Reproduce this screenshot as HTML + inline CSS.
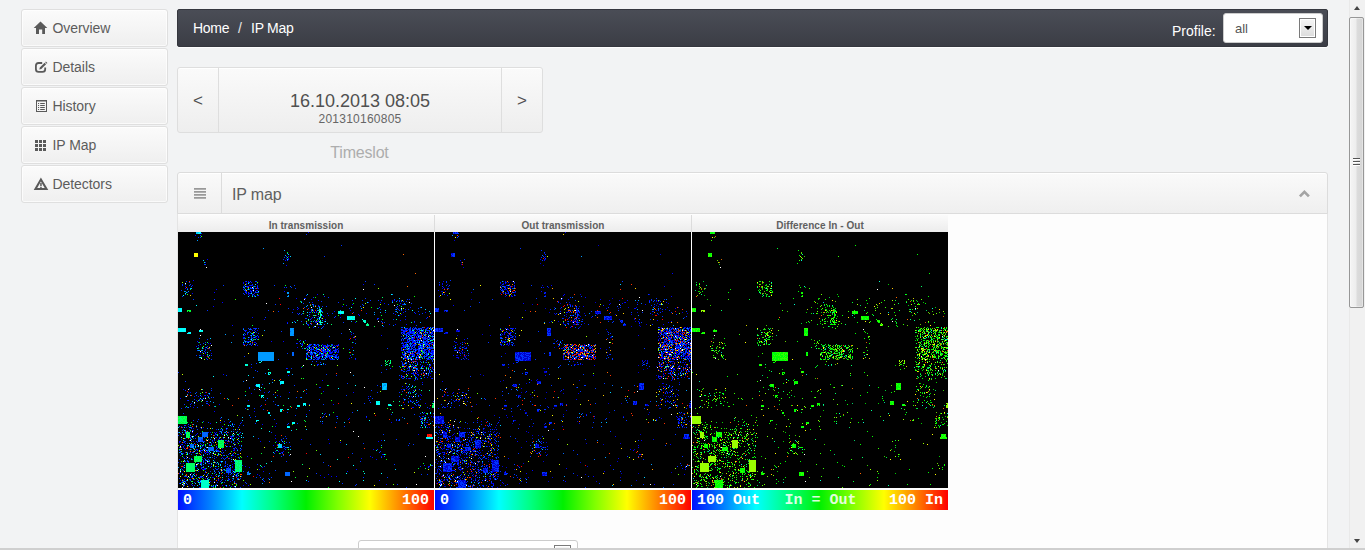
<!DOCTYPE html>
<html>
<head>
<meta charset="utf-8">
<title>IP Map</title>
<style>
*{box-sizing:border-box;margin:0;padding:0}
html,body{width:1365px;height:550px;overflow:hidden}
body{background:#f2f3f4;font-family:"Liberation Sans",sans-serif;color:#555;position:relative}
.abs{position:absolute}
/* sidebar */
.nav{position:absolute;left:21px;width:147px;height:38px;border:1px solid #dfdfdf;border-radius:3px;
 background:linear-gradient(#fbfbfb,#efefef);box-shadow:0 0 0 1px rgba(255,255,255,.7) inset;font-size:14px;color:#5c5c5c;line-height:36px;padding-left:31px}
.nav svg{position:absolute;left:12px;top:11px;width:16px;height:14px;fill:#5a5a5a;overflow:visible}.nav span{position:relative;top:0.4px;left:-0.5px;letter-spacing:-0.06px}
/* breadcrumb */
#crumb{left:177px;top:9px;width:1151px;height:38px;border-radius:2px;background:linear-gradient(#4a4d56,#3b3d45);border:1px solid #35373e;box-shadow:0 1px 0 #fdfdfd;color:#fff;font-size:14px;line-height:36px;padding-left:15px;letter-spacing:-0.3px}
#crumb .sep{position:absolute;left:60px;color:#e8e8e8}#crumb .c2{position:absolute;left:73px;letter-spacing:-0.25px}
#profile{left:994px;top:3px;line-height:36px;letter-spacing:0;font-size:14px;color:#fff}
#psel{left:1223px;top:13px;width:100px;height:30px;background:#fff;border:1px solid #ccc;border-radius:3px;font-size:13px;color:#555;line-height:29px;padding-left:11px}
.ddbtn{position:absolute;width:17px;height:20px;border:1px solid #7a7a7a;background:linear-gradient(#f6f6f6,#dcdcdc);box-shadow:0 0 0 1px #fff inset}
.ddbtn:after{content:"";position:absolute;left:3.5px;top:7px;border:4px solid transparent;border-top:4.5px solid #000;border-bottom:none}
/* timeslot */
#ts{left:177px;top:67px;width:366px;height:66px;border:1px solid #dedede;border-radius:3px;background:linear-gradient(#fafafa,#eeeeee);box-shadow:0 1px 0 #fff inset}
#ts .l,#ts .r{position:absolute;top:0;width:41px;height:64px;font-size:17px;line-height:66px;text-align:center;color:#505050}
#ts .l{left:0;border-right:1px solid #dedede}
#ts .r{right:0;border-left:1px solid #dedede}
#ts .d{position:absolute;left:41px;right:41px;top:23px;text-align:center;font-size:18px;color:#505050}
#ts .s{position:absolute;left:41px;right:41px;top:44px;text-align:center;font-size:12px;color:#666;letter-spacing:0.25px}
#tsl{left:177px;width:365px;top:144px;letter-spacing:-0.2px;text-align:center;font-size:16px;color:#adadad}
/* panel */
#ph{left:177px;top:172px;width:1151px;height:42px;border:1px solid #dcdcdc;border-radius:3px 3px 0 0;background:linear-gradient(#fafafa,#efefef);box-shadow:0 1px 0 #fff inset}
#ph .ic{position:absolute;left:0;top:0;width:44px;height:40px;border-right:1px solid #dcdcdc}
#ph .t{position:absolute;left:54px;top:0;line-height:43px;font-size:16px;color:#606060;letter-spacing:-0.15px}
#pb{left:177px;top:213px;width:1151px;height:340px;background:#fdfdfd;border:1px solid #e4e4e4}
.th{position:absolute;top:215px;height:17px;width:256px;background:linear-gradient(#fbfbfb,#ececec);font-size:10px;font-weight:bold;color:#606060;text-align:center;line-height:22px;letter-spacing:0.05px}
.map{position:absolute;top:232px;width:256px;height:256px;background:#000}
.bar{position:absolute;top:490px;height:20px;width:256px;background:linear-gradient(90deg,#0010ff 0%,#0080ff 12.5%,#00ffff 25%,#00ff80 37.5%,#00f000 50%,#80ff00 62.5%,#ffff00 75%,#ff8000 87.5%,#ff0000 100%);
 font-family:"Liberation Mono",monospace;font-weight:bold;font-size:15px;color:#fff;line-height:22px}
/* scrollbar */
#sb{left:1349px;top:0;width:16px;height:548px;background:#f1f1f1;border-left:1px solid #e9e9e9}
#thumb{left:1349px;top:17px;width:15px;height:291px;border:1px solid #979797;border-radius:2px;background:linear-gradient(90deg,#f5f5f5 0%,#ededed 48%,#dcdcdc 52%,#d6d6d6 100%);box-shadow:0 0 0 1px rgba(255,255,255,.35) inset}
.grip{position:absolute;left:1353px;width:7px;height:2px;background:linear-gradient(#555 50%,#fff 50%)}
.arr{position:absolute;left:1354px;width:0;height:0;border:3.5px solid transparent}
#bot{left:0;top:548px;width:1365px;height:2px;background:#cfcfcf}
</style>
</head>
<body>
<div class="nav" style="top:9px"><svg viewBox="0 0 16 14"><path d="M6.5 0.4 L13.3 7 H11 V13 H8.2 V8.6 H5 V13 H2 V7 H-0.3 Z"/></svg><span>Overview</span></div>
<div class="nav" style="top:48px"><svg viewBox="0 0 16 14"><path d="M8.2 3 H4.6 Q1.9 3 1.9 5.7 V9.2 Q1.9 11.9 4.6 11.9 H8.5 Q11.2 11.9 11.2 9.2 V7.6" fill="none" stroke="#5a5a5a" stroke-width="1.8"/><path d="M5.3 9.6 L5.8 7.6 L10.6 2.8 L12.1 4.3 L7.3 9.1 Z M11.2 2.2 L11.9 1.5 L13.4 3 L12.7 3.7 Z"/></svg><span>Details</span></div>
<div class="nav" style="top:87px"><svg viewBox="0 0 16 14"><path d="M2 1 H13 V13 H2 Z M3 2.4 V12 H12 V2.4 Z M4 4 H5.1 V5 H4Z M6.2 4 H10.8 V5 H6.2Z M4 6 H5.1 V7 H4Z M6.2 6 H10.8 V7 H6.2Z M4 8 H5.1 V9 H4Z M6.2 8 H10.8 V9 H6.2Z M4 10 H5.1 V11 H4Z M6.2 10 H10.8 V11 H6.2Z" fill-rule="evenodd"/></svg><span>History</span></div>
<div class="nav" style="top:126px"><svg viewBox="0 0 16 14"><path d="M1 2h3v3H1z M5 2h3v3H5z M9 2h3v3H9z M1 6h3v3H1z M5 6h3v3H5z M9 6h3v3H9z M1 10h3v3H1z M5 10h3v3H5z M9 10h3v3H9z"/></svg><span>IP Map</span></div>
<div class="nav" style="top:165px"><svg viewBox="0 0 16 14"><path d="M6.9 0.6 L14.3 12.9 H-0.3 Z M6.9 4.5 L3.2 10.9 H10.7 Z M6.2 6 H7.7 V9.3 H6.2Z M6.2 9.9 H7.7 V11 H6.2Z" fill-rule="evenodd"/></svg><span>Detectors</span></div>

<div id="crumb" class="abs">Home<span class="sep">/</span><span class="c2">IP Map</span><span id="profile" class="abs">Profile:</span></div>
<div id="psel" class="abs">all<div class="ddbtn" style="left:75px;top:4px"></div></div>

<div id="ts" class="abs"><div class="l">&lt;</div><div class="d">16.10.2013 08:05</div><div class="s">201310160805</div><div class="r">&gt;</div></div>
<div id="tsl" class="abs">Timeslot</div>

<div id="pb" class="abs"></div>
<div id="ph" class="abs"><div class="ic"><svg width="14" height="12" viewBox="0 0 14 12" style="position:absolute;left:16px;top:15px"><path d="M0 0h12v1.7H0z M0 3h12v1.7H0z M0 6h12v1.7H0z M0 9h12v1.7H0z" fill="#999"/></svg></div><div class="t">IP map</div>
<svg width="14" height="10" viewBox="0 0 14 10" style="position:absolute;left:1120px;top:16px"><path d="M1.9 7.4 L6.4 2.9 L10.9 7.4" stroke="#a4a4a4" stroke-width="2.7" fill="none"/></svg></div>

<div class="th" style="left:178px">In transmission</div>
<div class="th" style="left:435px">Out transmission</div>
<div class="th" style="left:692px">Difference In - Out</div>
<div class="abs" style="left:434px;top:215px;width:1px;height:17px;background:#dcdcdc"></div><div class="abs" style="left:691px;top:215px;width:1px;height:17px;background:#dcdcdc"></div>
<div class="map" style="left:178px" id="m1"><svg width="256" height="256" viewBox="0 0 256 256" shape-rendering="crispEdges" style="display:block"><!--M1s--><path fill="#00ffff" d="M21 0h2v1h-2zM20 1h2v1h-2zM70 51h1v1h-1zM75 56h1v1h-1zM80 59h1v1h-1zM7 61h1v1h-1zM73 61h1v1h-1zM213 62h1v1h-1zM5 63h1v1h-1zM177 66h1v1h-1zM189 70h1v1h-1zM18 73h1v1h-1zM0 76h4v1h-4zM0 77h4v1h-4zM142 77h1v1h-1zM0 78h4v1h-4zM142 78h1v1h-1zM207 78h1v1h-1zM234 78h1v1h-1zM0 79h4v1h-4zM125 79h1v1h-1zM141 79h1v1h-1zM162 79h1v1h-1zM129 80h1v1h-1zM161 80h5v1h-5zM160 81h1v1h-1zM162 81h3v1h-3zM252 81h1v1h-1zM143 82h1v1h-1zM129 83h1v1h-1zM220 83h1v1h-1zM169 84h1v1h-1zM173 84h1v1h-1zM176 84h1v1h-1zM136 85h1v1h-1zM141 85h1v1h-1zM169 85h5v1h-5zM175 85h2v1h-2zM141 86h1v1h-1zM169 86h2v1h-2zM172 86h2v1h-2zM130 87h1v1h-1zM169 87h4v1h-4zM174 87h3v1h-3zM184 87h1v1h-1zM147 89h1v1h-1zM114 90h1v1h-1zM142 90h1v1h-1zM149 91h1v1h-1zM143 92h1v1h-1zM204 93h1v1h-1zM226 95h1v1h-1zM0 96h8v1h-8zM0 97h8v1h-8zM253 97h1v1h-1zM0 98h8v1h-8zM21 98h4v1h-4zM244 98h1v1h-1zM0 99h8v1h-8zM21 99h2v1h-2zM24 99h1v1h-1zM11 100h2v1h-2zM76 100h1v1h-1zM9 101h4v1h-4zM230 104h1v1h-1zM73 107h1v1h-1zM255 107h1v1h-1zM252 108h1v1h-1zM241 110h1v1h-1zM245 110h1v1h-1zM246 112h1v1h-1zM242 113h1v1h-1zM255 113h1v1h-1zM156 115h1v1h-1zM143 116h1v1h-1zM230 116h1v1h-1zM150 117h1v1h-1zM137 121h1v1h-1zM143 121h1v1h-1zM250 122h1v1h-1zM139 123h1v1h-1zM144 124h1v1h-1zM234 124h1v1h-1zM22 125h1v1h-1zM238 125h1v1h-1zM128 126h1v1h-1zM133 126h1v1h-1zM154 126h1v1h-1zM225 126h1v1h-1zM83 129h1v1h-1zM227 131h1v1h-1zM67 132h1v1h-1zM133 132h1v1h-1zM143 132h1v1h-1zM235 135h1v1h-1zM110 139h2v1h-2zM109 140h3v1h-3zM90 141h1v1h-1zM90 142h1v1h-1zM70 143h1v1h-1zM35 144h1v1h-1zM103 149h3v1h-3zM102 150h1v1h-1zM104 150h2v1h-2zM102 151h4v1h-4zM78 152h1v1h-1zM80 152h2v1h-2zM78 153h4v1h-4zM177 153h1v1h-1zM79 154h3v1h-3zM81 155h1v1h-1zM83 155h1v1h-1zM160 156h1v1h-1zM236 159h1v1h-1zM237 162h1v1h-1zM83 163h3v1h-3zM84 164h1v1h-1zM83 165h1v1h-1zM85 165h1v1h-1zM97 165h1v1h-1zM226 167h1v1h-1zM198 169h1v1h-1zM200 169h2v1h-2zM198 170h2v1h-2zM125 171h3v1h-3zM198 171h4v1h-4zM125 172h3v1h-3zM198 172h4v1h-4zM210 172h1v1h-1zM212 172h1v1h-1zM69 173h3v1h-3zM119 173h3v1h-3zM125 173h1v1h-1zM127 173h1v1h-1zM211 173h2v1h-2zM223 173h1v1h-1zM70 174h1v1h-1zM119 174h2v1h-2zM102 177h1v1h-1zM104 177h1v1h-1zM103 178h1v1h-1zM102 179h1v1h-1zM90 180h2v1h-2zM244 180h1v1h-1zM252 180h1v1h-1zM90 181h2v1h-2zM252 181h1v1h-1zM246 186h1v1h-1zM78 188h3v1h-3zM191 188h1v1h-1zM78 189h1v1h-1zM243 189h1v1h-1zM114 190h3v1h-3zM114 191h3v1h-3zM244 191h1v1h-1zM252 191h1v1h-1zM54 192h1v1h-1zM50 193h1v1h-1zM243 193h1v1h-1zM109 194h2v1h-2zM109 195h3v1h-3zM91 199h1v1h-1zM64 201h1v1h-1zM48 202h1v1h-1zM15 204h1v1h-1zM3 205h1v1h-1zM33 205h1v1h-1zM63 205h1v1h-1zM248 205h7v1h-7zM6 206h1v1h-1zM60 206h1v1h-1zM249 206h6v1h-6zM32 210h1v1h-1zM106 211h1v1h-1zM10 213h1v1h-1zM17 214h1v1h-1zM20 214h1v1h-1zM22 216h1v1h-1zM3 217h1v1h-1zM36 219h1v1h-1zM38 219h1v1h-1zM32 220h1v1h-1zM9 222h1v1h-1zM206 222h1v1h-1zM6 228h1v1h-1zM56 228h1v1h-1zM43 229h1v1h-1zM175 233h1v1h-1zM30 234h1v1h-1zM6 235h1v1h-1zM43 235h1v1h-1zM2 237h1v1h-1zM20 237h1v1h-1zM55 239h1v1h-1zM168 241h1v1h-1zM186 241h1v1h-1zM203 241h1v1h-1zM15 242h1v1h-1zM40 244h1v1h-1zM29 246h1v1h-1zM9 248h1v1h-1zM185 248h1v1h-1zM22 249h1v1h-1zM161 249h1v1h-1zM20 250h1v1h-1zM2 251h1v1h-1zM48 253h1v1h-1zM37 254h1v1h-1z"/><path fill="#0033ff" d="M23 1h1v1h-1zM128 2h1v1h-1zM22 3h1v1h-1zM20 5h1v1h-1zM22 5h1v1h-1zM163 13h1v1h-1zM108 24h1v1h-1zM146 24h1v1h-1zM106 25h1v1h-1zM105 27h1v1h-1zM109 28h1v1h-1zM26 32h2v1h-2zM8 49h1v1h-1zM68 49h1v1h-1zM72 49h1v1h-1zM77 49h2v1h-2zM187 49h1v1h-1zM11 50h1v1h-1zM70 50h2v1h-2zM4 52h1v1h-1zM12 52h1v1h-1zM74 52h1v1h-1zM196 52h1v1h-1zM4 53h1v1h-1zM11 53h1v1h-1zM45 53h1v1h-1zM66 53h1v1h-1zM73 53h1v1h-1zM96 53h1v1h-1zM116 53h1v1h-1zM13 54h1v1h-1zM68 54h2v1h-2zM75 54h1v1h-1zM79 54h1v1h-1zM66 55h1v1h-1zM72 55h1v1h-1zM79 55h1v1h-1zM106 55h1v1h-1zM108 55h1v1h-1zM113 55h1v1h-1zM66 56h1v1h-1zM72 56h3v1h-3zM77 56h1v1h-1zM117 56h1v1h-1zM65 57h1v1h-1zM69 57h1v1h-1zM3 58h1v1h-1zM66 58h2v1h-2zM68 59h1v1h-1zM73 59h1v1h-1zM75 59h1v1h-1zM77 59h1v1h-1zM67 60h1v1h-1zM70 60h1v1h-1zM73 60h1v1h-1zM77 60h4v1h-4zM65 61h1v1h-1zM68 61h1v1h-1zM72 61h1v1h-1zM7 62h1v1h-1zM66 62h1v1h-1zM74 62h2v1h-2zM76 63h1v1h-1zM80 63h1v1h-1zM128 63h1v1h-1zM4 64h1v1h-1zM146 64h1v1h-1zM135 65h1v1h-1zM150 65h1v1h-1zM127 66h1v1h-1zM187 66h1v1h-1zM15 67h1v1h-1zM36 67h1v1h-1zM165 67h1v1h-1zM216 67h1v1h-1zM229 67h1v1h-1zM231 67h1v1h-1zM174 68h1v1h-1zM184 68h1v1h-1zM192 68h1v1h-1zM200 68h1v1h-1zM203 68h1v1h-1zM221 68h1v1h-1zM223 68h1v1h-1zM123 69h1v1h-1zM143 69h1v1h-1zM214 69h1v1h-1zM221 69h1v1h-1zM223 69h1v1h-1zM225 69h1v1h-1zM228 69h1v1h-1zM160 70h1v1h-1zM125 71h1v1h-1zM222 71h1v1h-1zM233 71h1v1h-1zM97 72h1v1h-1zM135 72h1v1h-1zM184 72h1v1h-1zM210 72h1v1h-1zM225 72h1v1h-1zM135 73h1v1h-1zM137 73h1v1h-1zM168 73h1v1h-1zM221 73h1v1h-1zM140 74h2v1h-2zM144 74h1v1h-1zM148 74h1v1h-1zM182 74h1v1h-1zM219 74h1v1h-1zM119 75h1v1h-1zM126 75h1v1h-1zM201 75h1v1h-1zM218 75h1v1h-1zM242 75h1v1h-1zM110 76h1v1h-1zM130 76h1v1h-1zM141 76h1v1h-1zM171 76h1v1h-1zM219 76h1v1h-1zM240 76h1v1h-1zM133 77h1v1h-1zM202 77h1v1h-1zM217 77h1v1h-1zM230 77h1v1h-1zM29 78h1v1h-1zM90 78h1v1h-1zM133 78h1v1h-1zM143 78h1v1h-1zM221 78h1v1h-1zM223 78h1v1h-1zM100 79h1v1h-1zM133 79h1v1h-1zM217 79h1v1h-1zM227 79h1v1h-1zM240 79h1v1h-1zM114 80h1v1h-1zM131 80h2v1h-2zM138 80h1v1h-1zM140 80h1v1h-1zM175 80h1v1h-1zM207 80h1v1h-1zM236 80h1v1h-1zM124 81h1v1h-1zM149 81h1v1h-1zM154 81h1v1h-1zM215 81h1v1h-1zM244 81h1v1h-1zM120 82h1v1h-1zM123 82h1v1h-1zM131 82h1v1h-1zM241 82h1v1h-1zM131 84h1v1h-1zM140 84h1v1h-1zM157 84h1v1h-1zM227 84h1v1h-1zM87 85h1v1h-1zM156 85h1v1h-1zM249 85h1v1h-1zM127 86h2v1h-2zM139 86h1v1h-1zM143 86h1v1h-1zM200 86h1v1h-1zM132 87h1v1h-1zM199 87h1v1h-1zM215 87h1v1h-1zM136 88h1v1h-1zM140 88h1v1h-1zM116 89h1v1h-1zM123 89h1v1h-1zM137 89h1v1h-1zM139 89h1v1h-1zM146 89h1v1h-1zM203 89h1v1h-1zM236 89h1v1h-1zM128 90h1v1h-1zM138 90h1v1h-1zM165 90h1v1h-1zM204 90h1v1h-1zM206 90h1v1h-1zM109 91h1v1h-1zM129 92h1v1h-1zM133 92h1v1h-1zM138 92h1v1h-1zM141 92h1v1h-1zM146 92h1v1h-1zM130 93h1v1h-1zM238 93h1v1h-1zM145 94h1v1h-1zM205 94h1v1h-1zM144 95h1v1h-1zM223 95h2v1h-2zM232 95h1v1h-1zM237 95h1v1h-1zM245 95h1v1h-1zM254 95h2v1h-2zM65 96h1v1h-1zM70 96h1v1h-1zM72 96h1v1h-1zM76 96h3v1h-3zM80 96h1v1h-1zM227 96h3v1h-3zM232 96h1v1h-1zM234 96h1v1h-1zM236 96h3v1h-3zM240 96h4v1h-4zM249 96h1v1h-1zM252 96h2v1h-2zM73 97h1v1h-1zM77 97h1v1h-1zM223 97h1v1h-1zM227 97h1v1h-1zM231 97h2v1h-2zM234 97h3v1h-3zM238 97h4v1h-4zM245 97h1v1h-1zM247 97h2v1h-2zM252 97h1v1h-1zM66 98h1v1h-1zM223 98h1v1h-1zM225 98h1v1h-1zM228 98h2v1h-2zM231 98h2v1h-2zM241 98h1v1h-1zM245 98h1v1h-1zM249 98h3v1h-3zM253 98h1v1h-1zM67 99h1v1h-1zM71 99h1v1h-1zM77 99h1v1h-1zM103 99h1v1h-1zM225 99h3v1h-3zM231 99h2v1h-2zM235 99h1v1h-1zM238 99h1v1h-1zM240 99h1v1h-1zM244 99h1v1h-1zM251 99h1v1h-1zM254 99h2v1h-2zM69 100h1v1h-1zM72 100h1v1h-1zM173 100h1v1h-1zM223 100h1v1h-1zM230 100h1v1h-1zM235 100h2v1h-2zM239 100h1v1h-1zM243 100h1v1h-1zM247 100h2v1h-2zM253 100h1v1h-1zM66 101h1v1h-1zM69 101h1v1h-1zM75 101h1v1h-1zM80 101h1v1h-1zM163 101h1v1h-1zM175 101h1v1h-1zM223 101h1v1h-1zM225 101h2v1h-2zM228 101h2v1h-2zM234 101h2v1h-2zM238 101h2v1h-2zM241 101h2v1h-2zM245 101h1v1h-1zM252 101h3v1h-3zM67 102h1v1h-1zM74 102h1v1h-1zM224 102h1v1h-1zM226 102h3v1h-3zM230 102h2v1h-2zM236 102h2v1h-2zM243 102h1v1h-1zM245 102h2v1h-2zM248 102h1v1h-1zM250 102h1v1h-1zM55 103h1v1h-1zM72 103h1v1h-1zM79 103h1v1h-1zM231 103h2v1h-2zM235 103h1v1h-1zM240 103h2v1h-2zM243 103h1v1h-1zM250 103h1v1h-1zM252 103h1v1h-1zM73 104h1v1h-1zM77 104h2v1h-2zM151 104h1v1h-1zM223 104h1v1h-1zM225 104h1v1h-1zM228 104h1v1h-1zM232 104h2v1h-2zM236 104h1v1h-1zM238 104h1v1h-1zM241 104h1v1h-1zM245 104h1v1h-1zM247 104h1v1h-1zM253 104h1v1h-1zM66 105h1v1h-1zM73 105h1v1h-1zM75 105h1v1h-1zM175 105h1v1h-1zM228 105h1v1h-1zM231 105h1v1h-1zM233 105h1v1h-1zM235 105h1v1h-1zM238 105h1v1h-1zM240 105h1v1h-1zM242 105h1v1h-1zM246 105h2v1h-2zM250 105h2v1h-2zM21 106h1v1h-1zM65 106h1v1h-1zM73 106h2v1h-2zM224 106h1v1h-1zM227 106h1v1h-1zM230 106h1v1h-1zM234 106h1v1h-1zM241 106h1v1h-1zM245 106h4v1h-4zM251 106h2v1h-2zM255 106h1v1h-1zM29 107h1v1h-1zM70 107h1v1h-1zM72 107h1v1h-1zM76 107h1v1h-1zM79 107h1v1h-1zM223 107h1v1h-1zM225 107h1v1h-1zM229 107h3v1h-3zM239 107h1v1h-1zM242 107h1v1h-1zM247 107h1v1h-1zM249 107h1v1h-1zM251 107h1v1h-1zM73 108h1v1h-1zM122 108h1v1h-1zM223 108h1v1h-1zM229 108h1v1h-1zM231 108h3v1h-3zM235 108h1v1h-1zM238 108h5v1h-5zM245 108h1v1h-1zM248 108h2v1h-2zM68 109h1v1h-1zM71 109h1v1h-1zM121 109h1v1h-1zM231 109h1v1h-1zM235 109h1v1h-1zM237 109h1v1h-1zM239 109h1v1h-1zM243 109h2v1h-2zM246 109h2v1h-2zM249 109h1v1h-1zM252 109h1v1h-1zM20 110h1v1h-1zM27 110h1v1h-1zM67 110h1v1h-1zM69 110h1v1h-1zM224 110h1v1h-1zM227 110h4v1h-4zM232 110h1v1h-1zM234 110h1v1h-1zM237 110h1v1h-1zM246 110h2v1h-2zM250 110h1v1h-1zM253 110h1v1h-1zM25 111h1v1h-1zM72 111h1v1h-1zM74 111h1v1h-1zM78 111h1v1h-1zM118 111h1v1h-1zM223 111h2v1h-2zM231 111h1v1h-1zM233 111h1v1h-1zM241 111h1v1h-1zM243 111h2v1h-2zM246 111h3v1h-3zM252 111h1v1h-1zM22 112h1v1h-1zM65 112h1v1h-1zM69 112h1v1h-1zM71 112h2v1h-2zM77 112h1v1h-1zM124 112h1v1h-1zM131 112h3v1h-3zM139 112h2v1h-2zM149 112h1v1h-1zM153 112h2v1h-2zM227 112h2v1h-2zM232 112h2v1h-2zM237 112h2v1h-2zM242 112h1v1h-1zM247 112h1v1h-1zM249 112h2v1h-2zM255 112h1v1h-1zM20 113h1v1h-1zM68 113h1v1h-1zM73 113h1v1h-1zM124 113h1v1h-1zM130 113h3v1h-3zM136 113h1v1h-1zM138 113h1v1h-1zM147 113h1v1h-1zM149 113h3v1h-3zM154 113h1v1h-1zM160 113h1v1h-1zM225 113h1v1h-1zM228 113h3v1h-3zM234 113h1v1h-1zM236 113h2v1h-2zM243 113h2v1h-2zM250 113h2v1h-2zM129 114h3v1h-3zM134 114h2v1h-2zM140 114h1v1h-1zM143 114h1v1h-1zM149 114h1v1h-1zM157 114h1v1h-1zM225 114h1v1h-1zM227 114h2v1h-2zM230 114h3v1h-3zM234 114h1v1h-1zM236 114h1v1h-1zM240 114h1v1h-1zM242 114h1v1h-1zM247 114h1v1h-1zM251 114h1v1h-1zM255 114h1v1h-1zM135 115h1v1h-1zM147 115h2v1h-2zM154 115h1v1h-1zM229 115h1v1h-1zM231 115h1v1h-1zM233 115h1v1h-1zM236 115h1v1h-1zM243 115h2v1h-2zM246 115h1v1h-1zM248 115h1v1h-1zM250 115h1v1h-1zM252 115h2v1h-2zM25 116h1v1h-1zM29 116h1v1h-1zM124 116h1v1h-1zM129 116h1v1h-1zM133 116h1v1h-1zM138 116h2v1h-2zM146 116h1v1h-1zM154 116h1v1h-1zM160 116h1v1h-1zM209 116h1v1h-1zM223 116h1v1h-1zM228 116h1v1h-1zM231 116h1v1h-1zM233 116h2v1h-2zM237 116h1v1h-1zM240 116h1v1h-1zM242 116h1v1h-1zM244 116h1v1h-1zM250 116h1v1h-1zM253 116h3v1h-3zM27 117h1v1h-1zM130 117h1v1h-1zM132 117h2v1h-2zM135 117h1v1h-1zM138 117h1v1h-1zM145 117h2v1h-2zM149 117h1v1h-1zM152 117h1v1h-1zM157 117h1v1h-1zM159 117h1v1h-1zM171 117h1v1h-1zM227 117h1v1h-1zM232 117h2v1h-2zM235 117h3v1h-3zM239 117h3v1h-3zM246 117h3v1h-3zM19 118h1v1h-1zM32 118h1v1h-1zM129 118h1v1h-1zM136 118h1v1h-1zM147 118h1v1h-1zM149 118h1v1h-1zM155 118h3v1h-3zM223 118h1v1h-1zM225 118h1v1h-1zM240 118h3v1h-3zM244 118h1v1h-1zM246 118h1v1h-1zM250 118h1v1h-1zM254 118h2v1h-2zM26 119h1v1h-1zM133 119h1v1h-1zM138 119h1v1h-1zM140 119h1v1h-1zM145 119h1v1h-1zM147 119h5v1h-5zM158 119h1v1h-1zM160 119h1v1h-1zM226 119h1v1h-1zM228 119h1v1h-1zM232 119h2v1h-2zM235 119h3v1h-3zM240 119h1v1h-1zM246 119h1v1h-1zM251 119h1v1h-1zM253 119h1v1h-1zM24 120h1v1h-1zM27 120h1v1h-1zM129 120h1v1h-1zM131 120h2v1h-2zM135 120h1v1h-1zM137 120h1v1h-1zM139 120h1v1h-1zM142 120h1v1h-1zM145 120h1v1h-1zM153 120h1v1h-1zM226 120h2v1h-2zM229 120h3v1h-3zM234 120h1v1h-1zM244 120h1v1h-1zM246 120h2v1h-2zM251 120h1v1h-1zM255 120h1v1h-1zM109 121h1v1h-1zM129 121h1v1h-1zM132 121h2v1h-2zM136 121h1v1h-1zM138 121h1v1h-1zM141 121h1v1h-1zM148 121h1v1h-1zM152 121h1v1h-1zM228 121h1v1h-1zM238 121h1v1h-1zM240 121h2v1h-2zM243 121h1v1h-1zM248 121h1v1h-1zM252 121h1v1h-1zM255 121h1v1h-1zM132 122h2v1h-2zM140 122h2v1h-2zM143 122h3v1h-3zM147 122h1v1h-1zM149 122h1v1h-1zM155 122h2v1h-2zM225 122h1v1h-1zM227 122h1v1h-1zM231 122h1v1h-1zM234 122h1v1h-1zM236 122h1v1h-1zM243 122h2v1h-2zM248 122h2v1h-2zM254 122h2v1h-2zM18 123h1v1h-1zM21 123h1v1h-1zM29 123h1v1h-1zM33 123h1v1h-1zM130 123h1v1h-1zM133 123h1v1h-1zM135 123h1v1h-1zM144 123h1v1h-1zM148 123h4v1h-4zM153 123h2v1h-2zM157 123h2v1h-2zM172 123h1v1h-1zM225 123h1v1h-1zM234 123h1v1h-1zM236 123h1v1h-1zM239 123h2v1h-2zM246 123h1v1h-1zM248 123h2v1h-2zM252 123h1v1h-1zM254 123h1v1h-1zM30 124h1v1h-1zM66 124h1v1h-1zM130 124h2v1h-2zM137 124h2v1h-2zM141 124h1v1h-1zM150 124h2v1h-2zM153 124h1v1h-1zM155 124h1v1h-1zM157 124h2v1h-2zM160 124h1v1h-1zM226 124h2v1h-2zM230 124h2v1h-2zM240 124h1v1h-1zM242 124h1v1h-1zM245 124h4v1h-4zM251 124h1v1h-1zM128 125h1v1h-1zM132 125h1v1h-1zM135 125h2v1h-2zM138 125h3v1h-3zM146 125h4v1h-4zM151 125h1v1h-1zM158 125h3v1h-3zM173 125h1v1h-1zM224 125h1v1h-1zM227 125h1v1h-1zM230 125h1v1h-1zM232 125h1v1h-1zM240 125h1v1h-1zM243 125h2v1h-2zM250 125h1v1h-1zM252 125h1v1h-1zM140 126h2v1h-2zM143 126h1v1h-1zM158 126h1v1h-1zM160 126h1v1h-1zM177 126h1v1h-1zM226 126h1v1h-1zM229 126h1v1h-1zM231 126h1v1h-1zM233 126h1v1h-1zM237 126h2v1h-2zM241 126h1v1h-1zM246 126h1v1h-1zM248 126h2v1h-2zM252 126h2v1h-2zM255 126h1v1h-1zM29 127h1v1h-1zM33 127h1v1h-1zM100 127h1v1h-1zM132 127h1v1h-1zM136 127h1v1h-1zM139 127h2v1h-2zM143 127h2v1h-2zM154 127h3v1h-3zM225 127h1v1h-1zM232 127h1v1h-1zM235 127h1v1h-1zM238 127h2v1h-2zM242 127h1v1h-1zM249 127h2v1h-2zM253 127h1v1h-1zM233 128h1v1h-1zM248 128h1v1h-1zM254 128h1v1h-1zM134 129h1v1h-1zM138 129h1v1h-1zM223 129h1v1h-1zM236 129h1v1h-1zM242 129h1v1h-1zM245 129h1v1h-1zM254 129h1v1h-1zM142 130h1v1h-1zM227 130h2v1h-2zM78 131h1v1h-1zM224 131h1v1h-1zM228 131h1v1h-1zM237 131h1v1h-1zM239 131h1v1h-1zM255 131h1v1h-1zM73 132h1v1h-1zM140 132h1v1h-1zM142 132h1v1h-1zM145 132h1v1h-1zM147 132h1v1h-1zM224 132h3v1h-3zM232 132h1v1h-1zM234 132h1v1h-1zM242 132h1v1h-1zM249 132h1v1h-1zM139 133h1v1h-1zM203 133h1v1h-1zM224 133h1v1h-1zM228 133h1v1h-1zM235 133h1v1h-1zM244 133h1v1h-1zM252 133h1v1h-1zM221 134h1v1h-1zM233 134h2v1h-2zM236 134h1v1h-1zM244 134h1v1h-1zM251 134h1v1h-1zM123 135h1v1h-1zM226 135h1v1h-1zM230 135h1v1h-1zM108 136h1v1h-1zM113 136h1v1h-1zM212 136h1v1h-1zM229 136h1v1h-1zM231 136h1v1h-1zM236 136h2v1h-2zM239 136h1v1h-1zM242 136h1v1h-1zM245 136h1v1h-1zM208 137h1v1h-1zM234 137h1v1h-1zM238 137h1v1h-1zM248 137h1v1h-1zM255 137h1v1h-1zM77 138h1v1h-1zM223 138h1v1h-1zM230 138h2v1h-2zM234 138h1v1h-1zM243 138h1v1h-1zM248 138h1v1h-1zM251 138h1v1h-1zM79 139h1v1h-1zM225 139h2v1h-2zM228 139h1v1h-1zM251 139h1v1h-1zM254 139h1v1h-1zM0 140h1v1h-1zM203 140h1v1h-1zM235 140h1v1h-1zM237 140h1v1h-1zM245 140h1v1h-1zM251 140h1v1h-1zM233 141h1v1h-1zM235 141h1v1h-1zM243 141h1v1h-1zM247 141h1v1h-1zM148 142h1v1h-1zM248 142h1v1h-1zM250 142h1v1h-1zM48 143h1v1h-1zM158 143h1v1h-1zM221 143h1v1h-1zM223 143h1v1h-1zM246 143h1v1h-1zM250 143h1v1h-1zM224 144h1v1h-1zM237 144h1v1h-1zM242 144h1v1h-1zM223 145h1v1h-1zM237 145h2v1h-2zM246 145h1v1h-1zM225 146h1v1h-1zM228 146h1v1h-1zM231 146h2v1h-2zM254 146h1v1h-1zM94 147h1v1h-1zM221 147h1v1h-1zM237 147h1v1h-1zM239 147h1v1h-1zM7 149h1v1h-1zM169 151h1v1h-1zM228 151h1v1h-1zM84 152h1v1h-1zM244 152h1v1h-1zM77 153h1v1h-1zM116 153h1v1h-1zM199 153h1v1h-1zM234 153h1v1h-1zM202 154h1v1h-1zM71 155h1v1h-1zM141 155h1v1h-1zM11 156h1v1h-1zM33 156h1v1h-1zM71 156h1v1h-1zM231 156h1v1h-1zM76 157h1v1h-1zM225 157h2v1h-2zM230 157h1v1h-1zM237 157h1v1h-1zM241 157h1v1h-1zM7 158h1v1h-1zM33 158h1v1h-1zM82 158h1v1h-1zM193 158h1v1h-1zM235 158h1v1h-1zM91 159h1v1h-1zM224 159h1v1h-1zM18 160h1v1h-1zM27 160h1v1h-1zM90 160h1v1h-1zM199 160h1v1h-1zM221 160h1v1h-1zM232 160h1v1h-1zM30 161h1v1h-1zM42 161h1v1h-1zM230 161h1v1h-1zM238 161h1v1h-1zM95 162h1v1h-1zM18 163h1v1h-1zM29 163h1v1h-1zM168 163h1v1h-1zM228 163h1v1h-1zM240 163h1v1h-1zM30 164h1v1h-1zM102 164h1v1h-1zM192 164h1v1h-1zM221 164h1v1h-1zM240 164h1v1h-1zM33 165h1v1h-1zM35 165h1v1h-1zM118 165h1v1h-1zM122 165h1v1h-1zM234 165h1v1h-1zM31 166h1v1h-1zM89 166h1v1h-1zM190 166h1v1h-1zM194 166h1v1h-1zM230 166h1v1h-1zM16 167h1v1h-1zM21 167h1v1h-1zM23 167h2v1h-2zM141 167h1v1h-1zM227 167h1v1h-1zM10 168h1v1h-1zM21 168h1v1h-1zM87 168h1v1h-1zM191 168h1v1h-1zM232 168h1v1h-1zM19 169h1v1h-1zM28 169h2v1h-2zM95 169h1v1h-1zM230 169h1v1h-1zM232 169h1v1h-1zM235 169h1v1h-1zM240 169h1v1h-1zM255 169h1v1h-1zM192 170h1v1h-1zM230 170h1v1h-1zM238 170h2v1h-2zM28 171h2v1h-2zM186 171h1v1h-1zM6 172h1v1h-1zM12 172h1v1h-1zM97 172h1v1h-1zM131 172h1v1h-1zM145 172h1v1h-1zM237 172h1v1h-1zM240 172h1v1h-1zM83 173h1v1h-1zM99 173h1v1h-1zM240 173h2v1h-2zM12 174h1v1h-1zM7 175h1v1h-1zM9 175h1v1h-1zM19 175h1v1h-1zM249 175h1v1h-1zM3 176h1v1h-1zM67 176h1v1h-1zM76 176h1v1h-1zM70 177h1v1h-1zM85 177h1v1h-1zM131 178h1v1h-1zM109 180h1v1h-1zM174 180h1v1h-1zM5 181h1v1h-1zM242 181h1v1h-1zM245 181h1v1h-1zM255 181h1v1h-1zM146 182h1v1h-1zM213 182h1v1h-1zM236 182h1v1h-1zM249 182h1v1h-1zM117 183h1v1h-1zM151 183h1v1h-1zM247 183h1v1h-1zM77 184h1v1h-1zM145 184h1v1h-1zM159 184h1v1h-1zM188 184h1v1h-1zM241 184h1v1h-1zM245 184h1v1h-1zM72 185h1v1h-1zM144 185h1v1h-1zM224 185h1v1h-1zM246 185h1v1h-1zM250 185h1v1h-1zM20 187h1v1h-1zM96 187h1v1h-1zM218 187h1v1h-1zM242 187h3v1h-3zM246 187h1v1h-1zM251 187h1v1h-1zM15 188h1v1h-1zM218 188h1v1h-1zM244 188h1v1h-1zM19 189h1v1h-1zM25 189h1v1h-1zM254 189h1v1h-1zM30 190h1v1h-1zM158 190h1v1h-1zM246 190h1v1h-1zM249 190h1v1h-1zM54 191h1v1h-1zM62 191h1v1h-1zM77 191h1v1h-1zM110 191h1v1h-1zM119 191h1v1h-1zM10 192h1v1h-1zM56 192h1v1h-1zM109 192h1v1h-1zM246 192h1v1h-1zM6 193h2v1h-2zM18 193h1v1h-1zM65 193h1v1h-1zM246 193h1v1h-1zM1 194h1v1h-1zM166 194h1v1h-1zM4 195h1v1h-1zM13 195h1v1h-1zM60 195h1v1h-1zM242 195h1v1h-1zM13 196h1v1h-1zM23 196h1v1h-1zM5 197h1v1h-1zM19 197h1v1h-1zM55 197h1v1h-1zM4 198h1v1h-1zM14 198h1v1h-1zM7 199h1v1h-1zM12 199h1v1h-1zM43 199h1v1h-1zM55 199h1v1h-1zM59 199h1v1h-1zM0 200h1v1h-1zM46 200h1v1h-1zM50 200h1v1h-1zM62 200h1v1h-1zM93 200h1v1h-1zM7 201h1v1h-1zM22 201h1v1h-1zM37 201h1v1h-1zM43 201h1v1h-1zM61 201h1v1h-1zM38 202h1v1h-1zM44 202h1v1h-1zM205 202h1v1h-1zM0 203h1v1h-1zM17 203h1v1h-1zM36 203h1v1h-1zM54 203h1v1h-1zM60 203h1v1h-1zM13 204h1v1h-1zM53 204h3v1h-3zM107 204h1v1h-1zM12 205h1v1h-1zM26 205h1v1h-1zM38 205h1v1h-1zM41 205h1v1h-1zM15 206h1v1h-1zM17 206h1v1h-1zM54 206h1v1h-1zM80 206h1v1h-1zM105 206h1v1h-1zM108 206h1v1h-1zM23 207h2v1h-2zM30 207h1v1h-1zM36 207h1v1h-1zM103 207h1v1h-1zM218 207h1v1h-1zM11 208h1v1h-1zM21 208h1v1h-1zM23 208h2v1h-2zM34 208h1v1h-1zM47 208h1v1h-1zM60 208h1v1h-1zM103 208h1v1h-1zM2 209h1v1h-1zM6 209h2v1h-2zM13 209h1v1h-1zM18 209h1v1h-1zM23 209h1v1h-1zM26 209h1v1h-1zM51 209h1v1h-1zM53 209h1v1h-1zM91 209h1v1h-1zM6 210h1v1h-1zM35 210h1v1h-1zM53 210h1v1h-1zM108 210h1v1h-1zM111 210h1v1h-1zM9 211h1v1h-1zM22 211h1v1h-1zM47 211h1v1h-1zM185 211h1v1h-1zM231 211h1v1h-1zM4 212h1v1h-1zM25 212h1v1h-1zM33 212h1v1h-1zM132 212h1v1h-1zM235 212h1v1h-1zM17 213h1v1h-1zM25 213h1v1h-1zM32 213h1v1h-1zM230 213h1v1h-1zM5 214h1v1h-1zM19 214h1v1h-1zM27 214h1v1h-1zM38 214h1v1h-1zM63 214h1v1h-1zM105 214h2v1h-2zM112 214h1v1h-1zM1 215h1v1h-1zM22 215h2v1h-2zM57 215h1v1h-1zM108 215h1v1h-1zM6 216h1v1h-1zM16 216h1v1h-1zM26 216h1v1h-1zM39 216h1v1h-1zM55 216h2v1h-2zM58 216h1v1h-1zM97 216h1v1h-1zM18 217h1v1h-1zM26 217h2v1h-2zM38 217h1v1h-1zM107 217h1v1h-1zM199 217h1v1h-1zM1 218h1v1h-1zM17 218h1v1h-1zM19 218h1v1h-1zM24 218h1v1h-1zM29 218h1v1h-1zM37 218h3v1h-3zM47 218h1v1h-1zM62 218h1v1h-1zM2 219h1v1h-1zM22 219h1v1h-1zM29 219h1v1h-1zM39 219h3v1h-3zM202 219h1v1h-1zM2 220h1v1h-1zM9 220h1v1h-1zM14 220h2v1h-2zM23 220h1v1h-1zM43 220h1v1h-1zM45 220h1v1h-1zM104 220h1v1h-1zM201 220h1v1h-1zM4 221h1v1h-1zM11 221h1v1h-1zM27 221h1v1h-1zM31 221h1v1h-1zM34 221h1v1h-1zM51 221h1v1h-1zM55 221h1v1h-1zM96 221h1v1h-1zM102 221h1v1h-1zM104 221h1v1h-1zM174 221h1v1h-1zM3 222h1v1h-1zM13 222h1v1h-1zM25 222h1v1h-1zM41 222h1v1h-1zM50 222h1v1h-1zM54 222h1v1h-1zM59 222h2v1h-2zM205 222h1v1h-1zM23 223h1v1h-1zM34 223h1v1h-1zM45 223h1v1h-1zM48 223h1v1h-1zM105 223h1v1h-1zM111 223h1v1h-1zM8 224h1v1h-1zM36 224h1v1h-1zM103 224h1v1h-1zM24 225h1v1h-1zM29 225h1v1h-1zM31 225h1v1h-1zM34 225h1v1h-1zM48 225h1v1h-1zM203 225h1v1h-1zM8 226h1v1h-1zM11 226h1v1h-1zM13 226h1v1h-1zM36 226h1v1h-1zM43 226h1v1h-1zM45 226h1v1h-1zM47 226h1v1h-1zM51 226h1v1h-1zM61 226h1v1h-1zM1 227h1v1h-1zM14 227h1v1h-1zM24 227h1v1h-1zM30 227h1v1h-1zM46 227h1v1h-1zM9 228h1v1h-1zM27 228h1v1h-1zM29 228h1v1h-1zM31 228h1v1h-1zM7 229h1v1h-1zM9 229h1v1h-1zM25 229h1v1h-1zM31 229h1v1h-1zM36 229h1v1h-1zM47 229h1v1h-1zM53 229h1v1h-1zM56 229h1v1h-1zM108 229h1v1h-1zM182 229h1v1h-1zM0 230h1v1h-1zM25 230h1v1h-1zM27 230h1v1h-1zM43 230h1v1h-1zM47 230h1v1h-1zM145 230h1v1h-1zM2 231h1v1h-1zM19 231h1v1h-1zM22 231h2v1h-2zM31 231h1v1h-1zM38 231h1v1h-1zM47 231h1v1h-1zM56 231h1v1h-1zM33 232h1v1h-1zM49 232h1v1h-1zM79 232h1v1h-1zM216 232h1v1h-1zM47 233h1v1h-1zM51 233h1v1h-1zM64 233h1v1h-1zM150 233h1v1h-1zM246 233h1v1h-1zM253 233h2v1h-2zM18 234h1v1h-1zM25 234h1v1h-1zM33 234h1v1h-1zM47 234h1v1h-1zM49 234h1v1h-1zM86 234h1v1h-1zM242 234h1v1h-1zM24 235h1v1h-1zM32 235h1v1h-1zM50 235h1v1h-1zM250 235h1v1h-1zM19 236h1v1h-1zM23 236h1v1h-1zM27 236h1v1h-1zM37 236h1v1h-1zM40 236h1v1h-1zM48 236h1v1h-1zM50 236h3v1h-3zM4 237h1v1h-1zM35 237h1v1h-1zM38 237h2v1h-2zM42 237h1v1h-1zM45 237h1v1h-1zM48 237h3v1h-3zM5 238h1v1h-1zM36 238h1v1h-1zM44 238h1v1h-1zM51 238h1v1h-1zM97 238h1v1h-1zM27 239h1v1h-1zM32 239h1v1h-1zM40 239h1v1h-1zM49 239h1v1h-1zM51 239h2v1h-2zM56 239h1v1h-1zM65 239h1v1h-1zM70 239h1v1h-1zM2 240h1v1h-1zM27 240h1v1h-1zM37 240h1v1h-1zM48 240h1v1h-1zM51 240h1v1h-1zM61 240h1v1h-1zM4 241h1v1h-1zM13 241h1v1h-1zM16 241h1v1h-1zM36 241h1v1h-1zM46 241h1v1h-1zM50 241h1v1h-1zM59 241h1v1h-1zM91 241h1v1h-1zM138 241h1v1h-1zM26 242h1v1h-1zM29 242h1v1h-1zM52 242h1v1h-1zM58 242h1v1h-1zM243 242h1v1h-1zM249 242h1v1h-1zM12 243h1v1h-1zM14 243h1v1h-1zM18 243h1v1h-1zM40 243h1v1h-1zM44 243h1v1h-1zM57 243h1v1h-1zM6 244h3v1h-3zM22 244h2v1h-2zM48 244h1v1h-1zM50 244h1v1h-1zM58 244h1v1h-1zM63 244h1v1h-1zM9 245h1v1h-1zM14 245h1v1h-1zM21 245h1v1h-1zM23 245h1v1h-1zM30 245h1v1h-1zM78 245h1v1h-1zM82 245h1v1h-1zM93 245h1v1h-1zM185 245h1v1h-1zM209 245h1v1h-1zM1 246h1v1h-1zM50 246h1v1h-1zM54 246h1v1h-1zM59 246h2v1h-2zM62 246h1v1h-1zM85 246h1v1h-1zM6 247h1v1h-1zM11 247h2v1h-2zM15 247h2v1h-2zM19 247h1v1h-1zM44 247h1v1h-1zM51 247h1v1h-1zM59 247h1v1h-1zM8 248h1v1h-1zM12 248h1v1h-1zM43 248h1v1h-1zM47 248h1v1h-1zM50 248h1v1h-1zM54 248h1v1h-1zM5 249h1v1h-1zM7 249h1v1h-1zM19 249h1v1h-1zM42 249h1v1h-1zM56 249h1v1h-1zM86 249h1v1h-1zM130 249h1v1h-1zM7 250h1v1h-1zM16 250h1v1h-1zM43 250h1v1h-1zM46 250h1v1h-1zM67 250h1v1h-1zM1 251h1v1h-1zM21 251h1v1h-1zM58 251h1v1h-1zM68 251h1v1h-1zM164 251h1v1h-1zM5 252h2v1h-2zM9 252h1v1h-1zM38 252h1v1h-1zM178 252h1v1h-1zM219 252h1v1h-1zM6 253h1v1h-1zM14 253h1v1h-1zM16 253h1v1h-1zM31 253h1v1h-1zM38 253h1v1h-1zM51 253h1v1h-1zM177 253h1v1h-1zM5 254h1v1h-1zM33 254h3v1h-3zM21 255h1v1h-1zM57 255h1v1h-1zM62 255h1v1h-1zM228 255h1v1h-1z"/><path fill="#00ff33" d="M107 53h1v1h-1zM76 54h1v1h-1zM70 56h1v1h-1zM12 57h1v1h-1zM79 62h1v1h-1zM199 76h1v1h-1zM9 78h4v1h-4zM9 79h1v1h-1zM11 79h2v1h-2zM203 83h1v1h-1zM130 88h1v1h-1zM178 89h1v1h-1zM74 93h1v1h-1zM196 94h1v1h-1zM131 95h1v1h-1zM242 98h1v1h-1zM73 101h1v1h-1zM236 101h1v1h-1zM232 106h1v1h-1zM74 108h1v1h-1zM254 108h1v1h-1zM232 111h1v1h-1zM129 117h1v1h-1zM243 119h1v1h-1zM171 120h1v1h-1zM244 121h1v1h-1zM129 122h1v1h-1zM174 122h1v1h-1zM232 126h1v1h-1zM145 127h1v1h-1zM210 128h1v1h-1zM212 129h1v1h-1zM208 130h1v1h-1zM245 130h1v1h-1zM207 133h1v1h-1zM125 146h1v1h-1zM236 155h1v1h-1zM223 162h1v1h-1zM81 163h1v1h-1zM23 169h1v1h-1zM105 173h1v1h-1zM221 173h1v1h-1zM8 174h1v1h-1zM212 177h1v1h-1zM0 184h2v1h-2zM5 184h1v1h-1zM7 184h2v1h-2zM0 185h1v1h-1zM3 185h3v1h-3zM7 185h1v1h-1zM4 186h1v1h-1zM7 186h2v1h-2zM0 187h2v1h-2zM5 187h2v1h-2zM8 187h1v1h-1zM0 188h1v1h-1zM5 188h2v1h-2zM8 188h1v1h-1zM126 188h1v1h-1zM3 189h1v1h-1zM127 189h1v1h-1zM1 190h2v1h-2zM4 190h2v1h-2zM7 190h1v1h-1zM9 190h1v1h-1zM24 190h1v1h-1zM3 191h1v1h-1zM12 193h1v1h-1zM94 194h1v1h-1zM24 199h1v1h-1zM9 200h1v1h-1zM11 200h1v1h-1zM10 202h1v1h-1zM39 202h1v1h-1zM46 202h1v1h-1zM10 203h1v1h-1zM11 204h1v1h-1zM9 205h1v1h-1zM11 205h1v1h-1zM28 207h1v1h-1zM40 208h1v1h-1zM42 209h2v1h-2zM44 210h1v1h-1zM97 210h1v1h-1zM40 211h4v1h-4zM40 212h1v1h-1zM27 213h1v1h-1zM41 213h1v1h-1zM44 213h1v1h-1zM45 214h1v1h-1zM41 215h2v1h-2zM44 215h2v1h-2zM12 217h1v1h-1zM98 218h1v1h-1zM35 220h1v1h-1zM110 220h1v1h-1zM83 221h1v1h-1zM101 221h1v1h-1zM4 224h1v1h-1zM16 224h2v1h-2zM19 224h1v1h-1zM22 224h2v1h-2zM16 225h1v1h-1zM19 225h1v1h-1zM21 225h3v1h-3zM17 226h3v1h-3zM21 226h2v1h-2zM73 226h1v1h-1zM20 227h1v1h-1zM22 227h1v1h-1zM16 228h2v1h-2zM19 228h1v1h-1zM16 229h1v1h-1zM18 229h1v1h-1zM21 229h1v1h-1zM30 229h1v1h-1zM17 230h1v1h-1zM245 231h1v1h-1zM40 234h1v1h-1zM28 236h1v1h-1zM240 236h1v1h-1zM60 241h1v1h-1zM7 243h1v1h-1zM11 245h1v1h-1zM117 245h1v1h-1zM52 255h1v1h-1z"/><path fill="#00ff66" d="M109 25h1v1h-1zM67 57h1v1h-1zM204 65h1v1h-1zM132 73h1v1h-1zM223 74h1v1h-1zM144 80h1v1h-1zM135 83h1v1h-1zM133 89h1v1h-1zM141 90h1v1h-1zM125 92h1v1h-1zM153 92h1v1h-1zM190 92h1v1h-1zM188 93h1v1h-1zM247 102h1v1h-1zM76 103h1v1h-1zM29 110h1v1h-1zM125 110h1v1h-1zM174 110h1v1h-1zM143 113h1v1h-1zM152 114h1v1h-1zM229 114h1v1h-1zM227 115h1v1h-1zM126 116h1v1h-1zM245 120h1v1h-1zM149 121h1v1h-1zM250 121h1v1h-1zM29 122h1v1h-1zM244 126h1v1h-1zM207 128h1v1h-1zM207 129h1v1h-1zM207 131h1v1h-1zM212 131h1v1h-1zM232 133h1v1h-1zM225 134h1v1h-1zM228 144h1v1h-1zM237 146h1v1h-1zM86 156h1v1h-1zM22 161h1v1h-1zM215 169h1v1h-1zM254 171h1v1h-1zM255 172h1v1h-1zM254 173h2v1h-2zM37 174h1v1h-1zM112 174h1v1h-1zM254 174h2v1h-2zM254 175h2v1h-2zM2 184h3v1h-3zM6 184h1v1h-1zM1 185h2v1h-2zM6 185h1v1h-1zM8 185h1v1h-1zM0 186h4v1h-4zM5 186h2v1h-2zM2 187h3v1h-3zM7 187h1v1h-1zM1 188h4v1h-4zM7 188h1v1h-1zM0 189h3v1h-3zM4 189h5v1h-5zM0 190h1v1h-1zM3 190h1v1h-1zM6 190h1v1h-1zM8 190h1v1h-1zM244 190h1v1h-1zM0 191h3v1h-3zM4 191h5v1h-5zM43 196h1v1h-1zM118 197h1v1h-1zM8 200h1v1h-1zM10 200h1v1h-1zM8 201h4v1h-4zM8 202h2v1h-2zM11 202h1v1h-1zM54 202h1v1h-1zM8 203h2v1h-2zM11 203h1v1h-1zM49 203h1v1h-1zM55 203h1v1h-1zM8 204h3v1h-3zM8 205h1v1h-1zM10 205h1v1h-1zM56 206h1v1h-1zM13 207h1v1h-1zM41 208h5v1h-5zM40 209h2v1h-2zM44 209h2v1h-2zM40 210h4v1h-4zM45 210h1v1h-1zM29 211h1v1h-1zM44 211h2v1h-2zM41 212h5v1h-5zM24 213h1v1h-1zM40 213h1v1h-1zM42 213h2v1h-2zM45 213h1v1h-1zM40 214h5v1h-5zM40 215h1v1h-1zM43 215h1v1h-1zM1 217h1v1h-1zM3 219h1v1h-1zM4 222h1v1h-1zM18 224h1v1h-1zM20 224h2v1h-2zM17 225h2v1h-2zM20 225h1v1h-1zM16 226h1v1h-1zM20 226h1v1h-1zM23 226h1v1h-1zM13 227h1v1h-1zM16 227h4v1h-4zM21 227h1v1h-1zM23 227h1v1h-1zM18 228h1v1h-1zM20 228h4v1h-4zM57 228h1v1h-1zM59 228h2v1h-2zM62 228h2v1h-2zM17 229h1v1h-1zM19 229h2v1h-2zM22 229h2v1h-2zM60 229h4v1h-4zM57 230h2v1h-2zM60 230h1v1h-1zM8 231h9v1h-9zM57 231h1v1h-1zM59 231h4v1h-4zM8 232h9v1h-9zM57 232h2v1h-2zM60 232h2v1h-2zM63 232h1v1h-1zM124 232h1v1h-1zM8 233h9v1h-9zM57 233h2v1h-2zM60 233h1v1h-1zM62 233h2v1h-2zM8 234h9v1h-9zM58 234h3v1h-3zM62 234h2v1h-2zM83 234h1v1h-1zM8 235h9v1h-9zM59 235h3v1h-3zM63 235h1v1h-1zM8 236h9v1h-9zM57 236h4v1h-4zM62 236h1v1h-1zM247 236h1v1h-1zM8 237h9v1h-9zM59 237h2v1h-2zM2 238h1v1h-1zM8 238h9v1h-9zM57 238h5v1h-5zM63 238h1v1h-1zM8 239h9v1h-9zM57 239h2v1h-2zM60 239h1v1h-1zM62 239h2v1h-2zM44 240h1v1h-1zM38 242h1v1h-1zM20 245h1v1h-1zM32 245h1v1h-1zM55 246h1v1h-1zM31 247h1v1h-1zM20 248h1v1h-1zM49 248h1v1h-1zM13 249h2v1h-2zM21 250h1v1h-1zM5 251h1v1h-1zM37 255h1v1h-1z"/><path fill="#00ccff" d="M18 0h3v1h-3zM18 1h2v1h-2zM22 1h1v1h-1zM110 22h1v1h-1zM112 24h1v1h-1zM109 27h1v1h-1zM25 28h1v1h-1zM77 52h1v1h-1zM67 54h1v1h-1zM13 56h1v1h-1zM129 62h1v1h-1zM70 64h1v1h-1zM221 66h1v1h-1zM214 70h1v1h-1zM243 75h1v1h-1zM223 77h1v1h-1zM247 77h1v1h-1zM143 79h1v1h-1zM251 79h1v1h-1zM142 80h1v1h-1zM141 87h1v1h-1zM141 89h1v1h-1zM117 90h1v1h-1zM128 91h1v1h-1zM142 92h1v1h-1zM136 94h1v1h-1zM234 98h1v1h-1zM243 98h1v1h-1zM247 99h1v1h-1zM10 100h1v1h-1zM249 100h1v1h-1zM74 101h1v1h-1zM73 103h1v1h-1zM234 103h1v1h-1zM246 103h1v1h-1zM240 104h1v1h-1zM70 105h1v1h-1zM234 105h1v1h-1zM32 106h1v1h-1zM226 106h1v1h-1zM241 109h1v1h-1zM250 109h1v1h-1zM239 110h1v1h-1zM254 110h1v1h-1zM122 111h1v1h-1zM136 112h1v1h-1zM19 116h1v1h-1zM241 116h1v1h-1zM243 116h1v1h-1zM140 117h1v1h-1zM145 118h1v1h-1zM175 118h1v1h-1zM29 120h1v1h-1zM136 120h1v1h-1zM232 120h1v1h-1zM128 121h1v1h-1zM241 122h1v1h-1zM31 123h1v1h-1zM231 123h1v1h-1zM133 125h1v1h-1zM144 125h1v1h-1zM157 125h1v1h-1zM147 126h1v1h-1zM230 126h1v1h-1zM159 127h1v1h-1zM235 130h1v1h-1zM145 131h1v1h-1zM237 133h1v1h-1zM243 135h1v1h-1zM235 136h1v1h-1zM238 136h1v1h-1zM243 136h1v1h-1zM236 143h1v1h-1zM102 149h1v1h-1zM103 150h1v1h-1zM91 151h1v1h-1zM204 151h1v1h-1zM206 151h2v1h-2zM79 152h1v1h-1zM204 152h2v1h-2zM208 152h1v1h-1zM204 153h1v1h-1zM208 153h1v1h-1zM78 154h1v1h-1zM204 154h1v1h-1zM206 154h3v1h-3zM230 154h1v1h-1zM234 154h1v1h-1zM205 155h3v1h-3zM233 155h1v1h-1zM205 156h3v1h-3zM24 157h1v1h-1zM204 157h4v1h-4zM67 163h1v1h-1zM231 164h1v1h-1zM237 164h1v1h-1zM22 166h1v1h-1zM25 166h1v1h-1zM110 166h1v1h-1zM238 168h1v1h-1zM100 173h1v1h-1zM69 174h1v1h-1zM71 174h1v1h-1zM109 177h1v1h-1zM179 178h1v1h-1zM151 182h1v1h-1zM92 183h1v1h-1zM128 184h1v1h-1zM64 185h1v1h-1zM244 186h1v1h-1zM247 186h1v1h-1zM64 188h1v1h-1zM166 190h1v1h-1zM52 193h1v1h-1zM55 194h1v1h-1zM111 194h1v1h-1zM247 194h1v1h-1zM0 195h1v1h-1zM6 195h1v1h-1zM128 197h1v1h-1zM113 198h1v1h-1zM9 199h1v1h-1zM48 199h1v1h-1zM43 200h1v1h-1zM39 203h1v1h-1zM63 203h1v1h-1zM75 204h1v1h-1zM14 205h1v1h-1zM45 205h1v1h-1zM248 206h1v1h-1zM5 208h1v1h-1zM55 208h1v1h-1zM206 208h1v1h-1zM104 209h1v1h-1zM25 210h1v1h-1zM11 211h1v1h-1zM100 212h4v1h-4zM168 212h1v1h-1zM100 213h4v1h-4zM48 214h1v1h-1zM100 214h4v1h-4zM28 215h1v1h-1zM100 215h4v1h-4zM109 215h2v1h-2zM112 217h1v1h-1zM28 218h1v1h-1zM16 219h1v1h-1zM95 220h1v1h-1zM3 221h1v1h-1zM9 221h1v1h-1zM142 222h1v1h-1zM32 225h1v1h-1zM35 228h1v1h-1zM44 229h1v1h-1zM93 229h1v1h-1zM20 231h1v1h-1zM33 231h1v1h-1zM22 232h1v1h-1zM40 232h1v1h-1zM42 232h1v1h-1zM6 233h1v1h-1zM42 233h1v1h-1zM52 233h1v1h-1zM37 234h1v1h-1zM217 237h1v1h-1zM18 238h1v1h-1zM41 241h1v1h-1zM58 243h1v1h-1zM14 244h1v1h-1zM91 247h1v1h-1zM128 248h1v1h-1zM6 249h1v1h-1zM17 251h1v1h-1zM21 252h1v1h-1zM19 253h1v1h-1zM56 254h1v1h-1zM15 255h1v1h-1z"/><path fill="#99ff00" d="M4 50h1v1h-1zM200 56h1v1h-1zM187 71h1v1h-1zM202 72h1v1h-1zM222 81h1v1h-1zM137 83h1v1h-1zM128 89h1v1h-1zM225 103h1v1h-1zM231 106h1v1h-1zM72 109h1v1h-1zM245 116h1v1h-1zM141 117h1v1h-1zM151 118h1v1h-1zM25 121h1v1h-1zM26 127h1v1h-1zM128 127h1v1h-1zM136 133h1v1h-1zM159 133h1v1h-1zM224 134h1v1h-1zM245 143h1v1h-1zM233 144h1v1h-1zM202 159h1v1h-1zM24 160h1v1h-1zM224 176h1v1h-1zM59 183h1v1h-1zM57 197h1v1h-1zM20 204h1v1h-1zM35 205h1v1h-1zM42 205h1v1h-1zM101 211h1v1h-1zM0 213h1v1h-1zM16 217h1v1h-1zM42 219h1v1h-1zM8 220h1v1h-1zM39 223h1v1h-1zM62 224h1v1h-1zM252 233h1v1h-1zM79 237h1v1h-1zM115 239h1v1h-1zM56 242h1v1h-1zM15 246h1v1h-1zM4 248h1v1h-1zM56 251h1v1h-1zM72 252h1v1h-1z"/><path fill="#0099ff" d="M19 8h1v1h-1zM85 16h1v1h-1zM106 18h1v1h-1zM109 21h1v1h-1zM107 23h1v1h-1zM105 31h1v1h-1zM65 55h1v1h-1zM12 56h1v1h-1zM9 57h1v1h-1zM6 59h1v1h-1zM10 59h1v1h-1zM109 60h2v1h-2zM109 61h2v1h-2zM214 62h1v1h-1zM110 63h1v1h-1zM109 64h2v1h-2zM218 69h1v1h-1zM226 71h1v1h-1zM134 72h1v1h-1zM227 72h1v1h-1zM129 73h1v1h-1zM128 74h1v1h-1zM135 74h1v1h-1zM139 76h1v1h-1zM183 76h1v1h-1zM134 77h1v1h-1zM218 77h1v1h-1zM139 78h2v1h-2zM162 78h1v1h-1zM218 79h1v1h-1zM136 80h1v1h-1zM196 80h1v1h-1zM202 80h1v1h-1zM219 80h1v1h-1zM196 82h1v1h-1zM136 83h1v1h-1zM135 89h1v1h-1zM173 89h1v1h-1zM242 90h1v1h-1zM132 91h1v1h-1zM252 95h1v1h-1zM112 96h4v1h-4zM65 97h1v1h-1zM112 97h3v1h-3zM86 98h1v1h-1zM112 98h4v1h-4zM113 99h3v1h-3zM112 100h4v1h-4zM112 101h4v1h-4zM47 102h1v1h-1zM112 102h3v1h-3zM75 103h1v1h-1zM112 103h4v1h-4zM228 103h1v1h-1zM242 104h1v1h-1zM254 104h2v1h-2zM76 105h1v1h-1zM53 110h1v1h-1zM232 113h1v1h-1zM28 115h1v1h-1zM242 115h1v1h-1zM249 115h1v1h-1zM251 115h1v1h-1zM127 116h1v1h-1zM149 116h1v1h-1zM139 117h1v1h-1zM20 118h2v1h-2zM23 118h2v1h-2zM237 118h1v1h-1zM229 119h1v1h-1zM80 120h16v1h-16zM80 121h16v1h-16zM246 121h1v1h-1zM253 121h1v1h-1zM80 122h16v1h-16zM226 122h1v1h-1zM80 123h16v1h-16zM80 124h16v1h-16zM21 125h1v1h-1zM80 125h16v1h-16zM80 126h16v1h-16zM235 126h1v1h-1zM80 127h16v1h-16zM80 128h16v1h-16zM239 132h1v1h-1zM231 135h1v1h-1zM250 137h1v1h-1zM252 137h1v1h-1zM250 141h1v1h-1zM114 142h1v1h-1zM175 143h1v1h-1zM226 145h1v1h-1zM94 150h1v1h-1zM205 151h1v1h-1zM208 151h1v1h-1zM206 152h2v1h-2zM205 153h3v1h-3zM205 154h1v1h-1zM204 155h1v1h-1zM208 155h1v1h-1zM204 156h1v1h-1zM208 156h1v1h-1zM208 157h1v1h-1zM9 162h1v1h-1zM12 163h1v1h-1zM22 163h1v1h-1zM7 164h1v1h-1zM123 165h1v1h-1zM49 166h1v1h-1zM14 169h1v1h-1zM32 169h1v1h-1zM35 170h1v1h-1zM234 170h1v1h-1zM16 171h1v1h-1zM24 173h1v1h-1zM10 175h1v1h-1zM118 176h1v1h-1zM43 185h1v1h-1zM226 186h1v1h-1zM50 187h1v1h-1zM221 187h1v1h-1zM52 189h1v1h-1zM144 189h1v1h-1zM15 192h1v1h-1zM11 195h2v1h-2zM34 196h1v1h-1zM48 196h1v1h-1zM40 197h1v1h-1zM44 197h1v1h-1zM7 198h1v1h-1zM42 199h1v1h-1zM53 199h1v1h-1zM4 200h1v1h-1zM7 200h1v1h-1zM47 200h1v1h-1zM33 202h1v1h-1zM56 202h1v1h-1zM65 205h1v1h-1zM50 206h1v1h-1zM50 208h1v1h-1zM61 209h1v1h-1zM55 211h1v1h-1zM63 213h1v1h-1zM203 213h1v1h-1zM14 214h2v1h-2zM14 215h1v1h-1zM17 215h1v1h-1zM62 216h1v1h-1zM59 218h1v1h-1zM99 218h1v1h-1zM1 220h1v1h-1zM29 222h1v1h-1zM18 223h1v1h-1zM27 227h1v1h-1zM53 227h1v1h-1zM28 228h1v1h-1zM40 231h1v1h-1zM0 235h1v1h-1zM36 239h1v1h-1zM41 240h1v1h-1zM69 240h2v1h-2zM53 241h1v1h-1zM71 241h2v1h-2zM69 242h1v1h-1zM71 242h1v1h-1zM41 243h1v1h-1zM24 244h1v1h-1zM30 247h1v1h-1zM36 247h1v1h-1zM84 247h1v1h-1zM4 250h1v1h-1zM84 251h1v1h-1zM35 253h1v1h-1zM37 253h1v1h-1z"/><path fill="#ff6600" d="M225 22h1v1h-1zM237 41h1v1h-1zM229 54h1v1h-1zM70 55h1v1h-1zM125 76h1v1h-1zM95 79h1v1h-1zM246 100h1v1h-1zM244 105h1v1h-1zM241 112h1v1h-1zM66 113h1v1h-1zM251 117h1v1h-1zM142 118h1v1h-1zM143 119h1v1h-1zM130 120h1v1h-1zM237 127h1v1h-1zM233 130h1v1h-1zM236 135h1v1h-1zM119 159h1v1h-1zM60 166h1v1h-1zM142 185h1v1h-1zM255 193h1v1h-1zM28 208h1v1h-1zM4 210h1v1h-1zM2 217h1v1h-1zM12 219h1v1h-1zM21 221h1v1h-1zM22 222h1v1h-1zM42 222h1v1h-1zM17 238h1v1h-1zM28 240h1v1h-1zM0 241h1v1h-1zM62 242h1v1h-1zM38 244h1v1h-1zM21 246h1v1h-1zM91 250h1v1h-1z"/><path fill="#00ffcc" d="M70 57h1v1h-1zM77 64h1v1h-1zM123 70h1v1h-1zM173 75h1v1h-1zM143 76h1v1h-1zM141 77h1v1h-1zM142 79h1v1h-1zM160 79h2v1h-2zM163 79h3v1h-3zM160 80h1v1h-1zM161 81h1v1h-1zM165 81h1v1h-1zM140 82h1v1h-1zM142 82h1v1h-1zM143 83h1v1h-1zM170 84h3v1h-3zM174 84h2v1h-2zM142 85h1v1h-1zM174 85h1v1h-1zM171 86h1v1h-1zM174 86h3v1h-3zM173 87h1v1h-1zM185 88h3v1h-3zM185 89h3v1h-3zM143 90h2v1h-2zM186 90h2v1h-2zM23 99h1v1h-1zM251 103h1v1h-1zM236 108h1v1h-1zM125 109h1v1h-1zM65 110h1v1h-1zM70 110h1v1h-1zM237 111h1v1h-1zM27 112h1v1h-1zM229 112h1v1h-1zM138 115h1v1h-1zM133 120h1v1h-1zM133 124h1v1h-1zM148 124h1v1h-1zM154 124h1v1h-1zM253 124h1v1h-1zM81 130h2v1h-2zM68 132h2v1h-2zM208 132h1v1h-1zM251 132h1v1h-1zM67 133h3v1h-3zM248 136h1v1h-1zM109 139h1v1h-1zM253 139h1v1h-1zM90 140h3v1h-3zM92 141h1v1h-1zM91 142h1v1h-1zM229 143h1v1h-1zM101 148h1v1h-1zM125 159h1v1h-1zM230 160h1v1h-1zM31 161h1v1h-1zM83 164h1v1h-1zM199 169h1v1h-1zM200 170h2v1h-2zM236 171h1v1h-1zM211 172h1v1h-1zM210 173h1v1h-1zM213 173h1v1h-1zM121 174h1v1h-1zM103 177h1v1h-1zM110 177h1v1h-1zM102 178h1v1h-1zM103 179h1v1h-1zM144 181h1v1h-1zM249 181h1v1h-1zM246 188h1v1h-1zM244 195h1v1h-1zM83 196h1v1h-1zM6 198h1v1h-1zM1 200h1v1h-1zM59 202h1v1h-1zM19 212h1v1h-1zM22 214h1v1h-1zM15 216h1v1h-1zM198 218h1v1h-1zM18 221h1v1h-1zM40 222h1v1h-1zM25 223h1v1h-1zM159 227h1v1h-1zM39 230h1v1h-1zM27 231h1v1h-1zM88 231h1v1h-1zM35 232h1v1h-1zM82 233h1v1h-1zM56 240h1v1h-1zM16 243h1v1h-1zM60 247h1v1h-1zM23 248h8v1h-8zM23 249h8v1h-8zM23 250h8v1h-8zM23 251h8v1h-8zM23 252h8v1h-8zM23 253h8v1h-8zM23 254h8v1h-8zM23 255h8v1h-8z"/><path fill="#0000ff" d="M130 0h1v1h-1zM17 3h1v1h-1zM110 24h1v1h-1zM108 26h1v1h-1zM110 26h1v1h-1zM29 27h1v1h-1zM110 27h1v1h-1zM107 28h1v1h-1zM27 30h1v1h-1zM108 33h1v1h-1zM15 48h1v1h-1zM67 49h1v1h-1zM70 49h1v1h-1zM65 50h1v1h-1zM73 50h1v1h-1zM65 51h1v1h-1zM68 51h1v1h-1zM79 51h1v1h-1zM68 52h1v1h-1zM185 52h1v1h-1zM14 53h1v1h-1zM71 53h2v1h-2zM74 53h1v1h-1zM79 53h1v1h-1zM7 54h1v1h-1zM65 54h1v1h-1zM70 54h1v1h-1zM77 54h1v1h-1zM69 55h1v1h-1zM75 55h1v1h-1zM7 56h1v1h-1zM9 56h1v1h-1zM79 56h2v1h-2zM38 57h1v1h-1zM71 57h1v1h-1zM75 57h1v1h-1zM72 58h1v1h-1zM74 58h1v1h-1zM78 58h2v1h-2zM67 59h1v1h-1zM72 59h1v1h-1zM106 59h1v1h-1zM9 60h1v1h-1zM36 60h1v1h-1zM68 60h1v1h-1zM14 61h1v1h-1zM70 61h2v1h-2zM76 61h1v1h-1zM70 62h1v1h-1zM139 62h1v1h-1zM71 63h1v1h-1zM79 63h1v1h-1zM76 64h1v1h-1zM118 66h1v1h-1zM126 66h1v1h-1zM133 67h1v1h-1zM140 68h1v1h-1zM214 68h1v1h-1zM216 68h1v1h-1zM219 68h1v1h-1zM44 70h1v1h-1zM134 70h1v1h-1zM190 70h1v1h-1zM202 70h1v1h-1zM206 71h1v1h-1zM174 72h1v1h-1zM224 72h1v1h-1zM140 73h1v1h-1zM35 74h1v1h-1zM164 74h1v1h-1zM232 75h1v1h-1zM120 76h1v1h-1zM200 76h1v1h-1zM115 77h1v1h-1zM119 77h1v1h-1zM220 77h1v1h-1zM227 77h1v1h-1zM135 78h1v1h-1zM172 78h1v1h-1zM135 79h1v1h-1zM138 79h1v1h-1zM144 79h1v1h-1zM156 79h1v1h-1zM225 80h1v1h-1zM247 80h1v1h-1zM119 81h1v1h-1zM188 81h1v1h-1zM237 81h1v1h-1zM162 82h1v1h-1zM180 82h1v1h-1zM217 82h1v1h-1zM223 82h1v1h-1zM138 83h1v1h-1zM144 83h1v1h-1zM150 83h1v1h-1zM181 83h1v1h-1zM221 83h1v1h-1zM145 84h1v1h-1zM74 85h1v1h-1zM134 85h1v1h-1zM162 85h1v1h-1zM133 86h1v1h-1zM140 86h1v1h-1zM199 86h1v1h-1zM248 86h1v1h-1zM86 87h1v1h-1zM147 87h1v1h-1zM227 87h1v1h-1zM222 88h1v1h-1zM132 89h1v1h-1zM140 89h1v1h-1zM109 90h1v1h-1zM137 90h1v1h-1zM177 90h1v1h-1zM236 90h1v1h-1zM130 92h1v1h-1zM140 92h1v1h-1zM211 92h1v1h-1zM217 92h1v1h-1zM228 92h1v1h-1zM54 93h1v1h-1zM135 95h1v1h-1zM140 95h1v1h-1zM235 95h1v1h-1zM249 95h2v1h-2zM75 96h1v1h-1zM226 96h1v1h-1zM231 96h1v1h-1zM248 96h1v1h-1zM224 97h1v1h-1zM228 97h1v1h-1zM230 97h1v1h-1zM255 97h1v1h-1zM67 98h2v1h-2zM74 98h1v1h-1zM76 98h1v1h-1zM79 98h1v1h-1zM224 98h1v1h-1zM226 98h2v1h-2zM239 98h1v1h-1zM248 98h1v1h-1zM233 99h2v1h-2zM236 99h1v1h-1zM241 99h1v1h-1zM243 99h1v1h-1zM245 99h1v1h-1zM78 100h1v1h-1zM224 100h3v1h-3zM229 100h1v1h-1zM231 100h1v1h-1zM233 100h2v1h-2zM241 100h1v1h-1zM251 100h1v1h-1zM254 100h1v1h-1zM230 101h4v1h-4zM247 101h1v1h-1zM249 101h1v1h-1zM251 101h1v1h-1zM69 102h1v1h-1zM75 102h1v1h-1zM173 102h1v1h-1zM235 102h1v1h-1zM239 102h2v1h-2zM253 102h1v1h-1zM255 102h1v1h-1zM65 103h2v1h-2zM203 103h1v1h-1zM229 103h1v1h-1zM233 103h1v1h-1zM236 103h2v1h-2zM239 103h1v1h-1zM242 103h1v1h-1zM254 103h1v1h-1zM80 104h1v1h-1zM176 104h1v1h-1zM243 104h1v1h-1zM248 104h1v1h-1zM65 105h1v1h-1zM71 105h1v1h-1zM77 105h1v1h-1zM80 105h1v1h-1zM227 105h1v1h-1zM229 105h1v1h-1zM239 105h1v1h-1zM241 105h1v1h-1zM243 105h1v1h-1zM245 105h1v1h-1zM249 105h1v1h-1zM254 105h1v1h-1zM66 106h1v1h-1zM78 106h1v1h-1zM228 106h1v1h-1zM233 106h1v1h-1zM235 106h2v1h-2zM239 106h1v1h-1zM244 106h1v1h-1zM249 106h1v1h-1zM171 107h1v1h-1zM177 107h1v1h-1zM233 107h3v1h-3zM245 107h2v1h-2zM253 107h2v1h-2zM75 108h1v1h-1zM127 108h1v1h-1zM225 108h1v1h-1zM234 108h1v1h-1zM237 108h1v1h-1zM19 109h1v1h-1zM66 109h1v1h-1zM69 109h2v1h-2zM74 109h1v1h-1zM93 109h1v1h-1zM105 109h1v1h-1zM229 109h2v1h-2zM234 109h1v1h-1zM236 109h1v1h-1zM248 109h1v1h-1zM251 109h1v1h-1zM76 110h2v1h-2zM175 110h1v1h-1zM226 110h1v1h-1zM235 110h2v1h-2zM238 110h1v1h-1zM240 110h1v1h-1zM249 110h1v1h-1zM255 110h1v1h-1zM30 111h1v1h-1zM32 111h1v1h-1zM65 111h1v1h-1zM119 111h1v1h-1zM124 111h1v1h-1zM225 111h1v1h-1zM228 111h1v1h-1zM234 111h1v1h-1zM240 111h1v1h-1zM242 111h1v1h-1zM245 111h1v1h-1zM249 111h1v1h-1zM253 111h1v1h-1zM255 111h1v1h-1zM66 112h1v1h-1zM74 112h1v1h-1zM123 112h1v1h-1zM135 112h1v1h-1zM137 112h1v1h-1zM144 112h1v1h-1zM160 112h1v1h-1zM225 112h1v1h-1zM231 112h1v1h-1zM235 112h2v1h-2zM244 112h1v1h-1zM248 112h1v1h-1zM251 112h1v1h-1zM253 112h1v1h-1zM77 113h1v1h-1zM79 113h1v1h-1zM137 113h1v1h-1zM140 113h1v1h-1zM145 113h2v1h-2zM156 113h1v1h-1zM158 113h2v1h-2zM224 113h1v1h-1zM226 113h2v1h-2zM235 113h1v1h-1zM241 113h1v1h-1zM247 113h1v1h-1zM18 114h1v1h-1zM29 114h1v1h-1zM137 114h1v1h-1zM145 114h3v1h-3zM150 114h1v1h-1zM153 114h1v1h-1zM155 114h1v1h-1zM226 114h1v1h-1zM233 114h1v1h-1zM241 114h1v1h-1zM243 114h2v1h-2zM246 114h1v1h-1zM253 114h1v1h-1zM20 115h1v1h-1zM27 115h1v1h-1zM119 115h1v1h-1zM128 115h1v1h-1zM130 115h1v1h-1zM132 115h2v1h-2zM141 115h1v1h-1zM144 115h1v1h-1zM174 115h1v1h-1zM223 115h4v1h-4zM235 115h1v1h-1zM240 115h2v1h-2zM245 115h1v1h-1zM254 115h1v1h-1zM31 116h1v1h-1zM135 116h1v1h-1zM140 116h1v1h-1zM148 116h1v1h-1zM151 116h1v1h-1zM155 116h1v1h-1zM157 116h1v1h-1zM229 116h1v1h-1zM251 116h2v1h-2zM134 117h1v1h-1zM142 117h1v1h-1zM144 117h1v1h-1zM158 117h1v1h-1zM223 117h1v1h-1zM226 117h1v1h-1zM228 117h1v1h-1zM230 117h2v1h-2zM238 117h1v1h-1zM243 117h2v1h-2zM249 117h1v1h-1zM252 117h1v1h-1zM27 118h1v1h-1zM128 118h1v1h-1zM133 118h1v1h-1zM137 118h2v1h-2zM141 118h1v1h-1zM143 118h2v1h-2zM146 118h1v1h-1zM150 118h1v1h-1zM152 118h1v1h-1zM158 118h1v1h-1zM160 118h1v1h-1zM224 118h1v1h-1zM230 118h2v1h-2zM235 118h1v1h-1zM238 118h1v1h-1zM245 118h1v1h-1zM247 118h1v1h-1zM251 118h1v1h-1zM253 118h1v1h-1zM130 119h1v1h-1zM132 119h1v1h-1zM139 119h1v1h-1zM144 119h1v1h-1zM146 119h1v1h-1zM152 119h1v1h-1zM154 119h1v1h-1zM156 119h2v1h-2zM230 119h2v1h-2zM241 119h1v1h-1zM245 119h1v1h-1zM248 119h1v1h-1zM250 119h1v1h-1zM254 119h2v1h-2zM22 120h1v1h-1zM134 120h1v1h-1zM141 120h1v1h-1zM146 120h2v1h-2zM151 120h2v1h-2zM154 120h1v1h-1zM156 120h1v1h-1zM159 120h2v1h-2zM236 120h1v1h-1zM239 120h4v1h-4zM248 120h1v1h-1zM250 120h1v1h-1zM252 120h3v1h-3zM27 121h1v1h-1zM33 121h1v1h-1zM142 121h1v1h-1zM145 121h1v1h-1zM151 121h1v1h-1zM153 121h1v1h-1zM224 121h1v1h-1zM226 121h1v1h-1zM233 121h1v1h-1zM235 121h1v1h-1zM249 121h1v1h-1zM254 121h1v1h-1zM128 122h1v1h-1zM134 122h1v1h-1zM137 122h1v1h-1zM150 122h1v1h-1zM158 122h2v1h-2zM175 122h1v1h-1zM224 122h1v1h-1zM232 122h2v1h-2zM235 122h1v1h-1zM247 122h1v1h-1zM253 122h1v1h-1zM22 123h1v1h-1zM25 123h1v1h-1zM128 123h1v1h-1zM137 123h1v1h-1zM143 123h1v1h-1zM145 123h2v1h-2zM152 123h1v1h-1zM226 123h1v1h-1zM235 123h1v1h-1zM253 123h1v1h-1zM128 124h1v1h-1zM142 124h2v1h-2zM147 124h1v1h-1zM149 124h1v1h-1zM152 124h1v1h-1zM156 124h1v1h-1zM223 124h1v1h-1zM233 124h1v1h-1zM236 124h1v1h-1zM238 124h1v1h-1zM250 124h1v1h-1zM252 124h1v1h-1zM255 124h1v1h-1zM156 125h1v1h-1zM226 125h1v1h-1zM228 125h1v1h-1zM233 125h1v1h-1zM239 125h1v1h-1zM254 125h1v1h-1zM28 126h1v1h-1zM137 126h1v1h-1zM139 126h1v1h-1zM145 126h1v1h-1zM151 126h2v1h-2zM171 126h1v1h-1zM228 126h1v1h-1zM254 126h1v1h-1zM130 127h2v1h-2zM133 127h1v1h-1zM138 127h1v1h-1zM148 127h1v1h-1zM152 127h2v1h-2zM177 127h1v1h-1zM229 127h1v1h-1zM234 127h1v1h-1zM251 127h1v1h-1zM234 129h1v1h-1zM238 129h1v1h-1zM224 130h1v1h-1zM231 130h1v1h-1zM239 130h1v1h-1zM247 130h1v1h-1zM139 132h1v1h-1zM252 132h1v1h-1zM225 133h1v1h-1zM251 133h1v1h-1zM230 134h1v1h-1zM237 134h2v1h-2zM243 134h1v1h-1zM246 134h1v1h-1zM73 135h1v1h-1zM233 135h1v1h-1zM250 135h1v1h-1zM254 135h1v1h-1zM109 136h1v1h-1zM225 136h1v1h-1zM254 136h1v1h-1zM231 137h1v1h-1zM224 138h1v1h-1zM229 138h1v1h-1zM238 138h1v1h-1zM253 138h1v1h-1zM236 139h1v1h-1zM238 139h1v1h-1zM246 139h1v1h-1zM239 140h1v1h-1zM228 141h1v1h-1zM230 141h1v1h-1zM234 141h1v1h-1zM238 141h1v1h-1zM252 141h1v1h-1zM45 142h1v1h-1zM235 142h2v1h-2zM239 142h2v1h-2zM110 143h1v1h-1zM240 143h1v1h-1zM223 144h1v1h-1zM226 144h1v1h-1zM252 144h1v1h-1zM249 145h1v1h-1zM224 146h1v1h-1zM230 146h1v1h-1zM239 146h1v1h-1zM242 146h1v1h-1zM253 146h1v1h-1zM144 148h1v1h-1zM236 148h1v1h-1zM244 150h1v1h-1zM224 154h1v1h-1zM228 154h1v1h-1zM142 155h1v1h-1zM229 155h1v1h-1zM228 156h1v1h-1zM5 157h1v1h-1zM223 157h1v1h-1zM145 159h1v1h-1zM231 159h1v1h-1zM10 160h1v1h-1zM12 160h1v1h-1zM86 160h1v1h-1zM111 160h1v1h-1zM175 160h1v1h-1zM234 160h1v1h-1zM73 161h1v1h-1zM128 161h1v1h-1zM31 162h1v1h-1zM242 162h1v1h-1zM26 163h2v1h-2zM99 163h1v1h-1zM243 163h1v1h-1zM16 164h1v1h-1zM20 164h1v1h-1zM23 164h1v1h-1zM190 164h1v1h-1zM233 164h1v1h-1zM27 165h1v1h-1zM2 166h1v1h-1zM225 166h1v1h-1zM242 167h1v1h-1zM9 168h1v1h-1zM18 168h1v1h-1zM70 168h1v1h-1zM226 168h1v1h-1zM233 169h1v1h-1zM13 171h1v1h-1zM247 171h1v1h-1zM30 172h1v1h-1zM41 172h1v1h-1zM155 172h1v1h-1zM226 172h1v1h-1zM16 173h1v1h-1zM238 173h1v1h-1zM82 174h1v1h-1zM15 175h1v1h-1zM234 175h2v1h-2zM251 176h1v1h-1zM36 179h1v1h-1zM76 179h1v1h-1zM246 180h1v1h-1zM147 181h1v1h-1zM128 182h1v1h-1zM158 184h1v1h-1zM244 184h1v1h-1zM253 184h1v1h-1zM255 184h1v1h-1zM188 185h1v1h-1zM242 185h1v1h-1zM255 185h1v1h-1zM42 186h1v1h-1zM171 186h1v1h-1zM170 187h1v1h-1zM220 188h1v1h-1zM249 188h1v1h-1zM46 189h1v1h-1zM42 190h1v1h-1zM51 190h1v1h-1zM63 190h1v1h-1zM213 190h1v1h-1zM243 190h1v1h-1zM248 190h1v1h-1zM32 191h1v1h-1zM98 191h1v1h-1zM144 191h1v1h-1zM243 191h1v1h-1zM84 192h1v1h-1zM54 193h1v1h-1zM61 193h1v1h-1zM248 193h1v1h-1zM3 194h1v1h-1zM10 194h1v1h-1zM44 194h1v1h-1zM53 194h1v1h-1zM97 194h1v1h-1zM8 195h1v1h-1zM18 195h1v1h-1zM22 195h1v1h-1zM25 195h1v1h-1zM249 195h1v1h-1zM251 195h1v1h-1zM15 196h1v1h-1zM49 196h1v1h-1zM11 197h1v1h-1zM38 197h1v1h-1zM42 197h1v1h-1zM48 197h1v1h-1zM59 197h1v1h-1zM15 198h1v1h-1zM41 199h1v1h-1zM14 200h1v1h-1zM30 200h1v1h-1zM32 200h1v1h-1zM36 200h1v1h-1zM38 200h1v1h-1zM2 201h1v1h-1zM19 201h1v1h-1zM41 201h1v1h-1zM48 201h1v1h-1zM3 202h1v1h-1zM6 202h1v1h-1zM18 202h1v1h-1zM37 202h1v1h-1zM240 202h1v1h-1zM12 203h1v1h-1zM97 203h1v1h-1zM52 204h1v1h-1zM61 204h1v1h-1zM37 205h1v1h-1zM53 205h1v1h-1zM58 205h1v1h-1zM7 206h1v1h-1zM45 206h1v1h-1zM53 206h1v1h-1zM97 206h1v1h-1zM3 207h1v1h-1zM12 207h1v1h-1zM40 207h1v1h-1zM43 207h1v1h-1zM123 207h1v1h-1zM150 207h1v1h-1zM36 208h1v1h-1zM48 208h1v1h-1zM203 208h1v1h-1zM1 209h1v1h-1zM15 209h1v1h-1zM25 209h1v1h-1zM34 209h1v1h-1zM49 209h1v1h-1zM82 209h1v1h-1zM98 209h1v1h-1zM101 209h1v1h-1zM200 209h1v1h-1zM1 210h1v1h-1zM5 210h1v1h-1zM19 210h1v1h-1zM56 210h1v1h-1zM59 210h1v1h-1zM105 210h1v1h-1zM162 210h1v1h-1zM7 211h1v1h-1zM33 211h1v1h-1zM49 211h1v1h-1zM151 211h1v1h-1zM3 212h1v1h-1zM23 212h1v1h-1zM31 212h1v1h-1zM99 212h1v1h-1zM2 213h1v1h-1zM6 213h1v1h-1zM56 213h1v1h-1zM61 213h1v1h-1zM95 213h1v1h-1zM24 214h1v1h-1zM49 214h1v1h-1zM51 214h1v1h-1zM54 214h1v1h-1zM3 215h1v1h-1zM5 215h1v1h-1zM38 215h1v1h-1zM104 215h1v1h-1zM44 216h1v1h-1zM106 216h1v1h-1zM7 217h1v1h-1zM11 217h1v1h-1zM13 217h1v1h-1zM19 217h1v1h-1zM56 217h1v1h-1zM59 217h1v1h-1zM63 217h1v1h-1zM195 217h1v1h-1zM22 218h2v1h-2zM40 218h1v1h-1zM44 218h1v1h-1zM55 218h2v1h-2zM26 219h1v1h-1zM35 219h1v1h-1zM97 219h1v1h-1zM100 219h1v1h-1zM105 219h1v1h-1zM7 220h1v1h-1zM12 220h1v1h-1zM19 220h1v1h-1zM26 220h1v1h-1zM28 220h3v1h-3zM103 220h1v1h-1zM5 221h1v1h-1zM17 221h1v1h-1zM37 221h1v1h-1zM44 221h1v1h-1zM31 222h1v1h-1zM204 222h1v1h-1zM2 223h1v1h-1zM40 223h1v1h-1zM54 223h2v1h-2zM57 224h1v1h-1zM69 224h1v1h-1zM192 224h1v1h-1zM203 224h1v1h-1zM5 225h1v1h-1zM38 225h1v1h-1zM44 225h1v1h-1zM49 225h1v1h-1zM53 225h1v1h-1zM61 225h1v1h-1zM194 225h1v1h-1zM26 226h1v1h-1zM183 226h1v1h-1zM198 227h1v1h-1zM25 228h1v1h-1zM42 229h1v1h-1zM10 230h1v1h-1zM23 230h1v1h-1zM29 230h1v1h-1zM5 231h1v1h-1zM30 231h1v1h-1zM54 232h1v1h-1zM5 234h1v1h-1zM17 234h1v1h-1zM38 234h1v1h-1zM46 234h1v1h-1zM51 234h1v1h-1zM54 234h1v1h-1zM67 234h1v1h-1zM250 234h2v1h-2zM5 235h1v1h-1zM23 235h1v1h-1zM54 235h1v1h-1zM71 235h1v1h-1zM84 235h1v1h-1zM3 236h1v1h-1zM26 236h1v1h-1zM24 237h4v1h-4zM56 237h1v1h-1zM81 237h1v1h-1zM178 237h1v1h-1zM46 238h1v1h-1zM54 238h1v1h-1zM20 239h1v1h-1zM43 239h1v1h-1zM85 239h1v1h-1zM169 239h1v1h-1zM54 240h1v1h-1zM1 241h1v1h-1zM55 241h1v1h-1zM50 242h1v1h-1zM59 242h1v1h-1zM79 242h1v1h-1zM150 242h1v1h-1zM33 243h1v1h-1zM37 243h1v1h-1zM55 243h1v1h-1zM81 243h1v1h-1zM142 243h1v1h-1zM13 244h1v1h-1zM59 244h1v1h-1zM153 244h1v1h-1zM158 244h1v1h-1zM13 245h1v1h-1zM22 245h1v1h-1zM25 245h1v1h-1zM34 245h2v1h-2zM146 245h1v1h-1zM27 246h1v1h-1zM90 246h1v1h-1zM4 247h1v1h-1zM29 247h1v1h-1zM40 247h1v1h-1zM50 247h1v1h-1zM55 247h1v1h-1zM2 248h1v1h-1zM5 248h1v1h-1zM22 248h1v1h-1zM40 248h1v1h-1zM85 248h1v1h-1zM201 248h1v1h-1zM4 249h1v1h-1zM20 249h1v1h-1zM32 249h1v1h-1zM36 249h1v1h-1zM52 249h1v1h-1zM3 250h1v1h-1zM22 250h1v1h-1zM39 250h1v1h-1zM13 252h1v1h-1zM208 252h1v1h-1zM44 253h1v1h-1zM47 253h1v1h-1zM65 253h1v1h-1zM70 253h1v1h-1zM10 254h1v1h-1zM48 254h1v1h-1zM53 254h1v1h-1zM22 255h1v1h-1z"/><path fill="#ffffff" d="M28 35h1v1h-1zM7 51h1v1h-1zM74 55h1v1h-1zM185 57h1v1h-1zM75 58h1v1h-1zM126 67h1v1h-1zM231 70h1v1h-1zM88 71h1v1h-1zM216 73h1v1h-1zM133 75h1v1h-1zM223 76h1v1h-1zM200 89h1v1h-1zM139 91h1v1h-1zM137 94h1v1h-1zM22 97h1v1h-1zM171 97h1v1h-1zM255 98h1v1h-1zM22 103h1v1h-1zM250 104h1v1h-1zM243 108h1v1h-1zM33 113h1v1h-1zM131 118h1v1h-1zM22 119h1v1h-1zM229 124h1v1h-1zM241 125h1v1h-1zM23 126h1v1h-1zM233 127h1v1h-1zM230 129h1v1h-1zM125 133h1v1h-1zM236 138h1v1h-1zM246 138h1v1h-1zM172 140h1v1h-1zM248 141h1v1h-1zM68 148h1v1h-1zM186 155h1v1h-1zM10 157h1v1h-1zM81 157h1v1h-1zM8 164h1v1h-1zM235 164h1v1h-1zM27 166h1v1h-1zM24 168h1v1h-1zM16 170h1v1h-1zM14 199h1v1h-1zM175 199h1v1h-1zM55 201h1v1h-1zM46 203h1v1h-1zM14 204h1v1h-1zM180 204h1v1h-1zM50 205h1v1h-1zM36 206h1v1h-1zM52 206h1v1h-1zM12 208h1v1h-1zM29 208h1v1h-1zM20 213h1v1h-1zM2 214h1v1h-1zM29 215h1v1h-1zM26 218h1v1h-1zM35 221h1v1h-1zM112 222h1v1h-1zM247 224h1v1h-1zM9 225h1v1h-1zM55 227h1v1h-1zM29 229h1v1h-1zM18 232h1v1h-1zM2 239h1v1h-1zM12 242h1v1h-1zM10 244h1v1h-1zM28 244h1v1h-1zM55 244h1v1h-1zM113 249h1v1h-1zM36 250h1v1h-1zM6 251h1v1h-1zM4 252h1v1h-1zM238 252h1v1h-1zM39 253h1v1h-1zM57 254h1v1h-1zM4 255h1v1h-1z"/><path fill="#ffcc00" d="M68 58h1v1h-1zM12 63h1v1h-1zM137 74h1v1h-1zM75 100h1v1h-1zM252 100h1v1h-1zM136 115h1v1h-1zM225 117h1v1h-1zM232 121h1v1h-1zM242 122h1v1h-1zM138 123h1v1h-1zM227 123h1v1h-1zM241 124h1v1h-1zM153 125h1v1h-1zM227 128h1v1h-1zM228 142h1v1h-1zM23 157h1v1h-1zM97 160h1v1h-1zM241 175h1v1h-1zM225 176h1v1h-1zM29 205h1v1h-1zM5 206h1v1h-1zM59 207h1v1h-1zM2 215h1v1h-1zM52 221h1v1h-1zM62 221h1v1h-1zM43 237h1v1h-1z"/><path fill="#ffff00" d="M16 21h4v1h-4zM16 22h4v1h-4zM16 23h4v1h-4zM16 24h4v1h-4zM185 75h1v1h-1zM141 80h1v1h-1zM251 96h1v1h-1zM242 100h1v1h-1zM243 101h1v1h-1zM177 104h1v1h-1zM242 106h1v1h-1zM129 112h1v1h-1zM245 112h1v1h-1zM155 115h1v1h-1zM147 117h1v1h-1zM70 121h1v1h-1zM227 121h1v1h-1zM230 127h1v1h-1zM231 134h2v1h-2zM235 138h1v1h-1zM96 148h1v1h-1zM173 171h1v1h-1zM230 173h1v1h-1zM196 181h1v1h-1zM148 184h1v1h-1zM42 188h1v1h-1zM23 195h1v1h-1zM5 202h1v1h-1zM37 210h1v1h-1zM42 216h1v1h-1zM37 222h1v1h-1zM5 229h1v1h-1zM36 230h1v1h-1zM35 233h1v1h-1zM19 238h1v1h-1zM43 238h1v1h-1zM6 239h1v1h-1zM2 244h1v1h-1zM62 244h1v1h-1zM9 247h1v1h-1zM31 250h1v1h-1zM196 253h1v1h-1zM9 254h1v1h-1z"/><path fill="#ff3300" d="M11 49h1v1h-1zM8 55h1v1h-1zM78 56h1v1h-1zM132 72h1v1h-1zM129 77h1v1h-1zM183 78h1v1h-1zM174 81h1v1h-1zM251 84h1v1h-1zM204 91h1v1h-1zM247 103h1v1h-1zM176 105h1v1h-1zM74 110h1v1h-1zM251 111h1v1h-1zM254 112h1v1h-1zM159 114h1v1h-1zM249 114h1v1h-1zM30 116h1v1h-1zM172 120h1v1h-1zM237 120h1v1h-1zM234 121h1v1h-1zM230 122h1v1h-1zM29 124h1v1h-1zM31 126h1v1h-1zM237 129h1v1h-1zM226 131h1v1h-1zM226 134h2v1h-2zM237 135h1v1h-1zM252 135h1v1h-1zM223 137h1v1h-1zM240 138h1v1h-1zM158 141h1v1h-1zM237 141h1v1h-1zM245 141h1v1h-1zM243 142h1v1h-1zM225 144h1v1h-1zM102 147h1v1h-1zM126 158h1v1h-1zM226 158h1v1h-1zM228 160h1v1h-1zM9 163h1v1h-1zM13 163h1v1h-1zM46 166h1v1h-1zM54 173h1v1h-1zM252 173h1v1h-1zM113 175h1v1h-1zM233 176h1v1h-1zM89 178h1v1h-1zM105 178h1v1h-1zM243 186h1v1h-1zM211 187h1v1h-1zM247 187h1v1h-1zM171 190h1v1h-1zM229 191h1v1h-1zM14 192h1v1h-1zM250 192h2v1h-2zM14 194h1v1h-1zM3 195h1v1h-1zM157 195h1v1h-1zM49 200h1v1h-1zM251 202h1v1h-1zM35 203h1v1h-1zM103 203h1v1h-1zM249 203h1v1h-1zM252 203h2v1h-2zM249 204h1v1h-1zM251 204h1v1h-1zM10 206h1v1h-1zM50 209h1v1h-1zM46 210h1v1h-1zM38 212h1v1h-1zM47 213h1v1h-1zM99 213h1v1h-1zM11 214h1v1h-1zM9 215h1v1h-1zM8 216h2v1h-2zM186 216h1v1h-1zM15 219h1v1h-1zM27 219h1v1h-1zM56 220h1v1h-1zM105 222h1v1h-1zM95 224h1v1h-1zM4 234h1v1h-1zM152 234h1v1h-1zM43 241h1v1h-1zM8 242h1v1h-1zM63 242h1v1h-1zM42 245h1v1h-1zM14 246h1v1h-1zM40 246h1v1h-1zM61 247h1v1h-1zM38 248h1v1h-1z"/><path fill="#00ff00" d="M109 20h1v1h-1zM236 64h1v1h-1zM137 65h1v1h-1zM122 69h1v1h-1zM175 71h1v1h-1zM165 72h1v1h-1zM219 72h1v1h-1zM193 75h1v1h-1zM134 80h1v1h-1zM140 81h1v1h-1zM160 83h1v1h-1zM204 87h1v1h-1zM138 88h1v1h-1zM247 98h1v1h-1zM252 104h1v1h-1zM67 106h1v1h-1zM75 107h1v1h-1zM119 107h1v1h-1zM21 110h1v1h-1zM141 113h1v1h-1zM153 113h1v1h-1zM255 115h1v1h-1zM20 116h1v1h-1zM244 119h1v1h-1zM149 120h1v1h-1zM224 120h1v1h-1zM139 122h1v1h-1zM30 125h1v1h-1zM242 125h1v1h-1zM251 125h1v1h-1zM129 127h1v1h-1zM124 134h1v1h-1zM214 134h1v1h-1zM222 135h1v1h-1zM248 135h1v1h-1zM226 137h1v1h-1zM150 153h1v1h-1zM99 158h1v1h-1zM67 159h1v1h-1zM143 161h1v1h-1zM232 161h1v1h-1zM153 168h1v1h-1zM155 180h1v1h-1zM13 190h1v1h-1zM34 200h1v1h-1zM60 202h1v1h-1zM63 209h1v1h-1zM22 213h1v1h-1zM36 213h1v1h-1zM34 214h1v1h-1zM53 219h1v1h-1zM36 222h1v1h-1zM207 222h1v1h-1zM49 224h1v1h-1zM60 225h1v1h-1zM63 225h1v1h-1zM208 227h1v1h-1zM3 229h1v1h-1zM35 234h1v1h-1zM25 235h1v1h-1zM52 235h1v1h-1zM47 238h1v1h-1zM18 246h1v1h-1zM24 246h1v1h-1zM43 251h1v1h-1zM58 253h1v1h-1zM35 255h1v1h-1zM45 255h1v1h-1zM150 255h1v1h-1z"/><path fill="#ff0000" d="M101 66h1v1h-1zM102 72h1v1h-1zM137 78h1v1h-1zM138 89h1v1h-1zM133 91h1v1h-1zM246 95h1v1h-1zM228 99h1v1h-1zM244 103h1v1h-1zM236 105h1v1h-1zM172 106h1v1h-1zM240 107h1v1h-1zM236 111h1v1h-1zM149 115h1v1h-1zM143 117h1v1h-1zM147 121h1v1h-1zM239 122h1v1h-1zM135 124h1v1h-1zM227 126h1v1h-1zM241 127h1v1h-1zM235 129h1v1h-1zM246 142h1v1h-1zM9 159h1v1h-1zM28 160h1v1h-1zM225 170h1v1h-1zM160 171h1v1h-1zM87 172h1v1h-1zM31 173h1v1h-1zM197 183h1v1h-1zM8 199h1v1h-1zM249 202h2v1h-2zM252 202h2v1h-2zM250 203h2v1h-2zM250 204h1v1h-1zM252 204h2v1h-2zM31 210h1v1h-1zM17 212h1v1h-1zM128 221h1v1h-1zM170 225h1v1h-1zM50 226h1v1h-1zM22 230h1v1h-1zM3 234h1v1h-1zM18 242h1v1h-1zM8 243h1v1h-1zM75 244h1v1h-1zM58 245h1v1h-1zM57 251h1v1h-1zM42 255h1v1h-1z"/><path fill="#ccff00" d="M67 52h1v1h-1zM224 68h1v1h-1zM225 76h1v1h-1zM134 78h1v1h-1zM144 86h1v1h-1zM139 92h1v1h-1zM254 96h1v1h-1zM237 100h1v1h-1zM84 103h1v1h-1zM76 112h1v1h-1zM245 114h1v1h-1zM31 115h1v1h-1zM145 115h1v1h-1zM243 118h1v1h-1zM147 123h1v1h-1zM242 123h1v1h-1zM223 125h1v1h-1zM4 142h1v1h-1zM227 151h1v1h-1zM237 158h1v1h-1zM131 173h1v1h-1zM18 194h1v1h-1zM127 194h1v1h-1zM32 196h1v1h-1zM61 197h1v1h-1zM46 205h1v1h-1zM162 208h1v1h-1zM56 212h1v1h-1zM86 215h1v1h-1zM21 218h1v1h-1zM57 227h1v1h-1zM19 232h1v1h-1zM131 236h1v1h-1zM250 237h1v1h-1zM236 240h1v1h-1zM25 243h1v1h-1zM36 246h1v1h-1zM5 250h1v1h-1zM5 253h1v1h-1z"/><path fill="#00ff99" d="M26 30h1v1h-1zM8 60h1v1h-1zM145 62h1v1h-1zM74 64h1v1h-1zM141 75h1v1h-1zM142 81h1v1h-1zM142 83h1v1h-1zM142 84h1v1h-1zM218 87h1v1h-1zM119 88h1v1h-1zM142 88h1v1h-1zM142 89h1v1h-1zM233 90h1v1h-1zM142 91h1v1h-1zM189 91h1v1h-1zM188 92h2v1h-2zM189 93h2v1h-2zM235 98h1v1h-1zM172 99h1v1h-1zM65 102h1v1h-1zM250 107h1v1h-1zM253 108h1v1h-1zM67 109h1v1h-1zM245 113h1v1h-1zM123 114h1v1h-1zM24 115h1v1h-1zM131 115h1v1h-1zM24 116h1v1h-1zM131 116h1v1h-1zM145 116h1v1h-1zM234 119h1v1h-1zM144 121h1v1h-1zM23 125h1v1h-1zM212 128h1v1h-1zM209 129h1v1h-1zM212 130h1v1h-1zM211 131h1v1h-1zM209 132h1v1h-1zM211 133h1v1h-1zM250 136h1v1h-1zM90 137h1v1h-1zM243 146h1v1h-1zM231 152h1v1h-1zM149 153h1v1h-1zM237 154h1v1h-1zM243 158h1v1h-1zM251 158h1v1h-1zM235 160h1v1h-1zM221 169h1v1h-1zM255 171h1v1h-1zM214 180h1v1h-1zM247 185h1v1h-1zM38 190h1v1h-1zM247 195h1v1h-1zM58 200h1v1h-1zM55 207h1v1h-1zM9 213h1v1h-1zM33 213h1v1h-1zM25 217h1v1h-1zM31 219h1v1h-1zM40 221h1v1h-1zM53 223h1v1h-1zM58 228h1v1h-1zM61 228h1v1h-1zM57 229h3v1h-3zM35 230h1v1h-1zM59 230h1v1h-1zM61 230h3v1h-3zM58 231h1v1h-1zM63 231h1v1h-1zM59 232h1v1h-1zM62 232h1v1h-1zM252 232h1v1h-1zM59 233h1v1h-1zM61 233h1v1h-1zM57 234h1v1h-1zM61 234h1v1h-1zM57 235h2v1h-2zM62 235h1v1h-1zM61 236h1v1h-1zM63 236h1v1h-1zM46 237h1v1h-1zM57 237h2v1h-2zM61 237h3v1h-3zM62 238h1v1h-1zM59 239h1v1h-1zM61 239h1v1h-1zM185 239h1v1h-1zM30 241h1v1h-1zM34 241h1v1h-1zM4 242h1v1h-1zM60 243h1v1h-1zM44 245h1v1h-1zM44 250h1v1h-1zM14 251h1v1h-1zM31 252h1v1h-1z"/><path fill="#0066ff" d="M7 52h1v1h-1zM112 54h1v1h-1zM7 59h1v1h-1zM74 63h1v1h-1zM131 70h1v1h-1zM226 72h1v1h-1zM185 73h1v1h-1zM121 81h1v1h-1zM144 88h1v1h-1zM215 93h1v1h-1zM244 95h1v1h-1zM143 96h1v1h-1zM71 97h2v1h-2zM115 97h1v1h-1zM243 97h1v1h-1zM112 99h1v1h-1zM70 100h1v1h-1zM232 100h1v1h-1zM115 102h1v1h-1zM66 108h1v1h-1zM245 109h1v1h-1zM177 111h1v1h-1zM248 113h1v1h-1zM249 116h1v1h-1zM114 120h2v1h-2zM114 121h2v1h-2zM134 121h1v1h-1zM239 121h1v1h-1zM114 122h2v1h-2zM114 123h2v1h-2zM235 124h1v1h-1zM141 125h1v1h-1zM246 125h1v1h-1zM250 126h1v1h-1zM135 127h1v1h-1zM146 127h1v1h-1zM243 130h1v1h-1zM248 130h1v1h-1zM231 132h1v1h-1zM239 137h1v1h-1zM87 141h1v1h-1zM75 145h1v1h-1zM65 149h1v1h-1zM102 152h1v1h-1zM128 157h1v1h-1zM17 161h1v1h-1zM36 174h1v1h-1zM242 174h1v1h-1zM71 183h1v1h-1zM159 186h1v1h-1zM221 188h1v1h-1zM142 189h1v1h-1zM29 196h1v1h-1zM44 198h1v1h-1zM24 200h6v1h-6zM24 201h6v1h-6zM24 202h6v1h-6zM24 203h6v1h-6zM24 204h6v1h-6zM20 205h5v1h-5zM12 206h1v1h-1zM20 206h5v1h-5zM41 206h1v1h-1zM20 207h3v1h-3zM32 207h1v1h-1zM54 207h1v1h-1zM20 208h1v1h-1zM22 208h1v1h-1zM20 209h3v1h-3zM24 209h1v1h-1zM39 209h1v1h-1zM16 211h1v1h-1zM12 212h4v1h-4zM57 212h1v1h-1zM12 213h4v1h-4zM31 213h1v1h-1zM9 214h1v1h-1zM12 214h2v1h-2zM12 215h2v1h-2zM15 215h1v1h-1zM30 215h6v1h-6zM107 215h1v1h-1zM30 216h6v1h-6zM41 216h1v1h-1zM30 217h6v1h-6zM30 218h6v1h-6zM46 223h1v1h-1zM206 224h1v1h-1zM6 226h1v1h-1zM6 229h1v1h-1zM10 229h1v1h-1zM37 230h1v1h-1zM23 232h1v1h-1zM25 232h1v1h-1zM18 233h1v1h-1zM23 233h1v1h-1zM49 236h1v1h-1zM51 237h2v1h-2zM48 238h3v1h-3zM52 238h1v1h-1zM48 239h1v1h-1zM50 239h1v1h-1zM49 240h2v1h-2zM52 240h1v1h-1zM57 240h1v1h-1zM107 240h5v1h-5zM69 241h2v1h-2zM107 241h5v1h-5zM70 242h1v1h-1zM107 242h5v1h-5zM29 243h1v1h-1zM107 243h5v1h-5zM17 244h1v1h-1zM54 244h1v1h-1zM56 250h1v1h-1zM8 251h1v1h-1z"/><path fill="#33ff00" d="M23 4h1v1h-1zM79 50h1v1h-1zM9 62h1v1h-1zM57 67h1v1h-1zM141 78h1v1h-1zM125 81h1v1h-1zM139 87h1v1h-1zM77 107h1v1h-1zM80 107h1v1h-1zM126 111h1v1h-1zM148 114h1v1h-1zM137 116h1v1h-1zM165 116h1v1h-1zM229 117h1v1h-1zM157 120h1v1h-1zM148 122h1v1h-1zM243 124h1v1h-1zM254 124h1v1h-1zM238 133h1v1h-1zM123 146h1v1h-1zM138 152h1v1h-1zM209 176h1v1h-1zM248 181h1v1h-1zM46 192h1v1h-1zM114 192h1v1h-1zM12 198h1v1h-1zM106 209h1v1h-1zM60 211h1v1h-1zM27 212h1v1h-1zM52 214h1v1h-1zM99 215h1v1h-1zM203 215h1v1h-1zM110 217h1v1h-1zM57 221h1v1h-1zM8 222h1v1h-1zM43 223h1v1h-1zM25 238h1v1h-1zM25 247h1v1h-1zM54 252h1v1h-1zM58 252h1v1h-1zM33 253h1v1h-1z"/><path fill="#66ff00" d="M240 112h1v1h-1zM25 114h1v1h-1zM229 125h1v1h-1zM255 127h1v1h-1zM250 130h1v1h-1zM244 136h1v1h-1zM30 165h1v1h-1zM50 167h1v1h-1zM20 168h1v1h-1zM242 173h1v1h-1zM69 177h1v1h-1zM13 211h1v1h-1zM138 218h1v1h-1zM21 219h1v1h-1zM19 221h1v1h-1zM129 244h1v1h-1zM65 248h1v1h-1zM215 252h1v1h-1z"/><!--M1e--></svg></div>
<div class="map" style="left:435px" id="m2"><svg width="256" height="256" viewBox="0 0 256 256" shape-rendering="crispEdges" style="display:block"><!--M2s--><path fill="#0033ff" d="M18 0h1v1h-1zM20 0h1v1h-1zM22 0h1v1h-1zM18 1h1v1h-1zM20 1h4v1h-4zM23 4h1v1h-1zM22 5h1v1h-1zM85 16h1v1h-1zM106 18h1v1h-1zM109 20h1v1h-1zM18 21h2v1h-2zM16 22h1v1h-1zM18 22h2v1h-2zM110 22h1v1h-1zM17 23h3v1h-3zM18 24h2v1h-2zM108 24h1v1h-1zM106 25h1v1h-1zM110 26h1v1h-1zM29 27h1v1h-1zM107 28h1v1h-1zM15 48h1v1h-1zM11 49h1v1h-1zM187 49h1v1h-1zM4 50h1v1h-1zM11 50h1v1h-1zM65 50h1v1h-1zM70 50h1v1h-1zM79 50h1v1h-1zM4 52h1v1h-1zM67 52h1v1h-1zM11 53h1v1h-1zM14 53h1v1h-1zM72 53h1v1h-1zM74 53h1v1h-1zM79 53h1v1h-1zM96 53h1v1h-1zM7 54h1v1h-1zM65 54h1v1h-1zM69 54h1v1h-1zM75 54h1v1h-1zM112 54h1v1h-1zM106 55h1v1h-1zM12 56h2v1h-2zM66 56h1v1h-1zM70 56h1v1h-1zM75 56h1v1h-1zM77 56h2v1h-2zM65 57h1v1h-1zM67 57h1v1h-1zM69 57h1v1h-1zM66 58h2v1h-2zM67 59h1v1h-1zM80 59h1v1h-1zM70 60h1v1h-1zM73 60h1v1h-1zM77 60h1v1h-1zM110 60h1v1h-1zM7 61h1v1h-1zM68 61h1v1h-1zM70 61h1v1h-1zM73 61h1v1h-1zM109 61h1v1h-1zM7 62h1v1h-1zM9 62h1v1h-1zM74 62h1v1h-1zM213 62h1v1h-1zM71 63h1v1h-1zM109 64h2v1h-2zM146 64h1v1h-1zM135 65h1v1h-1zM101 66h1v1h-1zM221 66h1v1h-1zM57 67h1v1h-1zM126 67h1v1h-1zM216 67h1v1h-1zM229 67h1v1h-1zM140 68h1v1h-1zM216 68h1v1h-1zM219 68h1v1h-1zM214 69h1v1h-1zM218 69h1v1h-1zM225 69h1v1h-1zM44 70h1v1h-1zM123 70h1v1h-1zM131 70h1v1h-1zM214 70h1v1h-1zM202 72h1v1h-1zM219 72h1v1h-1zM225 72h1v1h-1zM132 73h1v1h-1zM135 73h1v1h-1zM168 73h1v1h-1zM185 73h1v1h-1zM216 73h1v1h-1zM35 74h1v1h-1zM135 74h1v1h-1zM137 74h1v1h-1zM182 74h1v1h-1zM126 75h1v1h-1zM173 75h1v1h-1zM185 75h1v1h-1zM0 76h2v1h-2zM3 76h1v1h-1zM141 76h1v1h-1zM143 76h1v1h-1zM225 76h1v1h-1zM0 77h4v1h-4zM115 77h1v1h-1zM119 77h1v1h-1zM223 77h1v1h-1zM227 77h1v1h-1zM1 78h2v1h-2zM10 78h3v1h-3zM29 78h1v1h-1zM135 78h1v1h-1zM137 78h1v1h-1zM141 78h1v1h-1zM183 78h1v1h-1zM223 78h1v1h-1zM234 78h1v1h-1zM0 79h3v1h-3zM11 79h1v1h-1zM133 79h1v1h-1zM143 79h1v1h-1zM156 79h1v1h-1zM160 79h1v1h-1zM162 79h3v1h-3zM217 79h1v1h-1zM251 79h1v1h-1zM136 80h1v1h-1zM141 80h1v1h-1zM144 80h1v1h-1zM196 80h1v1h-1zM207 80h1v1h-1zM225 80h1v1h-1zM236 80h1v1h-1zM121 81h1v1h-1zM124 81h1v1h-1zM161 81h1v1h-1zM163 81h1v1h-1zM165 81h1v1h-1zM174 81h1v1h-1zM215 81h1v1h-1zM222 81h1v1h-1zM140 82h1v1h-1zM142 82h2v1h-2zM241 82h1v1h-1zM129 83h1v1h-1zM142 83h1v1h-1zM150 83h1v1h-1zM142 84h1v1h-1zM157 84h1v1h-1zM169 84h1v1h-1zM171 84h3v1h-3zM175 84h1v1h-1zM227 84h1v1h-1zM251 84h1v1h-1zM134 85h1v1h-1zM169 85h2v1h-2zM173 85h2v1h-2zM127 86h1v1h-1zM141 86h1v1h-1zM143 86h1v1h-1zM169 86h1v1h-1zM172 86h1v1h-1zM139 87h1v1h-1zM141 87h1v1h-1zM147 87h1v1h-1zM169 87h1v1h-1zM172 87h2v1h-2zM175 87h2v1h-2zM204 87h1v1h-1zM215 87h1v1h-1zM142 88h1v1h-1zM186 88h2v1h-2zM116 89h1v1h-1zM139 89h1v1h-1zM146 89h2v1h-2zM173 89h1v1h-1zM178 89h1v1h-1zM185 89h1v1h-1zM187 89h1v1h-1zM128 90h1v1h-1zM141 90h3v1h-3zM177 90h1v1h-1zM186 90h1v1h-1zM206 90h1v1h-1zM132 91h2v1h-2zM189 91h1v1h-1zM204 91h1v1h-1zM133 92h1v1h-1zM142 92h2v1h-2zM146 92h1v1h-1zM153 92h1v1h-1zM188 92h3v1h-3zM217 92h1v1h-1zM188 93h1v1h-1zM136 94h1v1h-1zM140 95h1v1h-1zM1 96h2v1h-2zM4 96h1v1h-1zM6 96h2v1h-2zM65 96h1v1h-1zM70 96h1v1h-1zM75 96h2v1h-2zM80 96h1v1h-1zM112 96h4v1h-4zM143 96h1v1h-1zM234 96h1v1h-1zM237 96h1v1h-1zM242 96h2v1h-2zM248 96h2v1h-2zM251 96h1v1h-1zM253 96h1v1h-1zM0 97h3v1h-3zM4 97h1v1h-1zM77 97h1v1h-1zM112 97h1v1h-1zM115 97h1v1h-1zM234 97h1v1h-1zM236 97h1v1h-1zM241 97h1v1h-1zM245 97h1v1h-1zM248 97h1v1h-1zM253 97h1v1h-1zM255 97h1v1h-1zM1 98h2v1h-2zM6 98h2v1h-2zM79 98h1v1h-1zM112 98h1v1h-1zM114 98h1v1h-1zM223 98h1v1h-1zM239 98h1v1h-1zM241 98h1v1h-1zM243 98h1v1h-1zM251 98h1v1h-1zM253 98h1v1h-1zM255 98h1v1h-1zM0 99h1v1h-1zM2 99h1v1h-1zM4 99h4v1h-4zM23 99h1v1h-1zM71 99h1v1h-1zM103 99h1v1h-1zM113 99h2v1h-2zM227 99h2v1h-2zM233 99h1v1h-1zM235 99h1v1h-1zM240 99h1v1h-1zM245 99h1v1h-1zM254 99h2v1h-2zM11 100h2v1h-2zM72 100h1v1h-1zM112 100h1v1h-1zM173 100h1v1h-1zM226 100h1v1h-1zM229 100h1v1h-1zM237 100h1v1h-1zM241 100h1v1h-1zM248 100h1v1h-1zM254 100h1v1h-1zM9 101h1v1h-1zM73 101h1v1h-1zM75 101h1v1h-1zM112 101h4v1h-4zM175 101h1v1h-1zM226 101h1v1h-1zM229 101h2v1h-2zM233 101h1v1h-1zM236 101h1v1h-1zM238 101h2v1h-2zM243 101h1v1h-1zM245 101h1v1h-1zM74 102h1v1h-1zM113 102h1v1h-1zM115 102h1v1h-1zM173 102h1v1h-1zM230 102h2v1h-2zM235 102h1v1h-1zM247 102h1v1h-1zM250 102h1v1h-1zM65 103h1v1h-1zM75 103h2v1h-2zM112 103h4v1h-4zM225 103h1v1h-1zM228 103h1v1h-1zM234 103h1v1h-1zM236 103h1v1h-1zM241 103h1v1h-1zM247 103h1v1h-1zM73 104h1v1h-1zM77 104h1v1h-1zM80 104h1v1h-1zM230 104h1v1h-1zM233 104h1v1h-1zM238 104h1v1h-1zM241 104h2v1h-2zM247 104h2v1h-2zM65 105h2v1h-2zM73 105h1v1h-1zM76 105h2v1h-2zM234 105h1v1h-1zM239 105h1v1h-1zM243 105h1v1h-1zM249 105h2v1h-2zM32 106h1v1h-1zM65 106h1v1h-1zM67 106h1v1h-1zM172 106h1v1h-1zM231 106h1v1h-1zM233 106h1v1h-1zM235 106h1v1h-1zM239 106h1v1h-1zM241 106h1v1h-1zM246 106h1v1h-1zM252 106h1v1h-1zM255 106h1v1h-1zM70 107h1v1h-1zM72 107h1v1h-1zM231 107h1v1h-1zM233 107h1v1h-1zM239 107h1v1h-1zM246 107h1v1h-1zM122 108h1v1h-1zM127 108h1v1h-1zM223 108h1v1h-1zM235 108h1v1h-1zM237 108h1v1h-1zM241 108h1v1h-1zM243 108h1v1h-1zM248 108h1v1h-1zM253 108h1v1h-1zM19 109h1v1h-1zM66 109h1v1h-1zM105 109h1v1h-1zM121 109h1v1h-1zM125 109h1v1h-1zM229 109h2v1h-2zM235 109h2v1h-2zM243 109h1v1h-1zM248 109h1v1h-1zM251 109h1v1h-1zM27 110h1v1h-1zM53 110h1v1h-1zM67 110h1v1h-1zM77 110h1v1h-1zM226 110h1v1h-1zM237 110h1v1h-1zM240 110h1v1h-1zM246 110h1v1h-1zM250 110h1v1h-1zM78 111h1v1h-1zM118 111h2v1h-2zM224 111h1v1h-1zM228 111h1v1h-1zM231 111h1v1h-1zM234 111h1v1h-1zM237 111h1v1h-1zM245 111h1v1h-1zM249 111h1v1h-1zM252 111h1v1h-1zM65 112h2v1h-2zM77 112h1v1h-1zM160 112h1v1h-1zM228 112h1v1h-1zM232 112h1v1h-1zM235 112h1v1h-1zM237 112h2v1h-2zM245 112h1v1h-1zM248 112h3v1h-3zM255 112h1v1h-1zM20 113h1v1h-1zM33 113h1v1h-1zM136 113h2v1h-2zM147 113h1v1h-1zM150 113h1v1h-1zM154 113h1v1h-1zM224 113h1v1h-1zM227 113h1v1h-1zM236 113h1v1h-1zM131 114h1v1h-1zM134 114h1v1h-1zM148 114h1v1h-1zM227 114h1v1h-1zM230 114h1v1h-1zM232 114h2v1h-2zM240 114h1v1h-1zM246 114h1v1h-1zM249 114h1v1h-1zM253 114h1v1h-1zM255 114h1v1h-1zM128 115h1v1h-1zM149 115h1v1h-1zM156 115h1v1h-1zM174 115h1v1h-1zM229 115h1v1h-1zM233 115h1v1h-1zM242 115h1v1h-1zM244 115h1v1h-1zM248 115h1v1h-1zM255 115h1v1h-1zM19 116h1v1h-1zM30 116h2v1h-2zM129 116h1v1h-1zM209 116h1v1h-1zM230 116h1v1h-1zM242 116h1v1h-1zM249 116h1v1h-1zM251 116h1v1h-1zM129 117h1v1h-1zM132 117h1v1h-1zM135 117h1v1h-1zM141 117h1v1h-1zM144 117h1v1h-1zM146 117h1v1h-1zM237 117h1v1h-1zM244 117h1v1h-1zM246 117h1v1h-1zM251 117h2v1h-2zM20 118h2v1h-2zM138 118h1v1h-1zM144 118h1v1h-1zM146 118h2v1h-2zM151 118h1v1h-1zM157 118h1v1h-1zM225 118h1v1h-1zM230 118h2v1h-2zM237 118h1v1h-1zM243 118h1v1h-1zM251 118h1v1h-1zM22 119h1v1h-1zM140 119h1v1h-1zM143 119h1v1h-1zM152 119h1v1h-1zM157 119h2v1h-2zM229 119h1v1h-1zM231 119h2v1h-2zM235 119h1v1h-1zM237 119h1v1h-1zM243 119h1v1h-1zM248 119h1v1h-1zM250 119h2v1h-2zM24 120h1v1h-1zM83 120h1v1h-1zM85 120h2v1h-2zM88 120h1v1h-1zM90 120h1v1h-1zM95 120h1v1h-1zM114 120h2v1h-2zM133 120h1v1h-1zM135 120h1v1h-1zM152 120h1v1h-1zM159 120h1v1h-1zM244 120h2v1h-2zM247 120h1v1h-1zM250 120h1v1h-1zM25 121h1v1h-1zM33 121h1v1h-1zM80 121h1v1h-1zM82 121h2v1h-2zM87 121h1v1h-1zM91 121h4v1h-4zM109 121h1v1h-1zM114 121h2v1h-2zM134 121h1v1h-1zM142 121h2v1h-2zM226 121h1v1h-1zM228 121h1v1h-1zM244 121h1v1h-1zM248 121h3v1h-3zM253 121h1v1h-1zM29 122h1v1h-1zM80 122h2v1h-2zM83 122h1v1h-1zM86 122h1v1h-1zM88 122h1v1h-1zM90 122h1v1h-1zM115 122h1v1h-1zM129 122h1v1h-1zM141 122h1v1h-1zM159 122h1v1h-1zM175 122h1v1h-1zM227 122h1v1h-1zM233 122h1v1h-1zM243 122h1v1h-1zM248 122h1v1h-1zM253 122h1v1h-1zM255 122h1v1h-1zM33 123h1v1h-1zM80 123h1v1h-1zM82 123h1v1h-1zM85 123h3v1h-3zM91 123h3v1h-3zM95 123h1v1h-1zM114 123h2v1h-2zM130 123h1v1h-1zM139 123h1v1h-1zM149 123h1v1h-1zM154 123h1v1h-1zM172 123h1v1h-1zM234 123h1v1h-1zM248 123h1v1h-1zM66 124h1v1h-1zM80 124h1v1h-1zM82 124h1v1h-1zM86 124h3v1h-3zM94 124h2v1h-2zM138 124h1v1h-1zM142 124h1v1h-1zM144 124h1v1h-1zM147 124h2v1h-2zM150 124h2v1h-2zM153 124h1v1h-1zM155 124h2v1h-2zM226 124h1v1h-1zM238 124h1v1h-1zM240 124h1v1h-1zM248 124h1v1h-1zM255 124h1v1h-1zM80 125h3v1h-3zM84 125h1v1h-1zM87 125h1v1h-1zM89 125h3v1h-3zM93 125h1v1h-1zM128 125h1v1h-1zM138 125h1v1h-1zM148 125h1v1h-1zM157 125h1v1h-1zM173 125h1v1h-1zM229 125h2v1h-2zM232 125h1v1h-1zM239 125h1v1h-1zM254 125h1v1h-1zM28 126h1v1h-1zM31 126h1v1h-1zM81 126h4v1h-4zM87 126h2v1h-2zM93 126h2v1h-2zM137 126h1v1h-1zM143 126h1v1h-1zM145 126h1v1h-1zM160 126h1v1h-1zM171 126h1v1h-1zM177 126h1v1h-1zM235 126h1v1h-1zM244 126h1v1h-1zM246 126h1v1h-1zM249 126h2v1h-2zM255 126h1v1h-1zM26 127h1v1h-1zM83 127h3v1h-3zM87 127h1v1h-1zM91 127h1v1h-1zM93 127h1v1h-1zM100 127h1v1h-1zM132 127h2v1h-2zM148 127h1v1h-1zM177 127h1v1h-1zM251 127h1v1h-1zM253 127h1v1h-1zM81 128h3v1h-3zM85 128h3v1h-3zM90 128h1v1h-1zM248 128h1v1h-1zM254 128h1v1h-1zM83 129h1v1h-1zM230 129h1v1h-1zM235 129h2v1h-2zM245 129h1v1h-1zM81 130h2v1h-2zM142 130h1v1h-1zM208 130h1v1h-1zM145 131h1v1h-1zM211 131h2v1h-2zM67 132h1v1h-1zM69 132h1v1h-1zM73 132h1v1h-1zM143 132h1v1h-1zM208 132h2v1h-2zM224 132h1v1h-1zM68 133h1v1h-1zM125 133h1v1h-1zM136 133h1v1h-1zM139 133h1v1h-1zM207 133h1v1h-1zM211 133h1v1h-1zM232 133h1v1h-1zM214 134h1v1h-1zM226 134h2v1h-2zM243 134h1v1h-1zM246 134h1v1h-1zM231 135h1v1h-1zM233 135h1v1h-1zM235 135h1v1h-1zM252 135h1v1h-1zM113 136h1v1h-1zM242 136h1v1h-1zM245 136h1v1h-1zM239 137h1v1h-1zM248 137h1v1h-1zM231 138h1v1h-1zM234 138h1v1h-1zM236 138h1v1h-1zM111 139h1v1h-1zM225 139h1v1h-1zM238 139h1v1h-1zM246 139h1v1h-1zM251 139h1v1h-1zM253 139h2v1h-2zM90 140h3v1h-3zM235 140h1v1h-1zM237 140h1v1h-1zM245 140h1v1h-1zM251 140h1v1h-1zM87 141h1v1h-1zM233 141h1v1h-1zM237 141h2v1h-2zM247 141h1v1h-1zM90 142h2v1h-2zM114 142h1v1h-1zM148 142h1v1h-1zM240 142h1v1h-1zM243 142h1v1h-1zM246 142h1v1h-1zM236 143h1v1h-1zM35 144h1v1h-1zM223 144h1v1h-1zM225 144h1v1h-1zM224 146h1v1h-1zM231 146h1v1h-1zM237 146h1v1h-1zM239 146h1v1h-1zM242 146h2v1h-2zM253 146h1v1h-1zM94 150h1v1h-1zM104 150h2v1h-2zM102 151h2v1h-2zM105 151h1v1h-1zM169 151h1v1h-1zM205 151h2v1h-2zM208 151h1v1h-1zM78 152h1v1h-1zM80 152h1v1h-1zM205 152h4v1h-4zM231 152h1v1h-1zM244 152h1v1h-1zM77 153h1v1h-1zM81 153h1v1h-1zM116 153h1v1h-1zM149 153h2v1h-2zM199 153h1v1h-1zM204 153h2v1h-2zM234 153h1v1h-1zM79 154h2v1h-2zM205 154h2v1h-2zM208 154h1v1h-1zM234 154h1v1h-1zM237 154h1v1h-1zM206 155h1v1h-1zM208 155h1v1h-1zM11 156h1v1h-1zM71 156h1v1h-1zM160 156h1v1h-1zM206 156h1v1h-1zM208 156h1v1h-1zM24 157h1v1h-1zM76 157h1v1h-1zM204 157h4v1h-4zM223 157h1v1h-1zM226 157h1v1h-1zM230 157h1v1h-1zM237 157h1v1h-1zM7 158h1v1h-1zM126 158h1v1h-1zM243 158h1v1h-1zM67 159h1v1h-1zM91 159h1v1h-1zM145 159h1v1h-1zM231 159h1v1h-1zM27 160h1v1h-1zM232 160h1v1h-1zM230 161h1v1h-1zM9 162h1v1h-1zM237 162h1v1h-1zM12 163h1v1h-1zM22 163h1v1h-1zM67 163h1v1h-1zM81 163h1v1h-1zM83 164h1v1h-1zM240 164h1v1h-1zM30 165h1v1h-1zM83 165h1v1h-1zM85 165h1v1h-1zM22 166h1v1h-1zM25 166h1v1h-1zM49 166h1v1h-1zM225 166h1v1h-1zM16 167h1v1h-1zM50 167h1v1h-1zM226 167h1v1h-1zM21 168h1v1h-1zM14 169h1v1h-1zM19 169h1v1h-1zM32 169h1v1h-1zM95 169h1v1h-1zM198 169h2v1h-2zM201 169h1v1h-1zM215 169h1v1h-1zM230 169h1v1h-1zM232 169h1v1h-1zM235 169h1v1h-1zM255 169h1v1h-1zM16 170h1v1h-1zM192 170h1v1h-1zM199 170h1v1h-1zM201 170h1v1h-1zM234 170h1v1h-1zM239 170h1v1h-1zM125 171h1v1h-1zM160 171h1v1h-1zM198 171h1v1h-1zM201 171h1v1h-1zM255 171h1v1h-1zM6 172h1v1h-1zM97 172h1v1h-1zM125 172h1v1h-1zM131 172h1v1h-1zM198 172h1v1h-1zM200 172h1v1h-1zM210 172h1v1h-1zM24 173h1v1h-1zM31 173h1v1h-1zM54 173h1v1h-1zM69 173h3v1h-3zM83 173h1v1h-1zM105 173h1v1h-1zM119 173h3v1h-3zM127 173h1v1h-1zM210 173h1v1h-1zM213 173h1v1h-1zM223 173h1v1h-1zM230 173h1v1h-1zM242 173h1v1h-1zM254 173h1v1h-1zM8 174h1v1h-1zM37 174h1v1h-1zM82 174h1v1h-1zM7 175h1v1h-1zM9 175h1v1h-1zM113 175h1v1h-1zM235 175h1v1h-1zM255 175h1v1h-1zM76 176h1v1h-1zM209 176h1v1h-1zM251 176h1v1h-1zM69 177h1v1h-1zM85 177h1v1h-1zM102 177h3v1h-3zM109 177h2v1h-2zM102 178h2v1h-2zM179 178h1v1h-1zM76 179h1v1h-1zM155 180h1v1h-1zM246 180h1v1h-1zM90 181h1v1h-1zM147 181h1v1h-1zM249 181h1v1h-1zM92 183h1v1h-1zM151 183h1v1h-1zM3 184h1v1h-1zM5 184h1v1h-1zM128 184h1v1h-1zM148 184h1v1h-1zM159 184h1v1h-1zM0 185h1v1h-1zM2 185h2v1h-2zM6 185h1v1h-1zM64 185h1v1h-1zM142 185h1v1h-1zM188 185h1v1h-1zM224 185h1v1h-1zM247 185h1v1h-1zM250 185h1v1h-1zM0 186h1v1h-1zM3 186h1v1h-1zM5 186h1v1h-1zM171 186h1v1h-1zM3 187h2v1h-2zM20 187h1v1h-1zM170 187h1v1h-1zM243 187h1v1h-1zM246 187h1v1h-1zM0 188h1v1h-1zM7 188h2v1h-2zM78 188h1v1h-1zM191 188h1v1h-1zM221 188h1v1h-1zM244 188h1v1h-1zM249 188h1v1h-1zM2 189h1v1h-1zM7 189h2v1h-2zM78 189h1v1h-1zM0 190h1v1h-1zM3 190h2v1h-2zM7 190h1v1h-1zM24 190h1v1h-1zM38 190h1v1h-1zM42 190h1v1h-1zM63 190h1v1h-1zM114 190h3v1h-3zM158 190h1v1h-1zM243 190h1v1h-1zM248 190h1v1h-1zM1 191h1v1h-1zM3 191h1v1h-1zM7 191h2v1h-2zM98 191h1v1h-1zM110 191h1v1h-1zM114 191h2v1h-2zM243 191h1v1h-1zM10 192h1v1h-1zM46 192h1v1h-1zM246 192h1v1h-1zM12 193h1v1h-1zM52 193h1v1h-1zM54 193h1v1h-1zM1 194h1v1h-1zM53 194h1v1h-1zM94 194h1v1h-1zM110 194h2v1h-2zM13 195h1v1h-1zM18 195h1v1h-1zM22 195h1v1h-1zM110 195h1v1h-1zM157 195h1v1h-1zM242 195h1v1h-1zM244 195h1v1h-1zM251 195h1v1h-1zM48 196h1v1h-1zM83 196h1v1h-1zM38 197h1v1h-1zM40 197h1v1h-1zM42 197h1v1h-1zM55 197h1v1h-1zM57 197h1v1h-1zM61 197h1v1h-1zM118 197h1v1h-1zM4 198h1v1h-1zM7 198h1v1h-1zM7 199h1v1h-1zM14 199h1v1h-1zM24 199h1v1h-1zM42 199h2v1h-2zM55 199h1v1h-1zM175 199h1v1h-1zM0 200h1v1h-1zM4 200h1v1h-1zM10 200h1v1h-1zM27 200h4v1h-4zM34 200h1v1h-1zM38 200h1v1h-1zM50 200h1v1h-1zM2 201h1v1h-1zM10 201h2v1h-2zM25 201h4v1h-4zM61 201h1v1h-1zM64 201h1v1h-1zM6 202h1v1h-1zM24 202h1v1h-1zM26 202h1v1h-1zM29 202h1v1h-1zM39 202h1v1h-1zM59 202h1v1h-1zM240 202h1v1h-1zM249 202h5v1h-5zM8 203h2v1h-2zM11 203h1v1h-1zM24 203h3v1h-3zM29 203h1v1h-1zM39 203h1v1h-1zM54 203h1v1h-1zM60 203h1v1h-1zM249 203h1v1h-1zM252 203h2v1h-2zM8 204h4v1h-4zM14 204h1v1h-1zM25 204h1v1h-1zM27 204h3v1h-3zM53 204h1v1h-1zM55 204h1v1h-1zM75 204h1v1h-1zM107 204h1v1h-1zM249 204h1v1h-1zM252 204h1v1h-1zM3 205h1v1h-1zM10 205h1v1h-1zM12 205h1v1h-1zM26 205h1v1h-1zM33 205h1v1h-1zM37 205h1v1h-1zM50 205h1v1h-1zM250 205h1v1h-1zM252 205h1v1h-1zM5 206h1v1h-1zM12 206h1v1h-1zM17 206h1v1h-1zM21 206h2v1h-2zM36 206h1v1h-1zM41 206h1v1h-1zM52 206h1v1h-1zM80 206h1v1h-1zM250 206h3v1h-3zM13 207h1v1h-1zM20 207h1v1h-1zM32 207h1v1h-1zM36 207h1v1h-1zM55 207h1v1h-1zM59 207h1v1h-1zM123 207h1v1h-1zM150 207h1v1h-1zM5 208h1v1h-1zM24 208h1v1h-1zM29 208h1v1h-1zM34 208h1v1h-1zM42 208h4v1h-4zM47 208h1v1h-1zM50 208h1v1h-1zM60 208h1v1h-1zM103 208h1v1h-1zM203 208h1v1h-1zM18 209h1v1h-1zM21 209h2v1h-2zM24 209h1v1h-1zM34 209h1v1h-1zM39 209h2v1h-2zM42 209h1v1h-1zM45 209h1v1h-1zM49 209h3v1h-3zM63 209h1v1h-1zM5 210h1v1h-1zM25 210h1v1h-1zM31 210h1v1h-1zM40 210h4v1h-4zM46 210h1v1h-1zM53 210h1v1h-1zM105 210h1v1h-1zM108 210h1v1h-1zM7 211h1v1h-1zM16 211h1v1h-1zM22 211h1v1h-1zM40 211h2v1h-2zM44 211h1v1h-1zM101 211h1v1h-1zM106 211h1v1h-1zM4 212h1v1h-1zM12 212h1v1h-1zM14 212h2v1h-2zM19 212h1v1h-1zM31 212h1v1h-1zM33 212h1v1h-1zM41 212h3v1h-3zM101 212h1v1h-1zM0 213h1v1h-1zM9 213h1v1h-1zM12 213h1v1h-1zM15 213h1v1h-1zM20 213h1v1h-1zM25 213h1v1h-1zM27 213h1v1h-1zM31 213h3v1h-3zM47 213h1v1h-1zM63 213h1v1h-1zM95 213h1v1h-1zM103 213h1v1h-1zM230 213h1v1h-1zM2 214h1v1h-1zM13 214h3v1h-3zM24 214h1v1h-1zM38 214h1v1h-1zM40 214h2v1h-2zM43 214h1v1h-1zM45 214h1v1h-1zM51 214h1v1h-1zM100 214h1v1h-1zM105 214h1v1h-1zM13 215h1v1h-1zM23 215h1v1h-1zM28 215h1v1h-1zM30 215h5v1h-5zM40 215h1v1h-1zM45 215h1v1h-1zM100 215h2v1h-2zM103 215h1v1h-1zM110 215h1v1h-1zM6 216h1v1h-1zM16 216h1v1h-1zM30 216h1v1h-1zM33 216h3v1h-3zM41 216h1v1h-1zM106 216h1v1h-1zM3 217h1v1h-1zM16 217h1v1h-1zM19 217h1v1h-1zM26 217h2v1h-2zM31 217h1v1h-1zM33 217h3v1h-3zM56 217h1v1h-1zM110 217h1v1h-1zM112 217h1v1h-1zM19 218h1v1h-1zM23 218h1v1h-1zM28 218h1v1h-1zM30 218h2v1h-2zM33 218h1v1h-1zM39 218h1v1h-1zM44 218h1v1h-1zM56 218h1v1h-1zM62 218h1v1h-1zM138 218h1v1h-1zM3 219h1v1h-1zM16 219h1v1h-1zM21 219h1v1h-1zM27 219h1v1h-1zM38 219h2v1h-2zM42 219h1v1h-1zM53 219h1v1h-1zM105 219h1v1h-1zM2 220h1v1h-1zM9 220h1v1h-1zM19 220h1v1h-1zM32 220h1v1h-1zM104 220h1v1h-1zM3 221h3v1h-3zM21 221h1v1h-1zM27 221h1v1h-1zM34 221h1v1h-1zM40 221h1v1h-1zM55 221h1v1h-1zM83 221h1v1h-1zM102 221h1v1h-1zM4 222h1v1h-1zM31 222h1v1h-1zM40 222h1v1h-1zM59 222h2v1h-2zM105 222h1v1h-1zM142 222h1v1h-1zM204 222h1v1h-1zM34 223h1v1h-1zM43 223h1v1h-1zM53 223h2v1h-2zM111 223h1v1h-1zM8 224h1v1h-1zM17 224h1v1h-1zM21 224h2v1h-2zM95 224h1v1h-1zM192 224h1v1h-1zM203 224h1v1h-1zM247 224h1v1h-1zM9 225h1v1h-1zM19 225h1v1h-1zM22 225h1v1h-1zM31 225h1v1h-1zM44 225h1v1h-1zM61 225h1v1h-1zM63 225h1v1h-1zM6 226h1v1h-1zM8 226h1v1h-1zM11 226h1v1h-1zM16 226h3v1h-3zM26 226h1v1h-1zM45 226h1v1h-1zM51 226h1v1h-1zM61 226h1v1h-1zM1 227h1v1h-1zM14 227h1v1h-1zM16 227h4v1h-4zM208 227h1v1h-1zM9 228h1v1h-1zM18 228h3v1h-3zM22 228h2v1h-2zM27 228h2v1h-2zM35 228h1v1h-1zM59 228h1v1h-1zM61 228h2v1h-2zM5 229h2v1h-2zM19 229h1v1h-1zM21 229h1v1h-1zM25 229h1v1h-1zM30 229h2v1h-2zM36 229h1v1h-1zM42 229h1v1h-1zM57 229h1v1h-1zM60 229h1v1h-1zM62 229h1v1h-1zM36 230h1v1h-1zM39 230h1v1h-1zM43 230h1v1h-1zM47 230h1v1h-1zM59 230h4v1h-4zM5 231h1v1h-1zM9 231h1v1h-1zM11 231h1v1h-1zM14 231h1v1h-1zM16 231h1v1h-1zM19 231h1v1h-1zM22 231h2v1h-2zM27 231h1v1h-1zM30 231h1v1h-1zM56 231h1v1h-1zM60 231h4v1h-4zM245 231h1v1h-1zM8 232h1v1h-1zM10 232h6v1h-6zM19 232h1v1h-1zM22 232h1v1h-1zM25 232h1v1h-1zM40 232h1v1h-1zM57 232h3v1h-3zM61 232h1v1h-1zM79 232h1v1h-1zM8 233h3v1h-3zM15 233h1v1h-1zM35 233h1v1h-1zM47 233h1v1h-1zM51 233h1v1h-1zM57 233h1v1h-1zM60 233h1v1h-1zM64 233h1v1h-1zM246 233h1v1h-1zM3 234h2v1h-2zM8 234h1v1h-1zM13 234h2v1h-2zM16 234h1v1h-1zM25 234h1v1h-1zM37 234h2v1h-2zM49 234h1v1h-1zM57 234h1v1h-1zM61 234h1v1h-1zM63 234h1v1h-1zM242 234h1v1h-1zM8 235h2v1h-2zM13 235h2v1h-2zM24 235h1v1h-1zM43 235h1v1h-1zM54 235h1v1h-1zM57 235h3v1h-3zM84 235h1v1h-1zM250 235h1v1h-1zM11 236h1v1h-1zM13 236h4v1h-4zM37 236h1v1h-1zM48 236h1v1h-1zM50 236h1v1h-1zM52 236h1v1h-1zM60 236h4v1h-4zM4 237h1v1h-1zM8 237h2v1h-2zM13 237h1v1h-1zM15 237h2v1h-2zM24 237h1v1h-1zM39 237h1v1h-1zM43 237h1v1h-1zM51 237h1v1h-1zM59 237h1v1h-1zM62 237h1v1h-1zM178 237h1v1h-1zM5 238h1v1h-1zM8 238h3v1h-3zM12 238h1v1h-1zM16 238h1v1h-1zM19 238h1v1h-1zM46 238h1v1h-1zM48 238h1v1h-1zM51 238h2v1h-2zM60 238h4v1h-4zM12 239h3v1h-3zM20 239h1v1h-1zM40 239h1v1h-1zM43 239h1v1h-1zM48 239h2v1h-2zM51 239h2v1h-2zM62 239h2v1h-2zM65 239h1v1h-1zM185 239h1v1h-1zM44 240h1v1h-1zM49 240h2v1h-2zM52 240h1v1h-1zM54 240h1v1h-1zM56 240h1v1h-1zM70 240h1v1h-1zM107 240h3v1h-3zM111 240h1v1h-1zM0 241h2v1h-2zM4 241h1v1h-1zM16 241h1v1h-1zM34 241h1v1h-1zM41 241h1v1h-1zM46 241h1v1h-1zM60 241h1v1h-1zM71 241h2v1h-2zM107 241h1v1h-1zM110 241h2v1h-2zM138 241h1v1h-1zM8 242h1v1h-1zM12 242h1v1h-1zM63 242h1v1h-1zM69 242h3v1h-3zM79 242h1v1h-1zM14 243h1v1h-1zM37 243h1v1h-1zM41 243h1v1h-1zM55 243h1v1h-1zM60 243h1v1h-1zM81 243h1v1h-1zM108 243h1v1h-1zM110 243h2v1h-2zM10 244h1v1h-1zM13 244h1v1h-1zM24 244h1v1h-1zM40 244h1v1h-1zM54 244h2v1h-2zM153 244h1v1h-1zM11 245h1v1h-1zM13 245h1v1h-1zM30 245h1v1h-1zM42 245h1v1h-1zM58 245h1v1h-1zM78 245h1v1h-1zM1 246h1v1h-1zM21 246h1v1h-1zM24 246h1v1h-1zM27 246h1v1h-1zM50 246h1v1h-1zM55 246h1v1h-1zM60 246h1v1h-1zM62 246h1v1h-1zM9 247h1v1h-1zM12 247h1v1h-1zM19 247h1v1h-1zM29 247h1v1h-1zM36 247h1v1h-1zM2 248h1v1h-1zM5 248h1v1h-1zM12 248h1v1h-1zM23 248h1v1h-1zM25 248h1v1h-1zM30 248h1v1h-1zM40 248h1v1h-1zM43 248h1v1h-1zM47 248h1v1h-1zM65 248h1v1h-1zM128 248h1v1h-1zM185 248h1v1h-1zM4 249h1v1h-1zM13 249h1v1h-1zM24 249h1v1h-1zM26 249h1v1h-1zM29 249h1v1h-1zM32 249h1v1h-1zM52 249h1v1h-1zM56 249h1v1h-1zM86 249h1v1h-1zM3 250h3v1h-3zM21 250h1v1h-1zM23 250h1v1h-1zM25 250h3v1h-3zM29 250h1v1h-1zM56 250h1v1h-1zM91 250h1v1h-1zM6 251h1v1h-1zM23 251h1v1h-1zM25 251h4v1h-4zM164 251h1v1h-1zM23 252h1v1h-1zM25 252h2v1h-2zM28 252h3v1h-3zM208 252h1v1h-1zM238 252h1v1h-1zM24 253h1v1h-1zM26 253h3v1h-3zM35 253h1v1h-1zM39 253h1v1h-1zM44 253h1v1h-1zM48 253h1v1h-1zM58 253h1v1h-1zM70 253h1v1h-1zM5 254h1v1h-1zM23 254h3v1h-3zM27 254h4v1h-4zM34 254h1v1h-1zM37 254h1v1h-1zM48 254h1v1h-1zM56 254h2v1h-2zM4 255h1v1h-1zM15 255h1v1h-1zM21 255h2v1h-2zM24 255h4v1h-4zM30 255h1v1h-1zM42 255h1v1h-1zM150 255h1v1h-1z"/><path fill="#0000cc" d="M19 0h1v1h-1zM21 0h1v1h-1zM19 1h1v1h-1zM19 8h1v1h-1zM163 13h1v1h-1zM16 21h2v1h-2zM109 21h1v1h-1zM17 22h1v1h-1zM225 22h1v1h-1zM16 23h1v1h-1zM16 24h2v1h-2zM110 24h1v1h-1zM109 27h2v1h-2zM26 30h1v1h-1zM105 31h1v1h-1zM26 32h1v1h-1zM108 33h1v1h-1zM28 35h1v1h-1zM68 49h1v1h-1zM70 49h1v1h-1zM77 49h1v1h-1zM71 50h1v1h-1zM65 51h1v1h-1zM79 51h1v1h-1zM12 52h1v1h-1zM4 53h1v1h-1zM66 53h1v1h-1zM107 53h1v1h-1zM13 54h1v1h-1zM77 54h1v1h-1zM66 55h1v1h-1zM72 55h1v1h-1zM74 55h2v1h-2zM113 55h1v1h-1zM7 56h1v1h-1zM9 56h1v1h-1zM72 56h1v1h-1zM70 57h1v1h-1zM68 58h1v1h-1zM72 58h1v1h-1zM6 59h2v1h-2zM10 59h1v1h-1zM73 59h1v1h-1zM36 60h1v1h-1zM68 60h1v1h-1zM79 60h2v1h-2zM109 60h1v1h-1zM65 61h1v1h-1zM71 61h2v1h-2zM110 61h1v1h-1zM79 62h1v1h-1zM145 62h1v1h-1zM214 62h1v1h-1zM80 63h1v1h-1zM110 63h1v1h-1zM70 64h1v1h-1zM76 64h1v1h-1zM127 66h1v1h-1zM177 66h1v1h-1zM36 67h1v1h-1zM174 68h1v1h-1zM184 68h1v1h-1zM224 68h1v1h-1zM123 69h1v1h-1zM221 69h1v1h-1zM134 70h1v1h-1zM160 70h1v1h-1zM189 70h1v1h-1zM202 70h1v1h-1zM125 71h1v1h-1zM175 71h1v1h-1zM222 71h1v1h-1zM233 71h1v1h-1zM97 72h1v1h-1zM135 72h1v1h-1zM137 73h1v1h-1zM221 73h1v1h-1zM140 74h1v1h-1zM144 74h1v1h-1zM223 74h1v1h-1zM119 75h1v1h-1zM141 75h1v1h-1zM193 75h1v1h-1zM201 75h1v1h-1zM232 75h1v1h-1zM243 75h1v1h-1zM2 76h1v1h-1zM110 76h1v1h-1zM125 76h1v1h-1zM183 76h1v1h-1zM133 77h2v1h-2zM141 77h2v1h-2zM0 78h1v1h-1zM3 78h1v1h-1zM9 78h1v1h-1zM90 78h1v1h-1zM142 78h1v1h-1zM3 79h1v1h-1zM9 79h1v1h-1zM12 79h1v1h-1zM141 79h2v1h-2zM144 79h1v1h-1zM161 79h1v1h-1zM165 79h1v1h-1zM114 80h1v1h-1zM134 80h1v1h-1zM142 80h1v1h-1zM160 80h6v1h-6zM202 80h1v1h-1zM247 80h1v1h-1zM119 81h1v1h-1zM142 81h1v1h-1zM149 81h1v1h-1zM160 81h1v1h-1zM162 81h1v1h-1zM164 81h1v1h-1zM252 81h1v1h-1zM120 82h1v1h-1zM131 82h1v1h-1zM162 82h1v1h-1zM180 82h1v1h-1zM217 82h1v1h-1zM223 82h1v1h-1zM136 83h1v1h-1zM143 83h2v1h-2zM131 84h1v1h-1zM145 84h1v1h-1zM170 84h1v1h-1zM174 84h1v1h-1zM176 84h1v1h-1zM142 85h1v1h-1zM171 85h2v1h-2zM175 85h2v1h-2zM249 85h1v1h-1zM133 86h1v1h-1zM139 86h1v1h-1zM144 86h1v1h-1zM170 86h2v1h-2zM173 86h4v1h-4zM199 86h1v1h-1zM86 87h1v1h-1zM170 87h2v1h-2zM174 87h1v1h-1zM184 87h1v1h-1zM199 87h1v1h-1zM138 88h1v1h-1zM140 88h1v1h-1zM185 88h1v1h-1zM123 89h1v1h-1zM132 89h1v1h-1zM135 89h1v1h-1zM137 89h1v1h-1zM141 89h2v1h-2zM186 89h1v1h-1zM200 89h1v1h-1zM114 90h1v1h-1zM137 90h1v1h-1zM144 90h1v1h-1zM187 90h1v1h-1zM128 91h1v1h-1zM139 91h1v1h-1zM142 91h1v1h-1zM149 91h1v1h-1zM130 92h1v1h-1zM138 92h3v1h-3zM211 92h1v1h-1zM189 93h2v1h-2zM204 93h1v1h-1zM145 94h1v1h-1zM196 94h1v1h-1zM205 94h1v1h-1zM144 95h1v1h-1zM226 95h1v1h-1zM232 95h1v1h-1zM235 95h1v1h-1zM237 95h1v1h-1zM244 95h1v1h-1zM250 95h1v1h-1zM254 95h1v1h-1zM0 96h1v1h-1zM3 96h1v1h-1zM5 96h1v1h-1zM72 96h1v1h-1zM228 96h1v1h-1zM241 96h1v1h-1zM254 96h1v1h-1zM3 97h1v1h-1zM5 97h3v1h-3zM73 97h1v1h-1zM113 97h2v1h-2zM171 97h1v1h-1zM230 97h1v1h-1zM235 97h1v1h-1zM239 97h1v1h-1zM252 97h1v1h-1zM0 98h1v1h-1zM3 98h3v1h-3zM21 98h4v1h-4zM66 98h2v1h-2zM74 98h1v1h-1zM113 98h1v1h-1zM115 98h1v1h-1zM224 98h1v1h-1zM228 98h2v1h-2zM231 98h2v1h-2zM242 98h1v1h-1zM1 99h1v1h-1zM3 99h1v1h-1zM21 99h2v1h-2zM24 99h1v1h-1zM112 99h1v1h-1zM115 99h1v1h-1zM172 99h1v1h-1zM225 99h1v1h-1zM232 99h1v1h-1zM234 99h1v1h-1zM244 99h1v1h-1zM10 100h1v1h-1zM113 100h3v1h-3zM225 100h1v1h-1zM243 100h1v1h-1zM246 100h2v1h-2zM10 101h3v1h-3zM66 101h1v1h-1zM69 101h1v1h-1zM163 101h1v1h-1zM223 101h1v1h-1zM228 101h1v1h-1zM235 101h1v1h-1zM253 101h2v1h-2zM47 102h1v1h-1zM75 102h1v1h-1zM112 102h1v1h-1zM114 102h1v1h-1zM224 102h1v1h-1zM227 102h1v1h-1zM237 102h1v1h-1zM239 102h2v1h-2zM243 102h1v1h-1zM245 102h2v1h-2zM22 103h1v1h-1zM55 103h1v1h-1zM66 103h1v1h-1zM79 103h1v1h-1zM229 103h1v1h-1zM231 103h1v1h-1zM244 103h1v1h-1zM246 103h1v1h-1zM254 103h1v1h-1zM78 104h1v1h-1zM176 104h1v1h-1zM223 104h1v1h-1zM225 104h1v1h-1zM232 104h1v1h-1zM250 104h1v1h-1zM253 104h3v1h-3zM75 105h1v1h-1zM80 105h1v1h-1zM175 105h2v1h-2zM227 105h1v1h-1zM229 105h1v1h-1zM233 105h1v1h-1zM235 105h1v1h-1zM245 105h1v1h-1zM78 106h1v1h-1zM224 106h1v1h-1zM234 106h1v1h-1zM247 106h1v1h-1zM249 106h1v1h-1zM251 106h1v1h-1zM75 107h3v1h-3zM80 107h1v1h-1zM119 107h1v1h-1zM223 107h1v1h-1zM225 107h1v1h-1zM229 107h1v1h-1zM235 107h1v1h-1zM225 108h1v1h-1zM231 108h2v1h-2zM236 108h1v1h-1zM238 108h2v1h-2zM245 108h1v1h-1zM254 108h1v1h-1zM67 109h1v1h-1zM70 109h2v1h-2zM252 109h1v1h-1zM20 110h1v1h-1zM29 110h1v1h-1zM70 110h1v1h-1zM74 110h1v1h-1zM229 110h2v1h-2zM232 110h1v1h-1zM235 110h1v1h-1zM238 110h2v1h-2zM255 110h1v1h-1zM65 111h1v1h-1zM122 111h1v1h-1zM124 111h1v1h-1zM225 111h1v1h-1zM232 111h2v1h-2zM236 111h1v1h-1zM247 111h1v1h-1zM22 112h1v1h-1zM74 112h1v1h-1zM76 112h1v1h-1zM133 112h1v1h-1zM137 112h1v1h-1zM149 112h1v1h-1zM254 112h1v1h-1zM73 113h1v1h-1zM79 113h1v1h-1zM140 113h1v1h-1zM226 113h1v1h-1zM235 113h1v1h-1zM242 113h2v1h-2zM250 113h2v1h-2zM29 114h1v1h-1zM130 114h1v1h-1zM135 114h1v1h-1zM150 114h1v1h-1zM152 114h1v1h-1zM226 114h1v1h-1zM236 114h1v1h-1zM241 114h2v1h-2zM244 114h1v1h-1zM251 114h1v1h-1zM24 115h1v1h-1zM119 115h1v1h-1zM138 115h1v1h-1zM141 115h1v1h-1zM225 115h1v1h-1zM231 115h1v1h-1zM240 115h1v1h-1zM245 115h1v1h-1zM249 115h3v1h-3zM24 116h1v1h-1zM29 116h1v1h-1zM127 116h1v1h-1zM135 116h1v1h-1zM138 116h1v1h-1zM146 116h1v1h-1zM151 116h1v1h-1zM154 116h1v1h-1zM241 116h1v1h-1zM244 116h1v1h-1zM253 116h2v1h-2zM138 117h1v1h-1zM140 117h1v1h-1zM142 117h1v1h-1zM145 117h1v1h-1zM171 117h1v1h-1zM227 117h1v1h-1zM233 117h1v1h-1zM239 117h1v1h-1zM241 117h1v1h-1zM19 118h1v1h-1zM137 118h1v1h-1zM143 118h1v1h-1zM145 118h1v1h-1zM155 118h1v1h-1zM160 118h1v1h-1zM238 118h1v1h-1zM245 118h1v1h-1zM250 118h1v1h-1zM26 119h1v1h-1zM130 119h1v1h-1zM133 119h1v1h-1zM144 119h3v1h-3zM148 119h1v1h-1zM156 119h1v1h-1zM240 119h2v1h-2zM244 119h1v1h-1zM246 119h1v1h-1zM253 119h1v1h-1zM255 119h1v1h-1zM80 120h3v1h-3zM84 120h1v1h-1zM87 120h1v1h-1zM89 120h1v1h-1zM91 120h4v1h-4zM129 120h1v1h-1zM151 120h1v1h-1zM153 120h1v1h-1zM172 120h1v1h-1zM227 120h1v1h-1zM229 120h1v1h-1zM234 120h1v1h-1zM248 120h1v1h-1zM253 120h2v1h-2zM27 121h1v1h-1zM70 121h1v1h-1zM81 121h1v1h-1zM84 121h3v1h-3zM88 121h3v1h-3zM95 121h1v1h-1zM132 121h1v1h-1zM136 121h1v1h-1zM138 121h1v1h-1zM144 121h1v1h-1zM232 121h2v1h-2zM239 121h1v1h-1zM246 121h1v1h-1zM82 122h1v1h-1zM84 122h2v1h-2zM87 122h1v1h-1zM89 122h1v1h-1zM91 122h5v1h-5zM114 122h1v1h-1zM132 122h1v1h-1zM137 122h1v1h-1zM155 122h2v1h-2zM226 122h1v1h-1zM239 122h1v1h-1zM241 122h1v1h-1zM247 122h1v1h-1zM249 122h2v1h-2zM21 123h2v1h-2zM31 123h1v1h-1zM81 123h1v1h-1zM83 123h2v1h-2zM88 123h3v1h-3zM94 123h1v1h-1zM128 123h1v1h-1zM146 123h2v1h-2zM153 123h1v1h-1zM231 123h1v1h-1zM235 123h1v1h-1zM242 123h1v1h-1zM249 123h1v1h-1zM254 123h1v1h-1zM29 124h2v1h-2zM81 124h1v1h-1zM83 124h3v1h-3zM89 124h5v1h-5zM143 124h1v1h-1zM157 124h1v1h-1zM223 124h1v1h-1zM242 124h1v1h-1zM245 124h1v1h-1zM247 124h1v1h-1zM250 124h2v1h-2zM254 124h1v1h-1zM21 125h1v1h-1zM23 125h1v1h-1zM30 125h1v1h-1zM83 125h1v1h-1zM85 125h2v1h-2zM88 125h1v1h-1zM92 125h1v1h-1zM94 125h2v1h-2zM139 125h1v1h-1zM153 125h1v1h-1zM156 125h1v1h-1zM160 125h1v1h-1zM227 125h1v1h-1zM238 125h1v1h-1zM246 125h1v1h-1zM251 125h2v1h-2zM23 126h1v1h-1zM80 126h1v1h-1zM85 126h2v1h-2zM89 126h4v1h-4zM95 126h1v1h-1zM128 126h1v1h-1zM141 126h1v1h-1zM147 126h1v1h-1zM225 126h2v1h-2zM231 126h1v1h-1zM254 126h1v1h-1zM29 127h1v1h-1zM80 127h3v1h-3zM86 127h1v1h-1zM88 127h3v1h-3zM92 127h1v1h-1zM94 127h2v1h-2zM128 127h2v1h-2zM131 127h1v1h-1zM138 127h1v1h-1zM152 127h1v1h-1zM155 127h1v1h-1zM232 127h1v1h-1zM235 127h1v1h-1zM237 127h1v1h-1zM255 127h1v1h-1zM80 128h1v1h-1zM84 128h1v1h-1zM88 128h2v1h-2zM91 128h5v1h-5zM207 128h1v1h-1zM210 128h1v1h-1zM212 128h1v1h-1zM138 129h1v1h-1zM207 129h1v1h-1zM209 129h1v1h-1zM212 129h1v1h-1zM223 129h1v1h-1zM237 129h2v1h-2zM242 129h1v1h-1zM212 130h1v1h-1zM231 130h1v1h-1zM239 130h1v1h-1zM247 130h2v1h-2zM207 131h1v1h-1zM227 131h1v1h-1zM237 131h1v1h-1zM68 132h1v1h-1zM140 132h1v1h-1zM142 132h1v1h-1zM145 132h1v1h-1zM147 132h1v1h-1zM225 132h1v1h-1zM231 132h1v1h-1zM234 132h1v1h-1zM239 132h1v1h-1zM242 132h1v1h-1zM67 133h1v1h-1zM69 133h1v1h-1zM203 133h1v1h-1zM224 133h2v1h-2zM228 133h1v1h-1zM237 133h1v1h-1zM244 133h1v1h-1zM251 133h2v1h-2zM221 134h1v1h-1zM225 134h1v1h-1zM234 134h1v1h-1zM236 134h1v1h-1zM244 134h1v1h-1zM73 135h1v1h-1zM236 135h1v1h-1zM243 135h1v1h-1zM250 135h1v1h-1zM108 136h2v1h-2zM212 136h1v1h-1zM225 136h1v1h-1zM237 136h1v1h-1zM239 136h1v1h-1zM254 136h1v1h-1zM208 137h1v1h-1zM223 137h1v1h-1zM226 137h1v1h-1zM234 137h1v1h-1zM224 138h1v1h-1zM238 138h1v1h-1zM240 138h1v1h-1zM243 138h1v1h-1zM246 138h1v1h-1zM109 139h2v1h-2zM228 139h1v1h-1zM0 140h1v1h-1zM109 140h3v1h-3zM203 140h1v1h-1zM90 141h1v1h-1zM92 141h1v1h-1zM228 141h1v1h-1zM45 142h1v1h-1zM48 143h1v1h-1zM221 143h1v1h-1zM223 143h1v1h-1zM229 143h1v1h-1zM250 143h1v1h-1zM237 145h1v1h-1zM249 145h1v1h-1zM225 146h1v1h-1zM102 147h1v1h-1zM221 147h1v1h-1zM237 147h1v1h-1zM68 148h1v1h-1zM96 148h1v1h-1zM101 148h1v1h-1zM144 148h1v1h-1zM65 149h1v1h-1zM102 149h4v1h-4zM102 150h2v1h-2zM244 150h1v1h-1zM91 151h1v1h-1zM104 151h1v1h-1zM204 151h1v1h-1zM207 151h1v1h-1zM228 151h1v1h-1zM79 152h1v1h-1zM81 152h1v1h-1zM204 152h1v1h-1zM78 153h3v1h-3zM206 153h3v1h-3zM78 154h1v1h-1zM81 154h1v1h-1zM204 154h1v1h-1zM207 154h1v1h-1zM224 154h1v1h-1zM230 154h1v1h-1zM141 155h1v1h-1zM204 155h2v1h-2zM207 155h1v1h-1zM236 155h1v1h-1zM204 156h2v1h-2zM207 156h1v1h-1zM208 157h1v1h-1zM241 157h1v1h-1zM235 158h1v1h-1zM125 159h1v1h-1zM12 160h1v1h-1zM24 160h1v1h-1zM28 160h1v1h-1zM86 160h1v1h-1zM90 160h1v1h-1zM111 160h1v1h-1zM230 160h1v1h-1zM31 161h1v1h-1zM128 161h1v1h-1zM232 161h1v1h-1zM95 162h1v1h-1zM9 163h1v1h-1zM13 163h1v1h-1zM83 163h3v1h-3zM228 163h1v1h-1zM240 163h1v1h-1zM8 164h1v1h-1zM16 164h1v1h-1zM84 164h1v1h-1zM231 164h1v1h-1zM233 164h1v1h-1zM27 165h1v1h-1zM97 165h1v1h-1zM122 165h1v1h-1zM234 165h1v1h-1zM31 166h1v1h-1zM110 166h1v1h-1zM194 166h1v1h-1zM18 168h1v1h-1zM20 168h1v1h-1zM232 168h1v1h-1zM23 169h1v1h-1zM200 169h1v1h-1zM233 169h1v1h-1zM240 169h1v1h-1zM198 170h1v1h-1zM200 170h1v1h-1zM230 170h1v1h-1zM238 170h1v1h-1zM126 171h2v1h-2zM173 171h1v1h-1zM186 171h1v1h-1zM199 171h2v1h-2zM254 171h1v1h-1zM41 172h1v1h-1zM126 172h2v1h-2zM199 172h1v1h-1zM201 172h1v1h-1zM211 172h2v1h-2zM237 172h1v1h-1zM255 172h1v1h-1zM16 173h1v1h-1zM125 173h1v1h-1zM211 173h2v1h-2zM255 173h1v1h-1zM69 174h3v1h-3zM112 174h1v1h-1zM119 174h3v1h-3zM242 174h1v1h-1zM254 174h2v1h-2zM19 175h1v1h-1zM254 175h1v1h-1zM224 176h1v1h-1zM233 176h1v1h-1zM70 177h1v1h-1zM89 178h1v1h-1zM131 178h1v1h-1zM36 179h1v1h-1zM102 179h2v1h-2zM90 180h2v1h-2zM109 180h1v1h-1zM174 180h1v1h-1zM214 180h1v1h-1zM91 181h1v1h-1zM245 181h1v1h-1zM248 181h1v1h-1zM128 182h1v1h-1zM213 182h1v1h-1zM59 183h1v1h-1zM247 183h1v1h-1zM0 184h3v1h-3zM4 184h1v1h-1zM6 184h3v1h-3zM188 184h1v1h-1zM245 184h1v1h-1zM1 185h1v1h-1zM4 185h2v1h-2zM7 185h2v1h-2zM72 185h1v1h-1zM1 186h2v1h-2zM4 186h1v1h-1zM6 186h3v1h-3zM159 186h1v1h-1zM226 186h1v1h-1zM0 187h3v1h-3zM5 187h4v1h-4zM50 187h1v1h-1zM96 187h1v1h-1zM242 187h1v1h-1zM244 187h1v1h-1zM251 187h1v1h-1zM1 188h6v1h-6zM42 188h1v1h-1zM64 188h1v1h-1zM79 188h2v1h-2zM0 189h2v1h-2zM3 189h4v1h-4zM142 189h1v1h-1zM254 189h1v1h-1zM1 190h2v1h-2zM5 190h2v1h-2zM8 190h1v1h-1zM244 190h1v1h-1zM0 191h1v1h-1zM2 191h1v1h-1zM4 191h3v1h-3zM32 191h1v1h-1zM62 191h1v1h-1zM77 191h1v1h-1zM116 191h1v1h-1zM244 191h1v1h-1zM252 191h1v1h-1zM54 192h1v1h-1zM84 192h1v1h-1zM109 192h1v1h-1zM61 193h1v1h-1zM3 194h1v1h-1zM18 194h1v1h-1zM97 194h1v1h-1zM109 194h1v1h-1zM127 194h1v1h-1zM4 195h1v1h-1zM8 195h1v1h-1zM11 195h1v1h-1zM25 195h1v1h-1zM60 195h1v1h-1zM109 195h1v1h-1zM111 195h1v1h-1zM247 195h1v1h-1zM249 195h1v1h-1zM15 196h1v1h-1zM23 196h1v1h-1zM29 196h1v1h-1zM32 196h1v1h-1zM49 196h1v1h-1zM19 197h1v1h-1zM48 197h1v1h-1zM59 197h1v1h-1zM44 198h1v1h-1zM8 199h1v1h-1zM53 199h1v1h-1zM59 199h1v1h-1zM91 199h1v1h-1zM8 200h2v1h-2zM11 200h1v1h-1zM24 200h3v1h-3zM32 200h1v1h-1zM49 200h1v1h-1zM62 200h1v1h-1zM93 200h1v1h-1zM8 201h2v1h-2zM19 201h1v1h-1zM24 201h1v1h-1zM29 201h1v1h-1zM41 201h1v1h-1zM55 201h1v1h-1zM3 202h1v1h-1zM8 202h4v1h-4zM25 202h1v1h-1zM27 202h2v1h-2zM205 202h1v1h-1zM10 203h1v1h-1zM12 203h1v1h-1zM17 203h1v1h-1zM27 203h2v1h-2zM35 203h1v1h-1zM46 203h1v1h-1zM49 203h1v1h-1zM55 203h1v1h-1zM97 203h1v1h-1zM103 203h1v1h-1zM250 203h2v1h-2zM13 204h1v1h-1zM20 204h1v1h-1zM24 204h1v1h-1zM26 204h1v1h-1zM250 204h2v1h-2zM253 204h1v1h-1zM8 205h2v1h-2zM11 205h1v1h-1zM14 205h1v1h-1zM20 205h5v1h-5zM38 205h1v1h-1zM46 205h1v1h-1zM53 205h1v1h-1zM58 205h1v1h-1zM63 205h1v1h-1zM248 205h2v1h-2zM251 205h1v1h-1zM253 205h2v1h-2zM15 206h1v1h-1zM20 206h1v1h-1zM23 206h2v1h-2zM60 206h1v1h-1zM97 206h1v1h-1zM105 206h1v1h-1zM248 206h2v1h-2zM253 206h2v1h-2zM3 207h1v1h-1zM21 207h4v1h-4zM40 207h1v1h-1zM43 207h1v1h-1zM11 208h2v1h-2zM20 208h4v1h-4zM40 208h2v1h-2zM55 208h1v1h-1zM15 209h1v1h-1zM20 209h1v1h-1zM23 209h1v1h-1zM25 209h2v1h-2zM41 209h1v1h-1zM43 209h2v1h-2zM91 209h1v1h-1zM6 210h1v1h-1zM35 210h1v1h-1zM44 210h2v1h-2zM59 210h1v1h-1zM111 210h1v1h-1zM9 211h1v1h-1zM11 211h1v1h-1zM13 211h1v1h-1zM29 211h1v1h-1zM33 211h1v1h-1zM42 211h2v1h-2zM45 211h1v1h-1zM47 211h1v1h-1zM151 211h1v1h-1zM185 211h1v1h-1zM13 212h1v1h-1zM25 212h1v1h-1zM40 212h1v1h-1zM44 212h2v1h-2zM100 212h1v1h-1zM102 212h2v1h-2zM168 212h1v1h-1zM2 213h1v1h-1zM6 213h1v1h-1zM13 213h2v1h-2zM22 213h1v1h-1zM40 213h6v1h-6zM61 213h1v1h-1zM100 213h3v1h-3zM5 214h1v1h-1zM9 214h1v1h-1zM12 214h1v1h-1zM17 214h1v1h-1zM19 214h1v1h-1zM22 214h1v1h-1zM34 214h1v1h-1zM42 214h1v1h-1zM44 214h1v1h-1zM52 214h1v1h-1zM101 214h3v1h-3zM106 214h1v1h-1zM3 215h1v1h-1zM9 215h1v1h-1zM12 215h1v1h-1zM14 215h2v1h-2zM29 215h1v1h-1zM35 215h1v1h-1zM38 215h1v1h-1zM41 215h4v1h-4zM86 215h1v1h-1zM102 215h1v1h-1zM107 215h1v1h-1zM109 215h1v1h-1zM8 216h2v1h-2zM15 216h1v1h-1zM31 216h2v1h-2zM42 216h1v1h-1zM44 216h1v1h-1zM55 216h1v1h-1zM62 216h1v1h-1zM1 217h1v1h-1zM7 217h1v1h-1zM12 217h2v1h-2zM30 217h1v1h-1zM32 217h1v1h-1zM199 217h1v1h-1zM21 218h1v1h-1zM29 218h1v1h-1zM32 218h1v1h-1zM34 218h2v1h-2zM37 218h2v1h-2zM47 218h1v1h-1zM98 218h1v1h-1zM2 219h1v1h-1zM31 219h1v1h-1zM36 219h1v1h-1zM41 219h1v1h-1zM100 219h1v1h-1zM1 220h1v1h-1zM8 220h1v1h-1zM12 220h1v1h-1zM15 220h1v1h-1zM23 220h1v1h-1zM29 220h1v1h-1zM35 220h1v1h-1zM45 220h1v1h-1zM103 220h1v1h-1zM110 220h1v1h-1zM9 221h1v1h-1zM17 221h1v1h-1zM35 221h1v1h-1zM57 221h1v1h-1zM62 221h1v1h-1zM101 221h1v1h-1zM3 222h1v1h-1zM25 222h1v1h-1zM29 222h1v1h-1zM42 222h1v1h-1zM112 222h1v1h-1zM25 223h1v1h-1zM39 223h1v1h-1zM45 223h1v1h-1zM16 224h1v1h-1zM18 224h3v1h-3zM23 224h1v1h-1zM62 224h1v1h-1zM16 225h3v1h-3zM20 225h2v1h-2zM23 225h1v1h-1zM29 225h1v1h-1zM38 225h1v1h-1zM60 225h1v1h-1zM19 226h5v1h-5zM47 226h1v1h-1zM13 227h1v1h-1zM20 227h5v1h-5zM27 227h1v1h-1zM30 227h1v1h-1zM53 227h1v1h-1zM55 227h1v1h-1zM16 228h2v1h-2zM21 228h1v1h-1zM25 228h1v1h-1zM56 228h3v1h-3zM60 228h1v1h-1zM63 228h1v1h-1zM3 229h1v1h-1zM7 229h1v1h-1zM16 229h3v1h-3zM20 229h1v1h-1zM22 229h2v1h-2zM53 229h1v1h-1zM58 229h2v1h-2zM61 229h1v1h-1zM63 229h1v1h-1zM108 229h1v1h-1zM182 229h1v1h-1zM0 230h1v1h-1zM22 230h1v1h-1zM27 230h1v1h-1zM29 230h1v1h-1zM37 230h1v1h-1zM57 230h2v1h-2zM63 230h1v1h-1zM145 230h1v1h-1zM8 231h1v1h-1zM10 231h1v1h-1zM12 231h2v1h-2zM15 231h1v1h-1zM47 231h1v1h-1zM57 231h3v1h-3zM88 231h1v1h-1zM9 232h1v1h-1zM16 232h1v1h-1zM23 232h1v1h-1zM60 232h1v1h-1zM62 232h2v1h-2zM6 233h1v1h-1zM11 233h4v1h-4zM16 233h1v1h-1zM18 233h1v1h-1zM42 233h1v1h-1zM52 233h1v1h-1zM58 233h2v1h-2zM61 233h3v1h-3zM9 234h4v1h-4zM15 234h1v1h-1zM18 234h1v1h-1zM30 234h1v1h-1zM35 234h1v1h-1zM40 234h1v1h-1zM47 234h1v1h-1zM58 234h3v1h-3zM62 234h1v1h-1zM67 234h1v1h-1zM83 234h1v1h-1zM152 234h1v1h-1zM250 234h1v1h-1zM0 235h1v1h-1zM5 235h2v1h-2zM10 235h3v1h-3zM15 235h2v1h-2zM32 235h1v1h-1zM50 235h1v1h-1zM60 235h4v1h-4zM71 235h1v1h-1zM3 236h1v1h-1zM8 236h3v1h-3zM12 236h1v1h-1zM19 236h1v1h-1zM26 236h1v1h-1zM49 236h1v1h-1zM51 236h1v1h-1zM57 236h3v1h-3zM10 237h3v1h-3zM14 237h1v1h-1zM25 237h1v1h-1zM27 237h1v1h-1zM42 237h1v1h-1zM48 237h3v1h-3zM52 237h1v1h-1zM56 237h3v1h-3zM60 237h2v1h-2zM63 237h1v1h-1zM2 238h1v1h-1zM11 238h1v1h-1zM13 238h3v1h-3zM25 238h1v1h-1zM43 238h1v1h-1zM47 238h1v1h-1zM49 238h2v1h-2zM54 238h1v1h-1zM57 238h3v1h-3zM2 239h1v1h-1zM6 239h1v1h-1zM8 239h4v1h-4zM15 239h2v1h-2zM27 239h1v1h-1zM50 239h1v1h-1zM55 239h1v1h-1zM57 239h5v1h-5zM2 240h1v1h-1zM27 240h1v1h-1zM48 240h1v1h-1zM51 240h1v1h-1zM57 240h1v1h-1zM69 240h1v1h-1zM110 240h1v1h-1zM236 240h1v1h-1zM13 241h1v1h-1zM30 241h1v1h-1zM36 241h1v1h-1zM43 241h1v1h-1zM69 241h2v1h-2zM108 241h2v1h-2zM186 241h1v1h-1zM203 241h1v1h-1zM4 242h1v1h-1zM15 242h1v1h-1zM38 242h1v1h-1zM52 242h1v1h-1zM59 242h1v1h-1zM62 242h1v1h-1zM107 242h5v1h-5zM150 242h1v1h-1zM7 243h1v1h-1zM18 243h1v1h-1zM29 243h1v1h-1zM44 243h1v1h-1zM107 243h1v1h-1zM109 243h1v1h-1zM142 243h1v1h-1zM6 244h1v1h-1zM8 244h1v1h-1zM23 244h1v1h-1zM28 244h1v1h-1zM38 244h1v1h-1zM58 244h1v1h-1zM62 244h2v1h-2zM21 245h1v1h-1zM25 245h1v1h-1zM93 245h1v1h-1zM117 245h1v1h-1zM185 245h1v1h-1zM18 246h1v1h-1zM40 246h1v1h-1zM54 246h1v1h-1zM11 247h1v1h-1zM16 247h1v1h-1zM25 247h1v1h-1zM44 247h1v1h-1zM51 247h1v1h-1zM55 247h1v1h-1zM59 247h1v1h-1zM8 248h2v1h-2zM22 248h1v1h-1zM24 248h1v1h-1zM26 248h4v1h-4zM201 248h1v1h-1zM23 249h1v1h-1zM25 249h1v1h-1zM27 249h2v1h-2zM30 249h1v1h-1zM42 249h1v1h-1zM113 249h1v1h-1zM161 249h1v1h-1zM7 250h1v1h-1zM16 250h1v1h-1zM20 250h1v1h-1zM24 250h1v1h-1zM28 250h1v1h-1zM30 250h1v1h-1zM43 250h1v1h-1zM1 251h1v1h-1zM21 251h1v1h-1zM24 251h1v1h-1zM29 251h2v1h-2zM56 251h2v1h-2zM84 251h1v1h-1zM5 252h1v1h-1zM9 252h1v1h-1zM24 252h1v1h-1zM27 252h1v1h-1zM54 252h1v1h-1zM23 253h1v1h-1zM25 253h1v1h-1zM29 253h2v1h-2zM33 253h1v1h-1zM37 253h1v1h-1zM51 253h1v1h-1zM9 254h2v1h-2zM26 254h1v1h-1zM23 255h1v1h-1zM28 255h2v1h-2zM35 255h1v1h-1zM37 255h1v1h-1zM52 255h1v1h-1zM57 255h1v1h-1zM62 255h1v1h-1z"/><path fill="#0066ff" d="M107 23h1v1h-1zM67 54h2v1h-2zM69 55h1v1h-1zM38 57h1v1h-1zM75 58h1v1h-1zM78 60h1v1h-1zM79 63h1v1h-1zM137 65h1v1h-1zM231 67h1v1h-1zM206 71h1v1h-1zM141 74h1v1h-1zM218 75h1v1h-1zM223 76h1v1h-1zM140 81h1v1h-1zM160 83h1v1h-1zM203 83h1v1h-1zM248 86h1v1h-1zM133 89h1v1h-1zM223 95h1v1h-1zM238 96h1v1h-1zM232 97h1v1h-1zM245 98h1v1h-1zM249 98h1v1h-1zM234 100h2v1h-2zM255 102h1v1h-1zM232 103h1v1h-1zM240 103h1v1h-1zM254 105h1v1h-1zM66 106h1v1h-1zM253 107h1v1h-1zM75 108h1v1h-1zM249 108h1v1h-1zM252 108h1v1h-1zM76 110h1v1h-1zM228 110h1v1h-1zM234 110h1v1h-1zM247 110h1v1h-1zM242 111h1v1h-1zM27 112h1v1h-1zM247 112h1v1h-1zM253 112h1v1h-1zM77 113h1v1h-1zM124 113h1v1h-1zM153 113h1v1h-1zM159 113h1v1h-1zM234 113h1v1h-1zM241 113h1v1h-1zM247 113h1v1h-1zM147 114h1v1h-1zM153 114h1v1h-1zM157 114h1v1h-1zM245 114h1v1h-1zM27 115h1v1h-1zM130 115h1v1h-1zM133 115h1v1h-1zM241 115h1v1h-1zM243 115h1v1h-1zM246 115h1v1h-1zM25 116h1v1h-1zM149 116h1v1h-1zM155 116h1v1h-1zM149 117h1v1h-1zM238 117h1v1h-1zM149 118h1v1h-1zM139 119h1v1h-1zM228 119h1v1h-1zM230 119h1v1h-1zM130 120h1v1h-1zM139 120h1v1h-1zM149 120h1v1h-1zM226 120h1v1h-1zM252 120h1v1h-1zM254 121h2v1h-2zM236 122h1v1h-1zM143 123h1v1h-1zM226 123h1v1h-1zM135 124h1v1h-1zM137 124h1v1h-1zM234 124h1v1h-1zM135 125h1v1h-1zM140 125h2v1h-2zM252 126h1v1h-1zM233 127h1v1h-1zM239 127h1v1h-1zM227 128h1v1h-1zM134 129h1v1h-1zM234 129h1v1h-1zM245 130h1v1h-1zM133 132h1v1h-1zM232 132h1v1h-1zM238 133h1v1h-1zM237 134h1v1h-1zM248 135h1v1h-1zM255 137h1v1h-1zM235 141h1v1h-1zM250 142h1v1h-1zM228 144h1v1h-1zM125 146h1v1h-1zM254 146h1v1h-1zM84 152h1v1h-1zM177 153h1v1h-1zM142 155h1v1h-1zM33 158h1v1h-1zM82 158h1v1h-1zM73 161h1v1h-1zM235 164h1v1h-1zM190 166h1v1h-1zM16 171h1v1h-1zM12 172h1v1h-1zM234 175h1v1h-1zM244 180h1v1h-1zM253 184h1v1h-1zM126 188h1v1h-1zM52 189h1v1h-1zM30 190h1v1h-1zM249 190h1v1h-1zM54 191h1v1h-1zM14 192h1v1h-1zM166 194h1v1h-1zM247 194h1v1h-1zM0 195h1v1h-1zM12 195h1v1h-1zM34 196h1v1h-1zM15 198h1v1h-1zM47 200h1v1h-1zM37 202h1v1h-1zM6 206h1v1h-1zM54 206h1v1h-1zM103 207h1v1h-1zM162 208h1v1h-1zM61 209h1v1h-1zM37 210h1v1h-1zM97 210h1v1h-1zM36 213h1v1h-1zM63 214h1v1h-1zM57 215h1v1h-1zM108 215h1v1h-1zM97 216h1v1h-1zM11 217h1v1h-1zM18 217h1v1h-1zM59 217h1v1h-1zM63 217h1v1h-1zM22 219h1v1h-1zM26 219h1v1h-1zM128 221h1v1h-1zM22 222h1v1h-1zM41 222h1v1h-1zM2 223h1v1h-1zM46 223h1v1h-1zM55 223h1v1h-1zM36 224h1v1h-1zM49 224h1v1h-1zM48 225h1v1h-1zM46 227h1v1h-1zM159 227h1v1h-1zM44 229h1v1h-1zM252 233h2v1h-2zM46 234h1v1h-1zM56 239h1v1h-1zM25 243h1v1h-1zM17 244h1v1h-1zM20 245h1v1h-1zM85 246h1v1h-1zM15 247h1v1h-1zM5 249h2v1h-2zM22 250h1v1h-1zM44 250h1v1h-1zM31 252h1v1h-1zM38 252h1v1h-1zM196 253h1v1h-1zM33 254h1v1h-1zM228 255h1v1h-1z"/><path fill="#00ccff" d="M185 52h1v1h-1zM73 53h1v1h-1zM227 72h1v1h-1zM130 93h1v1h-1zM252 96h1v1h-1zM231 101h1v1h-1zM65 102h1v1h-1zM177 104h1v1h-1zM234 107h1v1h-1zM66 108h1v1h-1zM234 109h1v1h-1zM125 110h1v1h-1zM248 111h1v1h-1zM124 112h1v1h-1zM244 112h1v1h-1zM145 114h2v1h-2zM20 115h1v1h-1zM253 115h1v1h-1zM233 116h1v1h-1zM130 117h1v1h-1zM231 117h1v1h-1zM236 117h1v1h-1zM248 117h1v1h-1zM32 118h1v1h-1zM226 119h1v1h-1zM246 120h1v1h-1zM137 121h1v1h-1zM246 123h1v1h-1zM231 124h1v1h-1zM232 134h1v1h-1zM229 136h1v1h-1zM240 143h1v1h-1zM245 143h1v1h-1zM233 155h1v1h-1zM81 157h1v1h-1zM175 160h1v1h-1zM23 164h1v1h-1zM46 166h1v1h-1zM236 171h1v1h-1zM246 185h1v1h-1zM218 188h1v1h-1zM171 190h1v1h-1zM65 193h1v1h-1zM44 194h1v1h-1zM43 201h1v1h-1zM48 202h1v1h-1zM0 203h1v1h-1zM101 209h1v1h-1zM104 209h1v1h-1zM17 212h1v1h-1zM99 212h1v1h-1zM20 214h1v1h-1zM107 217h1v1h-1zM22 218h1v1h-1zM18 221h1v1h-1zM9 229h1v1h-1zM47 229h1v1h-1zM209 245h1v1h-1zM60 247h1v1h-1zM36 250h1v1h-1zM43 251h1v1h-1zM16 253h1v1h-1zM177 253h1v1h-1z"/><path fill="#0099ff" d="M17 3h1v1h-1zM146 24h1v1h-1zM67 49h1v1h-1zM200 68h1v1h-1zM203 68h1v1h-1zM120 76h1v1h-1zM202 77h1v1h-1zM217 77h2v1h-2zM143 78h1v1h-1zM154 81h1v1h-1zM135 83h1v1h-1zM138 83h1v1h-1zM109 90h1v1h-1zM238 93h1v1h-1zM231 96h1v1h-1zM240 97h1v1h-1zM234 98h1v1h-1zM251 100h1v1h-1zM80 101h1v1h-1zM226 102h1v1h-1zM244 105h1v1h-1zM227 106h1v1h-1zM242 106h1v1h-1zM69 110h1v1h-1zM236 110h1v1h-1zM129 112h1v1h-1zM233 112h1v1h-1zM229 114h1v1h-1zM224 115h1v1h-1zM133 116h1v1h-1zM250 116h1v1h-1zM142 118h1v1h-1zM154 120h1v1h-1zM128 121h1v1h-1zM238 121h1v1h-1zM135 123h1v1h-1zM240 123h1v1h-1zM154 124h1v1h-1zM248 126h1v1h-1zM224 130h1v1h-1zM230 134h1v1h-1zM123 135h1v1h-1zM79 139h1v1h-1zM245 141h1v1h-1zM248 141h1v1h-1zM237 144h1v1h-1zM186 155h1v1h-1zM5 157h1v1h-1zM251 158h1v1h-1zM223 162h1v1h-1zM18 163h1v1h-1zM26 163h1v1h-1zM89 166h1v1h-1zM191 168h1v1h-1zM221 169h1v1h-1zM241 173h1v1h-1zM15 175h1v1h-1zM144 181h1v1h-1zM146 182h1v1h-1zM144 185h1v1h-1zM166 190h1v1h-1zM56 192h1v1h-1zM11 197h1v1h-1zM1 200h1v1h-1zM54 202h1v1h-1zM28 208h1v1h-1zM38 212h1v1h-1zM49 214h1v1h-1zM2 215h1v1h-1zM1 218h1v1h-1zM26 220h1v1h-1zM31 221h1v1h-1zM13 222h1v1h-1zM54 222h1v1h-1zM170 225h1v1h-1zM29 229h1v1h-1zM17 230h1v1h-1zM18 232h1v1h-1zM216 232h1v1h-1zM50 241h1v1h-1zM53 241h1v1h-1zM55 241h1v1h-1zM50 242h1v1h-1zM33 243h1v1h-1zM22 244h1v1h-1zM48 244h1v1h-1zM129 244h1v1h-1zM14 245h1v1h-1zM44 245h1v1h-1zM91 247h1v1h-1zM39 250h1v1h-1zM6 253h1v1h-1z"/><path fill="#99ff00" d="M14 61h1v1h-1zM75 62h1v1h-1zM74 63h1v1h-1zM223 68h1v1h-1zM165 72h1v1h-1zM129 77h1v1h-1zM129 80h1v1h-1zM244 81h1v1h-1zM144 88h1v1h-1zM117 90h1v1h-1zM226 98h1v1h-1zM77 99h1v1h-1zM253 100h1v1h-1zM151 104h1v1h-1zM244 106h1v1h-1zM73 107h1v1h-1zM249 107h1v1h-1zM175 110h1v1h-1zM32 111h1v1h-1zM135 112h1v1h-1zM236 112h1v1h-1zM130 113h1v1h-1zM137 114h1v1h-1zM236 115h1v1h-1zM223 116h1v1h-1zM223 117h1v1h-1zM131 118h1v1h-1zM240 118h1v1h-1zM254 119h1v1h-1zM224 120h1v1h-1zM225 123h1v1h-1zM130 124h1v1h-1zM229 124h1v1h-1zM230 126h1v1h-1zM231 134h1v1h-1zM239 140h1v1h-1zM248 142h1v1h-1zM94 147h1v1h-1zM83 155h1v1h-1zM225 157h1v1h-1zM97 160h1v1h-1zM20 164h1v1h-1zM123 165h1v1h-1zM9 168h1v1h-1zM240 173h1v1h-1zM252 181h1v1h-1zM247 186h1v1h-1zM25 189h1v1h-1zM246 190h1v1h-1zM14 194h1v1h-1zM22 201h1v1h-1zM56 202h1v1h-1zM52 204h1v1h-1zM108 206h1v1h-1zM1 209h1v1h-1zM56 212h1v1h-1zM132 212h1v1h-1zM10 213h1v1h-1zM34 225h1v1h-1zM194 225h1v1h-1zM31 228h1v1h-1zM240 236h1v1h-1zM45 237h1v1h-1zM28 240h1v1h-1zM56 242h1v1h-1zM50 244h1v1h-1z"/><path fill="#0000ff" d="M130 0h1v1h-1zM109 25h1v1h-1zM105 27h1v1h-1zM25 28h1v1h-1zM109 28h1v1h-1zM237 41h1v1h-1zM8 49h1v1h-1zM73 50h1v1h-1zM7 51h1v1h-1zM68 51h1v1h-1zM70 51h1v1h-1zM7 52h1v1h-1zM68 52h1v1h-1zM71 53h1v1h-1zM116 53h1v1h-1zM70 54h1v1h-1zM79 54h1v1h-1zM229 54h1v1h-1zM8 55h1v1h-1zM70 55h1v1h-1zM79 55h1v1h-1zM108 55h1v1h-1zM71 57h1v1h-1zM3 58h1v1h-1zM72 59h1v1h-1zM106 59h1v1h-1zM129 62h1v1h-1zM12 63h1v1h-1zM76 63h1v1h-1zM128 63h1v1h-1zM4 64h1v1h-1zM77 64h1v1h-1zM236 64h1v1h-1zM150 65h1v1h-1zM133 67h1v1h-1zM165 67h1v1h-1zM192 68h1v1h-1zM214 68h1v1h-1zM221 68h1v1h-1zM223 69h1v1h-1zM190 70h1v1h-1zM231 70h1v1h-1zM88 71h1v1h-1zM187 71h1v1h-1zM134 72h1v1h-1zM174 72h1v1h-1zM210 72h1v1h-1zM224 72h1v1h-1zM18 73h1v1h-1zM148 74h1v1h-1zM219 74h1v1h-1zM171 76h1v1h-1zM199 76h2v1h-2zM240 76h1v1h-1zM230 77h1v1h-1zM221 78h1v1h-1zM125 79h1v1h-1zM218 79h1v1h-1zM227 79h1v1h-1zM131 80h2v1h-2zM196 82h1v1h-1zM137 83h1v1h-1zM140 84h1v1h-1zM74 85h1v1h-1zM156 85h1v1h-1zM128 86h1v1h-1zM222 88h1v1h-1zM138 89h1v1h-1zM203 89h1v1h-1zM236 89h1v1h-1zM204 90h1v1h-1zM233 90h1v1h-1zM129 92h1v1h-1zM228 92h1v1h-1zM54 93h1v1h-1zM135 95h1v1h-1zM224 95h1v1h-1zM249 95h1v1h-1zM252 95h1v1h-1zM255 95h1v1h-1zM77 96h2v1h-2zM226 96h1v1h-1zM236 96h1v1h-1zM72 97h1v1h-1zM231 97h1v1h-1zM225 98h1v1h-1zM235 98h1v1h-1zM248 98h1v1h-1zM236 99h1v1h-1zM238 99h1v1h-1zM69 100h2v1h-2zM75 100h2v1h-2zM78 100h1v1h-1zM224 100h1v1h-1zM230 100h3v1h-3zM241 101h2v1h-2zM252 101h1v1h-1zM67 102h1v1h-1zM69 102h1v1h-1zM228 102h1v1h-1zM72 103h2v1h-2zM203 103h1v1h-1zM239 103h1v1h-1zM242 103h1v1h-1zM252 103h1v1h-1zM236 104h1v1h-1zM243 104h1v1h-1zM252 104h1v1h-1zM71 105h1v1h-1zM238 105h1v1h-1zM240 105h1v1h-1zM242 105h1v1h-1zM246 105h1v1h-1zM228 106h1v1h-1zM230 106h1v1h-1zM236 106h1v1h-1zM245 106h1v1h-1zM29 107h1v1h-1zM247 107h1v1h-1zM254 107h2v1h-2zM229 108h1v1h-1zM68 109h2v1h-2zM93 109h1v1h-1zM231 109h1v1h-1zM237 109h1v1h-1zM239 109h1v1h-1zM244 109h1v1h-1zM246 109h1v1h-1zM249 109h1v1h-1zM21 110h1v1h-1zM241 110h1v1h-1zM254 110h1v1h-1zM25 111h1v1h-1zM72 111h1v1h-1zM74 111h1v1h-1zM126 111h1v1h-1zM246 111h1v1h-1zM253 111h1v1h-1zM71 112h2v1h-2zM131 112h1v1h-1zM154 112h1v1h-1zM227 112h1v1h-1zM229 112h1v1h-1zM240 112h1v1h-1zM242 112h1v1h-1zM246 112h1v1h-1zM251 112h1v1h-1zM66 113h1v1h-1zM68 113h1v1h-1zM145 113h1v1h-1zM228 113h1v1h-1zM244 113h1v1h-1zM18 114h1v1h-1zM25 114h1v1h-1zM123 114h1v1h-1zM140 114h1v1h-1zM149 114h1v1h-1zM155 114h1v1h-1zM243 114h1v1h-1zM247 114h1v1h-1zM28 115h1v1h-1zM31 115h1v1h-1zM144 115h1v1h-1zM154 115h2v1h-2zM223 115h1v1h-1zM226 115h1v1h-1zM252 115h1v1h-1zM254 115h1v1h-1zM20 116h1v1h-1zM126 116h1v1h-1zM157 116h1v1h-1zM165 116h1v1h-1zM228 116h2v1h-2zM237 116h1v1h-1zM243 116h1v1h-1zM134 117h1v1h-1zM157 117h1v1h-1zM225 117h1v1h-1zM229 117h1v1h-1zM235 117h1v1h-1zM23 118h1v1h-1zM27 118h1v1h-1zM224 118h1v1h-1zM244 118h1v1h-1zM253 118h1v1h-1zM255 118h1v1h-1zM147 119h1v1h-1zM150 119h1v1h-1zM233 119h2v1h-2zM236 119h1v1h-1zM27 120h1v1h-1zM29 120h1v1h-1zM239 120h1v1h-1zM241 120h2v1h-2zM251 120h1v1h-1zM148 121h1v1h-1zM224 121h1v1h-1zM227 121h1v1h-1zM235 121h1v1h-1zM241 121h1v1h-1zM243 121h1v1h-1zM134 122h1v1h-1zM147 122h1v1h-1zM174 122h1v1h-1zM230 122h1v1h-1zM232 122h1v1h-1zM242 122h1v1h-1zM244 122h1v1h-1zM18 123h1v1h-1zM25 123h1v1h-1zM133 123h1v1h-1zM145 123h1v1h-1zM148 123h1v1h-1zM151 123h1v1h-1zM158 123h1v1h-1zM227 123h1v1h-1zM239 123h1v1h-1zM252 123h1v1h-1zM128 124h1v1h-1zM149 124h1v1h-1zM227 124h1v1h-1zM235 124h2v1h-2zM241 124h1v1h-1zM246 124h1v1h-1zM252 124h2v1h-2zM22 125h1v1h-1zM149 125h1v1h-1zM159 125h1v1h-1zM228 125h1v1h-1zM240 125h1v1h-1zM243 125h1v1h-1zM250 125h1v1h-1zM140 126h1v1h-1zM227 126h2v1h-2zM241 126h1v1h-1zM253 126h1v1h-1zM33 127h1v1h-1zM136 127h1v1h-1zM153 127h1v1h-1zM225 127h1v1h-1zM230 127h1v1h-1zM238 127h1v1h-1zM241 127h1v1h-1zM254 129h1v1h-1zM227 130h1v1h-1zM235 130h1v1h-1zM250 130h1v1h-1zM78 131h1v1h-1zM226 131h1v1h-1zM255 131h1v1h-1zM139 132h1v1h-1zM249 132h1v1h-1zM159 133h1v1h-1zM124 134h1v1h-1zM251 134h1v1h-1zM231 136h1v1h-1zM235 136h1v1h-1zM238 136h1v1h-1zM238 137h1v1h-1zM250 137h1v1h-1zM230 138h1v1h-1zM235 138h1v1h-1zM248 138h1v1h-1zM253 138h1v1h-1zM234 141h1v1h-1zM243 141h1v1h-1zM228 142h1v1h-1zM235 142h1v1h-1zM110 143h1v1h-1zM158 143h1v1h-1zM224 144h1v1h-1zM242 144h1v1h-1zM223 145h1v1h-1zM226 145h1v1h-1zM246 145h1v1h-1zM236 148h1v1h-1zM7 149h1v1h-1zM227 151h1v1h-1zM228 154h1v1h-1zM229 155h1v1h-1zM86 156h1v1h-1zM128 157h1v1h-1zM99 158h1v1h-1zM226 158h1v1h-1zM237 158h1v1h-1zM18 160h1v1h-1zM234 160h2v1h-2zM17 161h1v1h-1zM30 161h1v1h-1zM143 161h1v1h-1zM242 162h1v1h-1zM243 163h1v1h-1zM30 164h1v1h-1zM237 164h1v1h-1zM35 165h1v1h-1zM27 166h1v1h-1zM230 166h1v1h-1zM141 167h1v1h-1zM24 168h1v1h-1zM70 168h1v1h-1zM29 169h1v1h-1zM225 170h1v1h-1zM12 174h1v1h-1zM10 175h1v1h-1zM3 176h1v1h-1zM118 176h1v1h-1zM225 176h1v1h-1zM255 181h1v1h-1zM151 182h1v1h-1zM71 183h1v1h-1zM77 184h1v1h-1zM241 184h1v1h-1zM244 184h1v1h-1zM242 185h1v1h-1zM255 185h1v1h-1zM243 186h2v1h-2zM246 186h1v1h-1zM221 187h1v1h-1zM246 188h1v1h-1zM46 189h1v1h-1zM243 189h1v1h-1zM9 190h1v1h-1zM144 191h1v1h-1zM7 193h1v1h-1zM246 193h1v1h-1zM248 193h1v1h-1zM255 193h1v1h-1zM10 194h1v1h-1zM55 194h1v1h-1zM3 195h1v1h-1zM6 195h1v1h-1zM13 196h1v1h-1zM5 197h1v1h-1zM12 198h1v1h-1zM9 199h1v1h-1zM12 199h1v1h-1zM41 199h1v1h-1zM48 199h1v1h-1zM43 200h1v1h-1zM58 200h1v1h-1zM7 201h1v1h-1zM48 201h1v1h-1zM5 202h1v1h-1zM18 202h1v1h-1zM33 202h1v1h-1zM44 202h1v1h-1zM60 202h1v1h-1zM15 204h1v1h-1zM180 204h1v1h-1zM29 205h1v1h-1zM35 205h1v1h-1zM12 207h1v1h-1zM54 207h1v1h-1zM218 207h1v1h-1zM36 208h1v1h-1zM48 208h1v1h-1zM206 208h1v1h-1zM82 209h1v1h-1zM106 209h1v1h-1zM1 210h1v1h-1zM32 210h1v1h-1zM56 210h1v1h-1zM60 211h1v1h-1zM57 212h1v1h-1zM235 212h1v1h-1zM24 213h1v1h-1zM203 213h1v1h-1zM11 214h1v1h-1zM27 214h1v1h-1zM54 214h1v1h-1zM112 214h1v1h-1zM104 215h1v1h-1zM203 215h1v1h-1zM22 216h1v1h-1zM25 217h1v1h-1zM195 217h1v1h-1zM17 218h1v1h-1zM24 218h1v1h-1zM40 218h1v1h-1zM59 218h1v1h-1zM198 218h1v1h-1zM12 219h1v1h-1zM29 219h1v1h-1zM7 220h1v1h-1zM28 220h1v1h-1zM30 220h1v1h-1zM43 220h1v1h-1zM37 221h1v1h-1zM44 221h1v1h-1zM51 221h1v1h-1zM8 222h2v1h-2zM50 222h1v1h-1zM205 222h1v1h-1zM18 223h1v1h-1zM23 223h1v1h-1zM5 225h1v1h-1zM24 225h1v1h-1zM32 225h1v1h-1zM49 225h1v1h-1zM53 225h1v1h-1zM43 226h1v1h-1zM50 226h1v1h-1zM73 226h1v1h-1zM183 226h1v1h-1zM57 227h1v1h-1zM10 229h1v1h-1zM56 229h1v1h-1zM23 230h1v1h-1zM2 231h1v1h-1zM20 231h1v1h-1zM33 231h1v1h-1zM38 231h1v1h-1zM33 232h1v1h-1zM42 232h1v1h-1zM23 233h1v1h-1zM175 233h1v1h-1zM17 234h1v1h-1zM33 234h1v1h-1zM51 234h1v1h-1zM23 235h1v1h-1zM25 235h1v1h-1zM52 235h1v1h-1zM23 236h1v1h-1zM28 236h1v1h-1zM40 236h1v1h-1zM131 236h1v1h-1zM247 236h1v1h-1zM2 237h1v1h-1zM26 237h1v1h-1zM46 237h1v1h-1zM79 237h1v1h-1zM250 237h1v1h-1zM17 238h2v1h-2zM36 238h1v1h-1zM44 238h1v1h-1zM97 238h1v1h-1zM70 239h1v1h-1zM169 239h1v1h-1zM37 240h1v1h-1zM59 241h1v1h-1zM91 241h1v1h-1zM26 242h1v1h-1zM249 242h1v1h-1zM12 243h1v1h-1zM57 243h2v1h-2zM2 244h1v1h-1zM14 244h1v1h-1zM158 244h1v1h-1zM23 245h1v1h-1zM82 245h1v1h-1zM15 246h1v1h-1zM29 246h1v1h-1zM36 246h1v1h-1zM59 246h1v1h-1zM90 246h1v1h-1zM6 247h1v1h-1zM40 247h1v1h-1zM50 247h1v1h-1zM61 247h1v1h-1zM38 248h1v1h-1zM49 248h1v1h-1zM36 249h1v1h-1zM130 249h1v1h-1zM31 250h1v1h-1zM67 250h1v1h-1zM5 251h1v1h-1zM17 251h1v1h-1zM58 251h1v1h-1zM68 251h1v1h-1zM58 252h1v1h-1zM72 252h1v1h-1zM219 252h1v1h-1zM47 253h1v1h-1zM65 253h1v1h-1zM45 255h1v1h-1z"/><path fill="#66ff00" d="M79 56h1v1h-1zM128 89h1v1h-1zM65 97h1v1h-1zM224 97h1v1h-1zM247 97h1v1h-1zM236 102h1v1h-1zM251 103h1v1h-1zM73 108h1v1h-1zM72 109h1v1h-1zM250 109h1v1h-1zM69 112h1v1h-1zM133 117h1v1h-1zM147 117h1v1h-1zM223 118h1v1h-1zM240 121h1v1h-1zM149 122h1v1h-1zM236 123h1v1h-1zM250 127h1v1h-1zM228 130h1v1h-1zM252 132h1v1h-1zM158 141h1v1h-1zM230 146h1v1h-1zM42 161h1v1h-1zM24 167h1v1h-1zM211 187h1v1h-1zM42 205h1v1h-1zM3 212h1v1h-1zM99 213h1v1h-1zM1 215h1v1h-1zM22 215h1v1h-1zM19 221h1v1h-1zM29 228h1v1h-1zM243 242h1v1h-1zM14 251h1v1h-1z"/><path fill="#ffcc00" d="M128 2h1v1h-1zM65 55h1v1h-1zM200 56h1v1h-1zM118 66h1v1h-1zM228 69h1v1h-1zM130 76h1v1h-1zM188 81h1v1h-1zM123 82h1v1h-1zM181 83h1v1h-1zM218 87h1v1h-1zM236 90h1v1h-1zM109 91h1v1h-1zM228 97h1v1h-1zM227 98h1v1h-1zM84 103h1v1h-1zM237 103h1v1h-1zM79 107h1v1h-1zM251 107h1v1h-1zM244 111h1v1h-1zM144 112h1v1h-1zM225 112h1v1h-1zM225 114h1v1h-1zM160 116h1v1h-1zM232 117h1v1h-1zM141 120h1v1h-1zM171 120h1v1h-1zM236 120h1v1h-1zM255 120h1v1h-1zM129 121h1v1h-1zM133 121h1v1h-1zM145 122h1v1h-1zM246 143h1v1h-1zM221 160h1v1h-1zM99 163h1v1h-1zM168 163h1v1h-1zM33 165h1v1h-1zM2 166h1v1h-1zM242 167h1v1h-1zM238 168h1v1h-1zM28 169h1v1h-1zM226 172h1v1h-1zM243 193h1v1h-1zM23 195h1v1h-1zM36 200h1v1h-1zM38 202h1v1h-1zM45 205h1v1h-1zM56 206h1v1h-1zM186 216h1v1h-1zM55 218h1v1h-1zM40 219h1v1h-1zM96 221h1v1h-1zM81 237h1v1h-1zM115 239h1v1h-1zM168 241h1v1h-1zM14 246h1v1h-1zM14 249h1v1h-1zM178 252h1v1h-1z"/><path fill="#ff6600" d="M72 49h1v1h-1zM77 52h1v1h-1zM74 56h1v1h-1zM79 58h1v1h-1zM242 75h1v1h-1zM133 78h1v1h-1zM100 79h1v1h-1zM138 79h1v1h-1zM219 80h1v1h-1zM237 81h1v1h-1zM141 85h1v1h-1zM162 85h1v1h-1zM200 86h1v1h-1zM242 90h1v1h-1zM246 95h1v1h-1zM227 97h1v1h-1zM243 97h1v1h-1zM244 98h1v1h-1zM236 100h1v1h-1zM253 102h1v1h-1zM70 105h1v1h-1zM236 105h1v1h-1zM171 107h1v1h-1zM245 109h1v1h-1zM227 110h1v1h-1zM245 110h1v1h-1zM132 112h1v1h-1zM138 113h1v1h-1zM156 113h1v1h-1zM230 113h1v1h-1zM232 113h1v1h-1zM255 113h1v1h-1zM228 114h1v1h-1zM231 114h1v1h-1zM132 115h1v1h-1zM124 116h1v1h-1zM140 116h1v1h-1zM145 116h1v1h-1zM148 116h1v1h-1zM139 117h1v1h-1zM226 117h1v1h-1zM243 117h1v1h-1zM249 117h1v1h-1zM129 118h1v1h-1zM156 118h1v1h-1zM132 119h1v1h-1zM151 119h1v1h-1zM154 119h1v1h-1zM131 120h1v1h-1zM146 120h1v1h-1zM158 122h1v1h-1zM225 122h1v1h-1zM254 122h1v1h-1zM133 124h1v1h-1zM141 124h1v1h-1zM132 125h1v1h-1zM224 125h1v1h-1zM133 126h1v1h-1zM152 126h1v1h-1zM232 126h1v1h-1zM237 126h1v1h-1zM144 127h2v1h-2zM154 127h1v1h-1zM226 132h1v1h-1zM235 133h1v1h-1zM224 134h1v1h-1zM254 135h1v1h-1zM250 136h1v1h-1zM229 138h1v1h-1zM172 140h1v1h-1zM70 143h1v1h-1zM239 147h1v1h-1zM102 152h1v1h-1zM202 154h1v1h-1zM228 156h1v1h-1zM9 159h1v1h-1zM22 161h1v1h-1zM118 165h1v1h-1zM21 167h1v1h-1zM35 170h1v1h-1zM100 173h1v1h-1zM67 176h1v1h-1zM249 182h1v1h-1zM255 184h1v1h-1zM144 189h1v1h-1zM13 190h1v1h-1zM213 190h1v1h-1zM114 192h1v1h-1zM250 192h1v1h-1zM7 206h1v1h-1zM2 209h1v1h-1zM19 210h1v1h-1zM162 210h1v1h-1zM231 211h1v1h-1zM17 215h1v1h-1zM99 218h1v1h-1zM202 219h1v1h-1zM57 224h1v1h-1zM206 224h1v1h-1zM25 230h1v1h-1zM38 237h1v1h-1zM59 244h1v1h-1zM32 245h1v1h-1zM4 247h1v1h-1zM84 247h1v1h-1zM8 251h1v1h-1zM13 252h1v1h-1zM19 253h1v1h-1zM38 253h1v1h-1zM35 254h1v1h-1zM53 254h1v1h-1z"/><path fill="#ff9900" d="M27 30h1v1h-1zM117 56h1v1h-1zM75 57h1v1h-1zM139 76h1v1h-1zM219 76h1v1h-1zM136 85h1v1h-1zM76 98h1v1h-1zM243 99h1v1h-1zM234 101h1v1h-1zM251 101h1v1h-1zM226 106h1v1h-1zM74 109h1v1h-1zM65 110h1v1h-1zM141 113h1v1h-1zM160 113h1v1h-1zM159 114h1v1h-1zM255 116h1v1h-1zM159 117h1v1h-1zM152 118h1v1h-1zM158 118h1v1h-1zM175 118h1v1h-1zM246 118h1v1h-1zM146 127h1v1h-1zM223 138h1v1h-1zM75 145h1v1h-1zM138 152h1v1h-1zM29 163h1v1h-1zM153 168h1v1h-1zM30 172h1v1h-1zM241 175h1v1h-1zM212 177h1v1h-1zM5 181h1v1h-1zM43 196h1v1h-1zM6 198h1v1h-1zM14 200h1v1h-1zM46 202h1v1h-1zM2 217h1v1h-1zM56 220h1v1h-1zM104 221h1v1h-1zM69 224h1v1h-1zM254 233h1v1h-1zM20 237h1v1h-1zM217 237h1v1h-1zM41 240h1v1h-1zM20 249h1v1h-1z"/><path fill="#ff0000" d="M108 26h1v1h-1zM27 32h1v1h-1zM74 52h1v1h-1zM76 54h1v1h-1zM80 56h1v1h-1zM78 58h1v1h-1zM77 59h1v1h-1zM67 60h1v1h-1zM66 62h1v1h-1zM74 64h1v1h-1zM187 66h1v1h-1zM102 72h1v1h-1zM129 73h1v1h-1zM128 74h1v1h-1zM162 78h1v1h-1zM240 79h1v1h-1zM220 83h2v1h-2zM130 87h1v1h-1zM132 87h1v1h-1zM227 87h1v1h-1zM140 89h1v1h-1zM137 94h1v1h-1zM131 95h1v1h-1zM238 97h1v1h-1zM251 99h1v1h-1zM233 100h1v1h-1zM239 100h1v1h-1zM249 100h1v1h-1zM225 101h1v1h-1zM248 102h1v1h-1zM233 103h1v1h-1zM235 103h1v1h-1zM243 103h1v1h-1zM228 104h1v1h-1zM230 107h1v1h-1zM242 107h1v1h-1zM233 108h2v1h-2zM240 108h1v1h-1zM242 108h1v1h-1zM241 109h1v1h-1zM247 109h1v1h-1zM224 110h1v1h-1zM243 111h1v1h-1zM251 111h1v1h-1zM123 112h1v1h-1zM140 112h1v1h-1zM231 112h1v1h-1zM131 113h1v1h-1zM149 113h1v1h-1zM158 113h1v1h-1zM229 113h1v1h-1zM129 114h1v1h-1zM131 115h1v1h-1zM135 115h1v1h-1zM147 115h1v1h-1zM231 116h1v1h-1zM234 116h1v1h-1zM252 116h1v1h-1zM150 117h1v1h-1zM152 117h1v1h-1zM158 117h1v1h-1zM133 118h1v1h-1zM136 118h1v1h-1zM142 120h1v1h-1zM145 120h1v1h-1zM147 120h1v1h-1zM156 120h1v1h-1zM160 120h1v1h-1zM230 120h1v1h-1zM240 120h1v1h-1zM141 121h1v1h-1zM145 121h1v1h-1zM151 121h1v1h-1zM252 121h1v1h-1zM128 122h1v1h-1zM139 122h2v1h-2zM150 122h1v1h-1zM231 122h1v1h-1zM29 123h1v1h-1zM138 123h1v1h-1zM144 123h1v1h-1zM230 124h1v1h-1zM233 124h1v1h-1zM144 125h1v1h-1zM226 125h1v1h-1zM244 125h1v1h-1zM154 126h1v1h-1zM238 126h1v1h-1zM135 127h1v1h-1zM139 127h2v1h-2zM159 127h1v1h-1zM229 127h1v1h-1zM233 130h1v1h-1zM251 132h1v1h-1zM226 135h1v1h-1zM248 136h1v1h-1zM251 138h1v1h-1zM236 139h1v1h-1zM230 141h1v1h-1zM252 141h1v1h-1zM236 142h1v1h-1zM226 144h1v1h-1zM252 144h1v1h-1zM238 145h1v1h-1zM232 146h1v1h-1zM193 158h1v1h-1zM119 159h1v1h-1zM10 160h1v1h-1zM87 168h1v1h-1zM247 171h1v1h-1zM240 172h1v1h-1zM99 173h1v1h-1zM158 184h1v1h-1zM51 190h1v1h-1zM15 192h1v1h-1zM50 193h1v1h-1zM128 197h1v1h-1zM28 207h1v1h-1zM6 209h1v1h-1zM53 209h1v1h-1zM4 210h1v1h-1zM39 216h1v1h-1zM201 220h1v1h-1zM36 222h1v1h-1zM48 223h1v1h-1zM105 223h1v1h-1zM54 232h1v1h-1zM82 233h1v1h-1zM150 233h1v1h-1zM86 234h1v1h-1zM40 243h1v1h-1zM35 245h1v1h-1zM54 248h1v1h-1zM46 250h1v1h-1zM2 251h1v1h-1zM21 252h1v1h-1zM14 253h1v1h-1z"/><path fill="#ffff00" d="M20 5h1v1h-1zM45 53h1v1h-1zM73 56h1v1h-1zM8 60h1v1h-1zM5 63h1v1h-1zM15 67h1v1h-1zM226 72h1v1h-1zM133 75h1v1h-1zM139 78h1v1h-1zM119 88h1v1h-1zM125 92h1v1h-1zM215 93h1v1h-1zM245 95h1v1h-1zM232 96h1v1h-1zM86 98h1v1h-1zM250 98h1v1h-1zM223 100h1v1h-1zM252 100h1v1h-1zM228 105h1v1h-1zM231 105h1v1h-1zM21 106h1v1h-1zM74 106h1v1h-1zM245 107h1v1h-1zM223 111h1v1h-1zM234 114h1v1h-1zM227 115h1v1h-1zM242 118h1v1h-1zM136 120h2v1h-2zM147 121h1v1h-1zM150 123h1v1h-1zM152 123h1v1h-1zM242 125h1v1h-1zM243 130h1v1h-1zM238 134h1v1h-1zM250 141h1v1h-1zM4 142h1v1h-1zM123 146h1v1h-1zM71 155h1v1h-1zM231 156h1v1h-1zM224 159h1v1h-1zM31 162h1v1h-1zM249 175h1v1h-1zM242 181h1v1h-1zM117 183h1v1h-1zM218 187h1v1h-1zM15 188h1v1h-1zM220 188h1v1h-1zM127 189h1v1h-1zM251 192h1v1h-1zM44 197h1v1h-1zM14 198h1v1h-1zM36 203h1v1h-1zM53 206h1v1h-1zM200 209h1v1h-1zM49 211h1v1h-1zM23 212h1v1h-1zM56 213h1v1h-1zM48 214h1v1h-1zM26 216h1v1h-1zM52 221h1v1h-1zM207 222h1v1h-1zM198 227h1v1h-1zM27 236h1v1h-1zM85 239h1v1h-1zM58 242h1v1h-1zM16 243h1v1h-1zM30 247h1v1h-1zM4 252h1v1h-1z"/><path fill="#ffffff" d="M78 49h1v1h-1zM75 59h1v1h-1zM204 65h1v1h-1zM126 66h1v1h-1zM184 72h1v1h-1zM140 78h1v1h-1zM207 78h1v1h-1zM125 81h1v1h-1zM138 90h1v1h-1zM227 96h1v1h-1zM240 96h1v1h-1zM22 97h1v1h-1zM71 97h1v1h-1zM247 98h1v1h-1zM232 101h1v1h-1zM240 104h1v1h-1zM250 107h1v1h-1zM74 108h1v1h-1zM174 110h1v1h-1zM253 110h1v1h-1zM255 111h1v1h-1zM153 112h1v1h-1zM151 113h1v1h-1zM245 113h1v1h-1zM136 115h1v1h-1zM145 115h1v1h-1zM240 116h1v1h-1zM245 116h1v1h-1zM143 117h1v1h-1zM230 117h1v1h-1zM247 117h1v1h-1zM141 118h1v1h-1zM150 118h1v1h-1zM247 118h1v1h-1zM22 120h1v1h-1zM231 120h1v1h-1zM237 120h1v1h-1zM234 122h2v1h-2zM157 123h1v1h-1zM133 125h1v1h-1zM146 125h2v1h-2zM223 125h1v1h-1zM139 126h1v1h-1zM151 126h1v1h-1zM229 126h1v1h-1zM242 127h1v1h-1zM222 135h1v1h-1zM237 135h1v1h-1zM236 136h1v1h-1zM244 136h1v1h-1zM252 137h1v1h-1zM239 142h1v1h-1zM228 146h1v1h-1zM10 157h1v1h-1zM202 159h1v1h-1zM236 159h1v1h-1zM27 163h1v1h-1zM13 171h1v1h-1zM28 171h1v1h-1zM238 173h1v1h-1zM236 182h1v1h-1zM19 189h1v1h-1zM18 193h1v1h-1zM113 198h1v1h-1zM7 200h1v1h-1zM46 200h1v1h-1zM45 206h1v1h-1zM30 207h1v1h-1zM17 213h1v1h-1zM14 220h1v1h-1zM4 224h1v1h-1zM13 226h1v1h-1zM36 226h1v1h-1zM6 228h1v1h-1zM10 230h1v1h-1zM40 231h1v1h-1zM5 234h1v1h-1zM251 234h1v1h-1zM8 243h1v1h-1zM22 245h1v1h-1zM146 245h1v1h-1zM20 248h1v1h-1zM50 248h1v1h-1zM22 249h1v1h-1zM6 252h1v1h-1zM215 252h1v1h-1zM5 253h1v1h-1zM31 253h1v1h-1z"/><path fill="#ccff00" d="M112 24h1v1h-1zM68 59h1v1h-1zM143 69h1v1h-1zM226 71h1v1h-1zM87 85h1v1h-1zM229 96h1v1h-1zM223 97h1v1h-1zM67 99h1v1h-1zM245 104h1v1h-1zM241 105h1v1h-1zM251 105h1v1h-1zM240 107h1v1h-1zM241 111h1v1h-1zM225 113h1v1h-1zM148 115h1v1h-1zM128 118h1v1h-1zM160 119h1v1h-1zM232 120h1v1h-1zM149 121h1v1h-1zM153 121h1v1h-1zM243 124h1v1h-1zM233 125h1v1h-1zM233 128h1v1h-1zM233 134h1v1h-1zM230 135h1v1h-1zM90 137h1v1h-1zM226 139h1v1h-1zM238 161h1v1h-1zM192 164h1v1h-1zM221 164h1v1h-1zM227 167h1v1h-1zM29 171h1v1h-1zM145 172h1v1h-1zM105 178h1v1h-1zM42 186h1v1h-1zM41 205h1v1h-1zM50 206h1v1h-1zM99 215h1v1h-1zM58 216h1v1h-1zM15 219h1v1h-1zM35 219h1v1h-1zM97 219h1v1h-1zM37 222h1v1h-1zM93 229h1v1h-1zM31 231h1v1h-1zM124 232h1v1h-1zM29 242h1v1h-1zM9 245h1v1h-1zM4 248h1v1h-1zM85 248h1v1h-1z"/><path fill="#ff3300" d="M22 3h1v1h-1zM196 52h1v1h-1zM9 57h1v1h-1zM12 57h1v1h-1zM185 57h1v1h-1zM74 58h1v1h-1zM9 60h1v1h-1zM76 61h1v1h-1zM70 62h1v1h-1zM139 62h1v1h-1zM122 69h1v1h-1zM132 72h1v1h-1zM140 73h1v1h-1zM164 74h1v1h-1zM220 77h1v1h-1zM247 77h1v1h-1zM134 78h1v1h-1zM172 78h1v1h-1zM95 79h1v1h-1zM135 79h1v1h-1zM138 80h1v1h-1zM140 80h1v1h-1zM175 80h1v1h-1zM140 86h1v1h-1zM130 88h1v1h-1zM136 88h1v1h-1zM165 90h1v1h-1zM141 92h1v1h-1zM74 93h1v1h-1zM68 98h1v1h-1zM226 99h1v1h-1zM231 99h1v1h-1zM241 99h1v1h-1zM247 99h1v1h-1zM242 100h1v1h-1zM74 101h1v1h-1zM247 101h1v1h-1zM249 101h1v1h-1zM250 103h1v1h-1zM247 105h1v1h-1zM73 106h1v1h-1zM232 106h1v1h-1zM248 106h1v1h-1zM177 107h1v1h-1zM249 110h1v1h-1zM30 111h1v1h-1zM177 111h1v1h-1zM240 111h1v1h-1zM136 112h1v1h-1zM139 112h1v1h-1zM241 112h1v1h-1zM132 113h1v1h-1zM143 113h1v1h-1zM146 113h1v1h-1zM237 113h1v1h-1zM248 113h1v1h-1zM143 114h1v1h-1zM235 115h1v1h-1zM131 116h1v1h-1zM137 116h1v1h-1zM139 116h1v1h-1zM143 116h1v1h-1zM27 117h1v1h-1zM228 117h1v1h-1zM240 117h1v1h-1zM24 118h1v1h-1zM235 118h1v1h-1zM241 118h1v1h-1zM254 118h1v1h-1zM138 119h1v1h-1zM149 119h1v1h-1zM245 119h1v1h-1zM132 120h1v1h-1zM134 120h1v1h-1zM157 120h1v1h-1zM152 121h1v1h-1zM234 121h1v1h-1zM133 122h1v1h-1zM143 122h2v1h-2zM148 122h1v1h-1zM224 122h1v1h-1zM137 123h1v1h-1zM253 123h1v1h-1zM131 124h1v1h-1zM152 124h1v1h-1zM158 124h1v1h-1zM160 124h1v1h-1zM136 125h1v1h-1zM151 125h1v1h-1zM158 125h1v1h-1zM241 125h1v1h-1zM158 126h1v1h-1zM233 126h1v1h-1zM130 127h1v1h-1zM143 127h1v1h-1zM156 127h1v1h-1zM234 127h1v1h-1zM249 127h1v1h-1zM224 131h1v1h-1zM228 131h1v1h-1zM239 131h1v1h-1zM243 136h1v1h-1zM231 137h1v1h-1zM77 138h1v1h-1zM175 143h1v1h-1zM233 144h1v1h-1zM81 155h1v1h-1zM33 156h1v1h-1zM23 157h1v1h-1zM199 160h1v1h-1zM228 160h1v1h-1zM7 164h1v1h-1zM102 164h1v1h-1zM190 164h1v1h-1zM60 166h1v1h-1zM23 167h1v1h-1zM10 168h1v1h-1zM226 168h1v1h-1zM87 172h1v1h-1zM155 172h1v1h-1zM131 173h1v1h-1zM221 173h1v1h-1zM252 173h1v1h-1zM36 174h1v1h-1zM252 180h1v1h-1zM196 181h1v1h-1zM197 183h1v1h-1zM145 184h1v1h-1zM43 185h1v1h-1zM247 187h1v1h-1zM119 191h1v1h-1zM229 191h1v1h-1zM6 193h1v1h-1zM37 201h1v1h-1zM63 203h1v1h-1zM54 204h1v1h-1zM61 204h1v1h-1zM65 205h1v1h-1zM10 206h1v1h-1zM7 209h1v1h-1zM13 209h1v1h-1zM98 209h1v1h-1zM55 211h1v1h-1zM27 212h1v1h-1zM5 215h1v1h-1zM56 216h1v1h-1zM38 217h1v1h-1zM26 218h1v1h-1zM95 220h1v1h-1zM11 221h1v1h-1zM174 221h1v1h-1zM206 222h1v1h-1zM40 223h1v1h-1zM103 224h1v1h-1zM203 225h1v1h-1zM43 229h1v1h-1zM35 230h1v1h-1zM35 232h1v1h-1zM49 232h1v1h-1zM252 232h1v1h-1zM54 234h1v1h-1zM35 237h1v1h-1zM32 239h1v1h-1zM36 239h1v1h-1zM61 240h1v1h-1zM18 242h1v1h-1zM7 244h1v1h-1zM75 244h1v1h-1zM34 245h1v1h-1zM31 247h1v1h-1zM7 249h1v1h-1zM19 249h1v1h-1z"/><!--M2e--></svg></div>
<div class="map" style="left:692px" id="m3"><svg width="256" height="256" viewBox="0 0 256 256" shape-rendering="crispEdges" style="display:block"><!--M3s--><path fill="#00ff00" d="M18 0h3v1h-3zM22 0h1v1h-1zM19 1h2v1h-2zM22 1h1v1h-1zM163 13h1v1h-1zM106 18h1v1h-1zM17 21h2v1h-2zM16 22h1v1h-1zM18 22h2v1h-2zM225 22h1v1h-1zM18 23h1v1h-1zM107 23h1v1h-1zM17 24h2v1h-2zM109 27h1v1h-1zM105 31h1v1h-1zM237 41h1v1h-1zM67 49h2v1h-2zM77 49h1v1h-1zM7 51h1v1h-1zM65 51h1v1h-1zM7 54h1v1h-1zM69 55h1v1h-1zM74 55h1v1h-1zM108 55h1v1h-1zM73 56h1v1h-1zM38 57h1v1h-1zM66 58h1v1h-1zM74 58h1v1h-1zM78 58h2v1h-2zM10 59h1v1h-1zM67 59h1v1h-1zM80 59h1v1h-1zM106 59h1v1h-1zM36 60h1v1h-1zM80 60h1v1h-1zM109 60h2v1h-2zM71 61h1v1h-1zM109 61h1v1h-1zM214 62h1v1h-1zM110 63h1v1h-1zM74 64h1v1h-1zM109 64h1v1h-1zM146 64h1v1h-1zM236 64h1v1h-1zM101 66h1v1h-1zM174 68h1v1h-1zM219 68h1v1h-1zM88 71h1v1h-1zM175 71h1v1h-1zM226 71h1v1h-1zM233 71h1v1h-1zM132 72h1v1h-1zM226 72h1v1h-1zM137 73h1v1h-1zM137 74h1v1h-1zM140 74h1v1h-1zM223 74h1v1h-1zM141 75h1v1h-1zM0 76h4v1h-4zM125 76h1v1h-1zM143 76h1v1h-1zM2 77h1v1h-1zM129 77h1v1h-1zM133 77h1v1h-1zM142 77h1v1h-1zM3 78h1v1h-1zM137 78h1v1h-1zM142 78h1v1h-1zM162 78h1v1h-1zM1 79h1v1h-1zM138 79h1v1h-1zM141 79h4v1h-4zM161 79h1v1h-1zM163 79h3v1h-3zM142 80h1v1h-1zM160 80h2v1h-2zM163 80h2v1h-2zM175 80h1v1h-1zM202 80h1v1h-1zM119 81h1v1h-1zM125 81h1v1h-1zM162 81h4v1h-4zM142 82h2v1h-2zM180 82h1v1h-1zM223 82h1v1h-1zM136 83h2v1h-2zM142 83h2v1h-2zM150 83h1v1h-1zM142 84h1v1h-1zM170 84h7v1h-7zM136 85h1v1h-1zM171 85h4v1h-4zM176 85h1v1h-1zM133 86h1v1h-1zM139 86h1v1h-1zM141 86h1v1h-1zM144 86h1v1h-1zM169 86h1v1h-1zM171 86h2v1h-2zM174 86h3v1h-3zM86 87h1v1h-1zM169 87h1v1h-1zM171 87h2v1h-2zM175 87h2v1h-2zM184 87h1v1h-1zM199 87h1v1h-1zM142 88h1v1h-1zM186 88h2v1h-2zM128 89h1v1h-1zM132 89h1v1h-1zM140 89h3v1h-3zM178 89h1v1h-1zM185 89h1v1h-1zM203 89h1v1h-1zM114 90h1v1h-1zM144 90h1v1h-1zM165 90h1v1h-1zM186 90h2v1h-2zM236 90h1v1h-1zM142 91h1v1h-1zM204 91h1v1h-1zM125 92h1v1h-1zM138 92h3v1h-3zM143 92h1v1h-1zM188 92h2v1h-2zM190 93h1v1h-1zM204 93h1v1h-1zM205 94h1v1h-1zM140 95h1v1h-1zM226 95h1v1h-1zM244 95h2v1h-2zM254 95h1v1h-1zM1 96h3v1h-3zM7 96h1v1h-1zM76 96h1v1h-1zM252 96h1v1h-1zM254 96h1v1h-1zM0 97h1v1h-1zM3 97h2v1h-2zM6 97h1v1h-1zM112 97h3v1h-3zM227 97h1v1h-1zM230 97h1v1h-1zM235 97h1v1h-1zM239 97h1v1h-1zM252 97h1v1h-1zM0 98h2v1h-2zM3 98h1v1h-1zM5 98h3v1h-3zM21 98h1v1h-1zM23 98h1v1h-1zM112 98h2v1h-2zM224 98h1v1h-1zM227 98h1v1h-1zM251 98h1v1h-1zM255 98h1v1h-1zM0 99h2v1h-2zM3 99h1v1h-1zM5 99h2v1h-2zM21 99h1v1h-1zM23 99h2v1h-2zM112 99h4v1h-4zM172 99h1v1h-1zM227 99h1v1h-1zM238 99h1v1h-1zM10 100h2v1h-2zM78 100h1v1h-1zM112 100h4v1h-4zM224 100h1v1h-1zM242 100h1v1h-1zM247 100h1v1h-1zM251 100h1v1h-1zM9 101h1v1h-1zM11 101h1v1h-1zM73 101h2v1h-2zM112 101h1v1h-1zM114 101h1v1h-1zM163 101h1v1h-1zM175 101h1v1h-1zM228 101h1v1h-1zM249 101h1v1h-1zM251 101h1v1h-1zM113 102h1v1h-1zM115 102h1v1h-1zM230 102h1v1h-1zM239 102h1v1h-1zM246 102h1v1h-1zM112 103h2v1h-2zM115 103h1v1h-1zM244 103h1v1h-1zM77 104h1v1h-1zM255 104h1v1h-1zM70 105h1v1h-1zM77 105h1v1h-1zM236 105h1v1h-1zM244 105h1v1h-1zM32 106h1v1h-1zM172 106h1v1h-1zM231 106h1v1h-1zM233 106h1v1h-1zM246 106h2v1h-2zM73 107h1v1h-1zM76 107h2v1h-2zM177 107h1v1h-1zM225 107h1v1h-1zM229 107h1v1h-1zM240 107h1v1h-1zM251 107h1v1h-1zM127 108h1v1h-1zM225 108h1v1h-1zM231 108h2v1h-2zM238 108h1v1h-1zM243 108h1v1h-1zM254 108h1v1h-1zM67 109h2v1h-2zM105 109h1v1h-1zM125 109h1v1h-1zM69 110h2v1h-2zM228 110h1v1h-1zM32 111h1v1h-1zM122 111h1v1h-1zM177 111h1v1h-1zM233 111h1v1h-1zM236 111h1v1h-1zM249 111h1v1h-1zM253 111h1v1h-1zM76 112h1v1h-1zM133 112h1v1h-1zM236 112h1v1h-1zM20 113h1v1h-1zM33 113h1v1h-1zM149 113h1v1h-1zM156 113h1v1h-1zM228 113h1v1h-1zM237 113h1v1h-1zM241 113h1v1h-1zM255 113h1v1h-1zM152 114h1v1h-1zM234 114h1v1h-1zM242 114h1v1h-1zM244 114h1v1h-1zM246 114h1v1h-1zM138 115h1v1h-1zM145 115h1v1h-1zM147 115h1v1h-1zM236 115h1v1h-1zM250 115h1v1h-1zM24 116h1v1h-1zM140 116h1v1h-1zM160 116h1v1h-1zM138 117h1v1h-1zM142 117h1v1h-1zM227 117h1v1h-1zM235 117h1v1h-1zM239 117h2v1h-2zM243 117h1v1h-1zM252 117h1v1h-1zM19 118h1v1h-1zM131 118h1v1h-1zM137 118h1v1h-1zM149 118h1v1h-1zM160 118h1v1h-1zM175 118h1v1h-1zM246 118h2v1h-2zM22 119h1v1h-1zM144 119h1v1h-1zM149 119h1v1h-1zM241 119h1v1h-1zM244 119h1v1h-1zM246 119h1v1h-1zM248 119h1v1h-1zM253 119h1v1h-1zM80 120h3v1h-3zM87 120h1v1h-1zM89 120h2v1h-2zM93 120h3v1h-3zM114 120h1v1h-1zM129 120h2v1h-2zM133 120h1v1h-1zM139 120h1v1h-1zM142 120h1v1h-1zM157 120h1v1h-1zM160 120h1v1h-1zM234 120h1v1h-1zM248 120h1v1h-1zM25 121h1v1h-1zM80 121h7v1h-7zM88 121h3v1h-3zM92 121h1v1h-1zM114 121h2v1h-2zM136 121h2v1h-2zM143 121h1v1h-1zM145 121h1v1h-1zM147 121h1v1h-1zM246 121h1v1h-1zM80 122h1v1h-1zM82 122h3v1h-3zM86 122h1v1h-1zM88 122h1v1h-1zM92 122h1v1h-1zM94 122h1v1h-1zM114 122h2v1h-2zM150 122h1v1h-1zM231 122h1v1h-1zM239 122h1v1h-1zM249 122h2v1h-2zM31 123h1v1h-1zM80 123h2v1h-2zM83 123h1v1h-1zM85 123h1v1h-1zM88 123h3v1h-3zM93 123h3v1h-3zM114 123h1v1h-1zM128 123h1v1h-1zM135 123h1v1h-1zM146 123h1v1h-1zM153 123h1v1h-1zM231 123h1v1h-1zM235 123h1v1h-1zM246 123h1v1h-1zM249 123h1v1h-1zM252 123h3v1h-3zM80 124h8v1h-8zM89 124h2v1h-2zM92 124h1v1h-1zM94 124h2v1h-2zM133 124h1v1h-1zM138 124h1v1h-1zM143 124h1v1h-1zM154 124h1v1h-1zM157 124h2v1h-2zM227 124h1v1h-1zM242 124h2v1h-2zM247 124h1v1h-1zM254 124h1v1h-1zM30 125h1v1h-1zM80 125h1v1h-1zM82 125h1v1h-1zM84 125h6v1h-6zM91 125h1v1h-1zM93 125h2v1h-2zM133 125h1v1h-1zM135 125h1v1h-1zM144 125h1v1h-1zM146 125h1v1h-1zM153 125h1v1h-1zM160 125h1v1h-1zM230 125h1v1h-1zM241 125h1v1h-1zM252 125h1v1h-1zM81 126h2v1h-2zM84 126h2v1h-2zM87 126h1v1h-1zM95 126h1v1h-1zM128 126h1v1h-1zM141 126h1v1h-1zM151 126h1v1h-1zM225 126h1v1h-1zM231 126h1v1h-1zM80 127h2v1h-2zM83 127h3v1h-3zM87 127h1v1h-1zM90 127h2v1h-2zM93 127h1v1h-1zM128 127h1v1h-1zM131 127h1v1h-1zM135 127h1v1h-1zM159 127h1v1h-1zM237 127h1v1h-1zM81 128h1v1h-1zM85 128h8v1h-8zM94 128h2v1h-2zM83 129h1v1h-1zM254 129h1v1h-1zM81 130h2v1h-2zM67 132h1v1h-1zM69 132h1v1h-1zM133 132h1v1h-1zM209 132h1v1h-1zM225 132h1v1h-1zM231 132h1v1h-1zM239 132h1v1h-1zM252 132h1v1h-1zM67 133h1v1h-1zM125 133h1v1h-1zM211 133h1v1h-1zM237 133h1v1h-1zM230 134h1v1h-1zM123 135h1v1h-1zM226 135h1v1h-1zM236 135h1v1h-1zM243 135h1v1h-1zM250 135h1v1h-1zM108 136h1v1h-1zM229 136h1v1h-1zM208 137h1v1h-1zM226 137h1v1h-1zM250 137h1v1h-1zM77 138h1v1h-1zM224 138h1v1h-1zM236 138h1v1h-1zM243 138h1v1h-1zM111 139h1v1h-1zM251 139h1v1h-1zM253 139h1v1h-1zM90 140h3v1h-3zM111 140h1v1h-1zM172 140h1v1h-1zM237 140h1v1h-1zM90 141h1v1h-1zM92 141h1v1h-1zM91 142h1v1h-1zM245 143h1v1h-1zM35 144h1v1h-1zM233 144h1v1h-1zM75 145h1v1h-1zM230 146h1v1h-1zM243 146h1v1h-1zM96 148h1v1h-1zM101 148h1v1h-1zM236 148h1v1h-1zM102 149h4v1h-4zM103 150h3v1h-3zM91 151h1v1h-1zM102 151h3v1h-3zM205 151h3v1h-3zM78 152h1v1h-1zM81 152h1v1h-1zM138 152h1v1h-1zM204 152h1v1h-1zM206 152h3v1h-3zM231 152h1v1h-1zM77 153h2v1h-2zM81 153h1v1h-1zM205 153h2v1h-2zM208 153h1v1h-1zM234 153h1v1h-1zM78 154h4v1h-4zM204 154h3v1h-3zM208 154h1v1h-1zM71 155h1v1h-1zM186 155h1v1h-1zM204 155h4v1h-4zM233 155h1v1h-1zM236 155h1v1h-1zM204 156h2v1h-2zM208 156h1v1h-1zM228 156h1v1h-1zM5 157h1v1h-1zM10 157h1v1h-1zM205 157h4v1h-4zM226 157h1v1h-1zM33 158h1v1h-1zM119 159h1v1h-1zM86 160h1v1h-1zM97 160h1v1h-1zM175 160h1v1h-1zM199 160h1v1h-1zM22 161h1v1h-1zM31 161h1v1h-1zM128 161h1v1h-1zM230 161h1v1h-1zM31 162h1v1h-1zM9 163h1v1h-1zM83 163h3v1h-3zM168 163h1v1h-1zM228 163h1v1h-1zM83 164h1v1h-1zM237 164h1v1h-1zM27 165h1v1h-1zM83 165h1v1h-1zM85 165h1v1h-1zM97 165h1v1h-1zM122 165h1v1h-1zM234 165h1v1h-1zM31 166h1v1h-1zM190 166h1v1h-1zM16 167h1v1h-1zM50 167h1v1h-1zM20 168h1v1h-1zM191 168h1v1h-1zM226 168h1v1h-1zM232 168h1v1h-1zM238 168h1v1h-1zM201 169h1v1h-1zM221 169h1v1h-1zM16 170h1v1h-1zM35 170h1v1h-1zM198 170h4v1h-4zM239 170h1v1h-1zM29 171h1v1h-1zM126 171h2v1h-2zM198 171h2v1h-2zM201 171h1v1h-1zM41 172h1v1h-1zM125 172h3v1h-3zM155 172h1v1h-1zM199 172h2v1h-2zM210 172h1v1h-1zM16 173h1v1h-1zM31 173h1v1h-1zM70 173h2v1h-2zM99 173h1v1h-1zM119 173h2v1h-2zM125 173h1v1h-1zM212 173h1v1h-1zM36 174h1v1h-1zM70 174h1v1h-1zM119 174h1v1h-1zM121 174h1v1h-1zM19 175h1v1h-1zM224 176h1v1h-1zM102 177h3v1h-3zM102 178h2v1h-2zM102 179h1v1h-1zM90 180h1v1h-1zM91 181h1v1h-1zM144 181h1v1h-1zM213 182h1v1h-1zM59 183h1v1h-1zM151 183h1v1h-1zM247 183h1v1h-1zM255 184h1v1h-1zM159 186h1v1h-1zM226 186h1v1h-1zM247 186h1v1h-1zM170 187h1v1h-1zM247 187h1v1h-1zM251 187h1v1h-1zM64 188h1v1h-1zM79 188h1v1h-1zM52 189h1v1h-1zM142 189h1v1h-1zM254 189h1v1h-1zM13 190h1v1h-1zM114 190h2v1h-2zM166 190h1v1h-1zM244 190h1v1h-1zM54 191h1v1h-1zM77 191h1v1h-1zM114 191h2v1h-2zM244 191h1v1h-1zM252 191h1v1h-1zM14 192h1v1h-1zM250 192h2v1h-2zM18 193h1v1h-1zM61 193h1v1h-1zM246 193h1v1h-1zM44 194h1v1h-1zM97 194h1v1h-1zM109 194h2v1h-2zM247 194h1v1h-1zM25 195h1v1h-1zM110 195h2v1h-2zM49 196h1v1h-1zM19 197h1v1h-1zM57 197h1v1h-1zM118 197h1v1h-1zM44 198h1v1h-1zM8 199h1v1h-1zM55 199h1v1h-1zM175 199h1v1h-1zM14 200h1v1h-1zM25 200h2v1h-2zM28 200h2v1h-2zM32 200h1v1h-1zM19 201h1v1h-1zM22 201h1v1h-1zM26 201h1v1h-1zM28 201h1v1h-1zM37 201h1v1h-1zM25 202h3v1h-3zM37 202h1v1h-1zM249 202h1v1h-1zM251 202h2v1h-2zM12 203h1v1h-1zM26 203h4v1h-4zM35 203h1v1h-1zM49 203h1v1h-1zM97 203h1v1h-1zM249 203h1v1h-1zM251 203h1v1h-1zM253 203h1v1h-1zM14 204h1v1h-1zM20 204h1v1h-1zM24 204h6v1h-6zM180 204h1v1h-1zM250 204h1v1h-1zM253 204h1v1h-1zM21 205h4v1h-4zM38 205h1v1h-1zM42 205h1v1h-1zM46 205h1v1h-1zM50 205h1v1h-1zM53 205h1v1h-1zM65 205h1v1h-1zM249 205h1v1h-1zM251 205h2v1h-2zM254 205h1v1h-1zM12 206h1v1h-1zM15 206h1v1h-1zM20 206h3v1h-3zM52 206h2v1h-2zM250 206h4v1h-4zM13 207h1v1h-1zM20 207h3v1h-3zM24 207h1v1h-1zM36 207h1v1h-1zM21 208h2v1h-2zM24 208h1v1h-1zM29 208h1v1h-1zM55 208h1v1h-1zM6 209h2v1h-2zM20 209h1v1h-1zM22 209h3v1h-3zM53 209h1v1h-1zM61 209h1v1h-1zM37 210h1v1h-1zM9 211h1v1h-1zM11 211h1v1h-1zM33 211h1v1h-1zM49 211h1v1h-1zM101 211h1v1h-1zM12 212h4v1h-4zM19 212h1v1h-1zM102 212h2v1h-2zM168 212h1v1h-1zM10 213h1v1h-1zM12 213h2v1h-2zM15 213h1v1h-1zM22 213h1v1h-1zM61 213h1v1h-1zM100 213h1v1h-1zM102 213h2v1h-2zM203 213h1v1h-1zM5 214h1v1h-1zM12 214h4v1h-4zM100 214h1v1h-1zM102 214h2v1h-2zM2 215h2v1h-2zM12 215h1v1h-1zM15 215h1v1h-1zM31 215h2v1h-2zM34 215h2v1h-2zM86 215h1v1h-1zM100 215h4v1h-4zM107 215h4v1h-4zM8 216h2v1h-2zM15 216h1v1h-1zM30 216h2v1h-2zM33 216h2v1h-2zM42 216h1v1h-1zM44 216h1v1h-1zM2 217h1v1h-1zM12 217h1v1h-1zM16 217h1v1h-1zM32 217h2v1h-2zM35 217h1v1h-1zM38 217h1v1h-1zM112 217h1v1h-1zM26 218h1v1h-1zM29 218h1v1h-1zM32 218h1v1h-1zM35 218h1v1h-1zM138 218h1v1h-1zM2 219h1v1h-1zM27 219h1v1h-1zM36 219h1v1h-1zM41 219h1v1h-1zM53 219h1v1h-1zM100 219h1v1h-1zM8 220h1v1h-1zM12 220h1v1h-1zM29 220h1v1h-1zM110 220h1v1h-1zM17 221h1v1h-1zM19 221h1v1h-1zM21 221h1v1h-1zM57 221h1v1h-1zM62 221h1v1h-1zM101 221h1v1h-1zM22 222h1v1h-1zM37 222h1v1h-1zM42 222h1v1h-1zM2 223h1v1h-1zM34 223h1v1h-1zM39 223h1v1h-1zM62 224h1v1h-1zM206 224h1v1h-1zM5 225h1v1h-1zM29 225h1v1h-1zM34 225h1v1h-1zM38 225h1v1h-1zM61 225h1v1h-1zM47 226h1v1h-1zM1 227h1v1h-1zM13 227h1v1h-1zM53 227h1v1h-1zM25 228h1v1h-1zM7 229h1v1h-1zM29 229h2v1h-2zM93 229h1v1h-1zM108 229h1v1h-1zM22 230h1v1h-1zM35 230h1v1h-1zM37 230h1v1h-1zM145 230h1v1h-1zM40 231h1v1h-1zM56 231h1v1h-1zM88 231h1v1h-1zM18 232h1v1h-1zM40 232h1v1h-1zM252 232h1v1h-1zM18 233h1v1h-1zM42 233h1v1h-1zM52 233h1v1h-1zM252 233h1v1h-1zM83 234h1v1h-1zM152 234h1v1h-1zM0 235h1v1h-1zM6 235h1v1h-1zM71 235h1v1h-1zM250 235h1v1h-1zM26 236h2v1h-2zM48 236h2v1h-2zM51 236h1v1h-1zM240 236h1v1h-1zM20 237h1v1h-1zM25 237h1v1h-1zM42 237h1v1h-1zM48 237h4v1h-4zM217 237h1v1h-1zM250 237h1v1h-1zM2 238h1v1h-1zM47 238h1v1h-1zM49 238h4v1h-4zM54 238h1v1h-1zM2 239h1v1h-1zM27 239h1v1h-1zM36 239h1v1h-1zM48 239h1v1h-1zM51 239h1v1h-1zM48 240h5v1h-5zM70 240h1v1h-1zM107 240h1v1h-1zM109 240h3v1h-3zM236 240h1v1h-1zM43 241h1v1h-1zM53 241h1v1h-1zM69 241h2v1h-2zM107 241h2v1h-2zM186 241h1v1h-1zM12 242h1v1h-1zM18 242h1v1h-1zM52 242h1v1h-1zM69 242h1v1h-1zM71 242h1v1h-1zM107 242h2v1h-2zM110 242h1v1h-1zM25 243h1v1h-1zM57 243h1v1h-1zM108 243h1v1h-1zM110 243h2v1h-2zM7 244h1v1h-1zM48 244h1v1h-1zM50 244h1v1h-1zM93 245h1v1h-1zM185 245h1v1h-1zM15 246h1v1h-1zM11 247h1v1h-1zM44 247h1v1h-1zM59 247h2v1h-2zM4 248h1v1h-1zM8 248h1v1h-1zM25 248h2v1h-2zM29 248h1v1h-1zM38 248h1v1h-1zM65 248h1v1h-1zM22 249h1v1h-1zM24 249h1v1h-1zM27 249h4v1h-4zM32 249h1v1h-1zM42 249h1v1h-1zM22 250h1v1h-1zM25 250h2v1h-2zM28 250h1v1h-1zM36 250h1v1h-1zM43 250h1v1h-1zM46 250h1v1h-1zM1 251h1v1h-1zM6 251h1v1h-1zM23 251h3v1h-3zM27 251h4v1h-4zM56 251h2v1h-2zM84 251h1v1h-1zM9 252h1v1h-1zM24 252h1v1h-1zM26 252h6v1h-6zM178 252h1v1h-1zM215 252h1v1h-1zM238 252h1v1h-1zM23 253h5v1h-5zM29 253h2v1h-2zM35 253h1v1h-1zM37 253h1v1h-1zM39 253h1v1h-1zM9 254h1v1h-1zM23 254h5v1h-5zM30 254h1v1h-1zM4 255h1v1h-1zM25 255h2v1h-2zM29 255h2v1h-2zM37 255h1v1h-1zM62 255h1v1h-1z"/><path fill="#33ff00" d="M21 1h1v1h-1zM19 8h1v1h-1zM16 21h1v1h-1zM19 21h1v1h-1zM109 21h1v1h-1zM17 22h1v1h-1zM16 23h2v1h-2zM19 23h1v1h-1zM16 24h1v1h-1zM19 24h1v1h-1zM146 24h1v1h-1zM107 28h1v1h-1zM70 49h1v1h-1zM71 50h1v1h-1zM79 51h1v1h-1zM65 54h1v1h-1zM117 56h1v1h-1zM75 57h1v1h-1zM68 58h1v1h-1zM8 60h1v1h-1zM79 60h1v1h-1zM110 61h1v1h-1zM110 64h1v1h-1zM177 66h1v1h-1zM36 67h1v1h-1zM133 67h1v1h-1zM216 67h1v1h-1zM192 68h1v1h-1zM122 69h1v1h-1zM221 69h1v1h-1zM189 70h1v1h-1zM134 72h1v1h-1zM193 75h1v1h-1zM183 76h1v1h-1zM0 77h2v1h-2zM3 77h1v1h-1zM0 78h2v1h-2zM90 78h1v1h-1zM134 78h1v1h-1zM140 78h1v1h-1zM0 79h1v1h-1zM2 79h1v1h-1zM135 79h1v1h-1zM156 79h1v1h-1zM160 79h1v1h-1zM162 79h1v1h-1zM134 80h1v1h-1zM162 80h1v1h-1zM165 80h1v1h-1zM219 80h1v1h-1zM142 81h1v1h-1zM160 81h1v1h-1zM169 84h1v1h-1zM142 85h1v1h-1zM169 85h2v1h-2zM175 85h1v1h-1zM170 86h1v1h-1zM173 86h1v1h-1zM170 87h1v1h-1zM174 87h1v1h-1zM130 88h1v1h-1zM138 88h1v1h-1zM140 88h1v1h-1zM185 88h1v1h-1zM116 89h1v1h-1zM138 89h1v1h-1zM186 89h2v1h-2zM143 90h1v1h-1zM133 91h1v1h-1zM149 91h1v1h-1zM130 92h1v1h-1zM142 92h1v1h-1zM211 92h1v1h-1zM145 94h1v1h-1zM196 94h1v1h-1zM232 95h1v1h-1zM246 95h1v1h-1zM0 96h1v1h-1zM5 96h1v1h-1zM112 96h4v1h-4zM143 96h1v1h-1zM231 96h1v1h-1zM1 97h2v1h-2zM5 97h1v1h-1zM7 97h1v1h-1zM115 97h1v1h-1zM228 97h1v1h-1zM2 98h1v1h-1zM4 98h1v1h-1zM22 98h1v1h-1zM24 98h1v1h-1zM114 98h1v1h-1zM231 98h1v1h-1zM242 98h1v1h-1zM245 98h1v1h-1zM4 99h1v1h-1zM7 99h1v1h-1zM22 99h1v1h-1zM77 99h1v1h-1zM231 99h1v1h-1zM234 99h1v1h-1zM12 100h1v1h-1zM10 101h1v1h-1zM12 101h1v1h-1zM113 101h1v1h-1zM47 102h1v1h-1zM69 102h1v1h-1zM75 102h1v1h-1zM112 102h1v1h-1zM114 102h1v1h-1zM236 102h1v1h-1zM243 102h1v1h-1zM247 102h1v1h-1zM253 102h1v1h-1zM66 103h1v1h-1zM114 103h1v1h-1zM225 103h1v1h-1zM237 103h1v1h-1zM78 104h1v1h-1zM176 104h1v1h-1zM225 104h1v1h-1zM232 104h1v1h-1zM245 104h1v1h-1zM254 104h1v1h-1zM176 105h1v1h-1zM239 105h1v1h-1zM72 107h1v1h-1zM234 109h1v1h-1zM252 109h1v1h-1zM74 110h1v1h-1zM232 110h1v1h-1zM236 110h1v1h-1zM239 110h1v1h-1zM255 110h1v1h-1zM245 112h1v1h-1zM136 113h1v1h-1zM123 114h1v1h-1zM134 114h1v1h-1zM143 114h1v1h-1zM145 114h1v1h-1zM236 114h1v1h-1zM249 114h1v1h-1zM31 115h1v1h-1zM154 115h1v1h-1zM223 115h1v1h-1zM242 115h1v1h-1zM246 115h1v1h-1zM20 116h1v1h-1zM126 116h1v1h-1zM139 116h1v1h-1zM143 116h1v1h-1zM146 116h1v1h-1zM154 116h1v1h-1zM241 116h1v1h-1zM254 116h1v1h-1zM233 117h1v1h-1zM241 117h1v1h-1zM24 118h1v1h-1zM235 118h1v1h-1zM26 119h1v1h-1zM160 119h1v1h-1zM226 119h1v1h-1zM84 120h3v1h-3zM88 120h1v1h-1zM91 120h2v1h-2zM131 120h1v1h-1zM136 120h1v1h-1zM171 120h1v1h-1zM253 120h2v1h-2zM70 121h1v1h-1zM87 121h1v1h-1zM91 121h1v1h-1zM93 121h3v1h-3zM129 121h1v1h-1zM149 121h1v1h-1zM233 121h1v1h-1zM254 121h1v1h-1zM85 122h1v1h-1zM87 122h1v1h-1zM89 122h3v1h-3zM93 122h1v1h-1zM95 122h1v1h-1zM147 122h1v1h-1zM158 122h1v1h-1zM21 123h1v1h-1zM82 123h1v1h-1zM84 123h1v1h-1zM86 123h2v1h-2zM91 123h1v1h-1zM115 123h1v1h-1zM157 123h1v1h-1zM30 124h1v1h-1zM88 124h1v1h-1zM91 124h1v1h-1zM93 124h1v1h-1zM238 124h1v1h-1zM81 125h1v1h-1zM83 125h1v1h-1zM92 125h1v1h-1zM95 125h1v1h-1zM136 125h1v1h-1zM140 125h1v1h-1zM147 125h1v1h-1zM242 125h1v1h-1zM246 125h1v1h-1zM80 126h1v1h-1zM86 126h1v1h-1zM88 126h7v1h-7zM143 126h1v1h-1zM235 126h1v1h-1zM82 127h1v1h-1zM86 127h1v1h-1zM89 127h1v1h-1zM92 127h1v1h-1zM94 127h2v1h-2zM155 127h1v1h-1zM232 127h1v1h-1zM253 127h1v1h-1zM255 127h1v1h-1zM80 128h1v1h-1zM82 128h3v1h-3zM93 128h1v1h-1zM254 128h1v1h-1zM237 129h1v1h-1zM212 130h1v1h-1zM224 130h1v1h-1zM211 131h1v1h-1zM255 131h1v1h-1zM68 132h1v1h-1zM208 132h1v1h-1zM224 132h1v1h-1zM68 133h2v1h-2zM225 134h1v1h-1zM254 135h1v1h-1zM212 136h1v1h-1zM238 136h1v1h-1zM234 137h1v1h-1zM223 138h1v1h-1zM240 138h1v1h-1zM109 139h2v1h-2zM0 140h1v1h-1zM109 140h2v1h-2zM45 142h1v1h-1zM90 142h1v1h-1zM249 145h1v1h-1zM237 147h1v1h-1zM65 149h1v1h-1zM102 150h1v1h-1zM105 151h1v1h-1zM204 151h1v1h-1zM208 151h1v1h-1zM79 152h2v1h-2zM205 152h1v1h-1zM80 153h1v1h-1zM204 153h1v1h-1zM207 153h1v1h-1zM224 154h1v1h-1zM230 154h1v1h-1zM208 155h1v1h-1zM206 156h2v1h-2zM23 157h1v1h-1zM204 157h1v1h-1zM125 159h1v1h-1zM202 159h1v1h-1zM24 160h1v1h-1zM27 160h1v1h-1zM228 160h1v1h-1zM42 161h1v1h-1zM95 162h1v1h-1zM16 164h1v1h-1zM84 164h1v1h-1zM46 166h1v1h-1zM60 166h1v1h-1zM89 166h1v1h-1zM110 166h1v1h-1zM21 167h1v1h-1zM23 167h1v1h-1zM9 168h1v1h-1zM87 168h1v1h-1zM23 169h1v1h-1zM28 169h1v1h-1zM198 169h1v1h-1zM200 169h1v1h-1zM235 169h1v1h-1zM230 170h1v1h-1zM125 171h1v1h-1zM200 171h1v1h-1zM236 171h1v1h-1zM198 172h1v1h-1zM201 172h1v1h-1zM212 172h1v1h-1zM237 172h1v1h-1zM69 173h1v1h-1zM121 173h1v1h-1zM127 173h1v1h-1zM211 173h1v1h-1zM213 173h1v1h-1zM221 173h1v1h-1zM71 174h1v1h-1zM120 174h1v1h-1zM3 176h1v1h-1zM212 177h1v1h-1zM89 178h1v1h-1zM91 180h1v1h-1zM5 181h1v1h-1zM92 183h1v1h-1zM148 184h1v1h-1zM96 187h1v1h-1zM78 188h1v1h-1zM220 188h1v1h-1zM78 189h1v1h-1zM127 189h1v1h-1zM243 189h1v1h-1zM51 190h1v1h-1zM116 190h1v1h-1zM243 191h1v1h-1zM65 193h1v1h-1zM111 194h1v1h-1zM127 194h1v1h-1zM23 195h1v1h-1zM13 196h1v1h-1zM29 196h1v1h-1zM48 196h1v1h-1zM40 197h1v1h-1zM53 199h1v1h-1zM24 200h1v1h-1zM27 200h1v1h-1zM24 201h2v1h-2zM27 201h1v1h-1zM29 201h1v1h-1zM41 201h1v1h-1zM43 201h1v1h-1zM24 202h1v1h-1zM28 202h2v1h-2zM250 202h1v1h-1zM253 202h1v1h-1zM24 203h2v1h-2zM252 203h1v1h-1zM54 204h1v1h-1zM249 204h1v1h-1zM251 204h2v1h-2zM20 205h1v1h-1zM63 205h1v1h-1zM248 205h1v1h-1zM250 205h1v1h-1zM253 205h1v1h-1zM23 206h2v1h-2zM97 206h1v1h-1zM248 206h2v1h-2zM254 206h1v1h-1zM23 207h1v1h-1zM23 208h1v1h-1zM31 210h1v1h-1zM35 210h1v1h-1zM7 211h1v1h-1zM29 211h1v1h-1zM25 212h1v1h-1zM100 212h2v1h-2zM14 213h1v1h-1zM17 213h1v1h-1zM27 213h1v1h-1zM56 213h1v1h-1zM101 213h1v1h-1zM9 214h1v1h-1zM17 214h1v1h-1zM34 214h1v1h-1zM52 214h1v1h-1zM13 215h2v1h-2zM30 215h1v1h-1zM33 215h1v1h-1zM32 216h1v1h-1zM35 216h1v1h-1zM186 216h1v1h-1zM30 217h1v1h-1zM34 217h1v1h-1zM30 218h1v1h-1zM33 218h1v1h-1zM55 218h1v1h-1zM23 220h1v1h-1zM45 220h1v1h-1zM95 220h1v1h-1zM103 220h1v1h-1zM96 221h1v1h-1zM128 221h1v1h-1zM105 222h1v1h-1zM45 223h1v1h-1zM24 225h1v1h-1zM46 227h1v1h-1zM159 227h1v1h-1zM6 228h1v1h-1zM5 229h1v1h-1zM23 231h1v1h-1zM124 232h1v1h-1zM47 233h1v1h-1zM30 234h1v1h-1zM38 234h1v1h-1zM40 234h1v1h-1zM5 235h1v1h-1zM19 236h1v1h-1zM50 236h1v1h-1zM52 236h1v1h-1zM131 236h1v1h-1zM4 237h1v1h-1zM52 237h1v1h-1zM48 238h1v1h-1zM49 239h2v1h-2zM55 239h1v1h-1zM115 239h1v1h-1zM2 240h1v1h-1zM27 240h1v1h-1zM69 240h1v1h-1zM108 240h1v1h-1zM71 241h2v1h-2zM109 241h3v1h-3zM4 242h1v1h-1zM70 242h1v1h-1zM109 242h1v1h-1zM111 242h1v1h-1zM18 243h1v1h-1zM107 243h1v1h-1zM109 243h1v1h-1zM8 244h1v1h-1zM58 244h2v1h-2zM62 244h1v1h-1zM129 244h1v1h-1zM25 245h1v1h-1zM44 245h1v1h-1zM25 247h1v1h-1zM55 247h1v1h-1zM22 248h1v1h-1zM24 248h1v1h-1zM27 248h2v1h-2zM23 249h1v1h-1zM25 249h1v1h-1zM20 250h1v1h-1zM23 250h2v1h-2zM27 250h1v1h-1zM29 250h2v1h-2zM26 251h1v1h-1zM23 252h1v1h-1zM25 252h1v1h-1zM5 253h1v1h-1zM28 253h1v1h-1zM5 254h1v1h-1zM29 254h1v1h-1zM23 255h2v1h-2zM28 255h1v1h-1z"/><path fill="#99ff00" d="M108 24h1v1h-1zM109 25h1v1h-1zM26 30h1v1h-1zM7 52h1v1h-1zM78 56h1v1h-1zM7 61h1v1h-1zM200 68h1v1h-1zM165 72h1v1h-1zM184 72h1v1h-1zM219 72h1v1h-1zM199 76h1v1h-1zM9 78h4v1h-4zM9 79h1v1h-1zM11 79h2v1h-2zM251 79h1v1h-1zM241 82h1v1h-1zM147 89h1v1h-1zM236 89h1v1h-1zM141 90h1v1h-1zM177 90h1v1h-1zM189 91h1v1h-1zM190 92h1v1h-1zM188 93h2v1h-2zM232 97h1v1h-1zM223 98h1v1h-1zM228 99h1v1h-1zM235 99h1v1h-1zM230 100h1v1h-1zM249 100h1v1h-1zM254 100h1v1h-1zM250 102h1v1h-1zM76 103h1v1h-1zM233 103h1v1h-1zM73 104h1v1h-1zM243 104h1v1h-1zM249 107h1v1h-1zM74 108h1v1h-1zM250 109h1v1h-1zM27 110h1v1h-1zM29 110h1v1h-1zM125 110h1v1h-1zM126 111h1v1h-1zM232 111h1v1h-1zM234 111h1v1h-1zM72 112h1v1h-1zM143 113h1v1h-1zM160 113h1v1h-1zM157 114h1v1h-1zM245 114h1v1h-1zM165 116h1v1h-1zM144 117h1v1h-1zM157 117h1v1h-1zM225 117h1v1h-1zM229 117h1v1h-1zM20 118h1v1h-1zM251 119h1v1h-1zM149 120h1v1h-1zM248 122h1v1h-1zM138 123h1v1h-1zM145 123h1v1h-1zM130 124h1v1h-1zM234 124h1v1h-1zM141 125h1v1h-1zM229 125h1v1h-1zM207 128h1v1h-1zM210 128h1v1h-1zM212 128h1v1h-1zM207 129h1v1h-1zM209 129h1v1h-1zM212 129h1v1h-1zM208 130h1v1h-1zM243 130h1v1h-1zM207 131h1v1h-1zM212 131h1v1h-1zM207 133h1v1h-1zM232 133h1v1h-1zM231 135h1v1h-1zM87 141h1v1h-1zM150 153h1v1h-1zM126 158h1v1h-1zM235 160h1v1h-1zM73 161h1v1h-1zM232 161h1v1h-1zM242 162h1v1h-1zM22 166h1v1h-1zM254 171h2v1h-2zM255 172h1v1h-1zM254 173h2v1h-2zM112 174h1v1h-1zM254 174h2v1h-2zM7 175h1v1h-1zM15 175h1v1h-1zM254 175h2v1h-2zM69 177h1v1h-1zM249 181h1v1h-1zM0 184h9v1h-9zM0 185h9v1h-9zM43 185h1v1h-1zM144 185h1v1h-1zM0 186h9v1h-9zM0 187h9v1h-9zM211 187h1v1h-1zM0 188h9v1h-9zM126 188h1v1h-1zM0 189h9v1h-9zM0 190h9v1h-9zM158 190h1v1h-1zM0 191h9v1h-9zM18 195h1v1h-1zM8 200h4v1h-4zM34 200h1v1h-1zM8 201h4v1h-4zM8 202h4v1h-4zM33 202h1v1h-1zM60 202h1v1h-1zM8 203h4v1h-4zM36 203h1v1h-1zM8 204h4v1h-4zM8 205h5v1h-5zM29 205h1v1h-1zM5 206h1v1h-1zM56 206h1v1h-1zM80 206h1v1h-1zM30 207h1v1h-1zM28 208h1v1h-1zM40 208h6v1h-6zM40 209h6v1h-6zM106 209h1v1h-1zM5 210h1v1h-1zM40 210h6v1h-6zM105 210h1v1h-1zM40 211h6v1h-6zM106 211h1v1h-1zM231 211h1v1h-1zM27 212h1v1h-1zM40 212h6v1h-6zM56 212h1v1h-1zM40 213h6v1h-6zM40 214h6v1h-6zM40 215h6v1h-6zM24 218h1v1h-1zM28 218h1v1h-1zM62 218h1v1h-1zM98 218h1v1h-1zM104 221h1v1h-1zM31 222h1v1h-1zM16 224h8v1h-8zM203 224h1v1h-1zM16 225h8v1h-8zM16 226h8v1h-8zM16 227h8v1h-8zM16 228h8v1h-8zM27 228h1v1h-1zM57 228h7v1h-7zM16 229h8v1h-8zM25 229h1v1h-1zM57 229h7v1h-7zM10 230h1v1h-1zM17 230h1v1h-1zM57 230h7v1h-7zM8 231h9v1h-9zM33 231h1v1h-1zM57 231h7v1h-7zM8 232h9v1h-9zM57 232h7v1h-7zM8 233h9v1h-9zM57 233h7v1h-7zM8 234h9v1h-9zM35 234h1v1h-1zM57 234h7v1h-7zM8 235h9v1h-9zM57 235h7v1h-7zM8 236h9v1h-9zM57 236h7v1h-7zM247 236h1v1h-1zM8 237h9v1h-9zM57 237h7v1h-7zM178 237h1v1h-1zM8 238h9v1h-9zM18 238h1v1h-1zM57 238h7v1h-7zM8 239h9v1h-9zM57 239h7v1h-7zM185 239h1v1h-1zM38 242h1v1h-1zM63 242h1v1h-1zM60 243h1v1h-1zM11 245h1v1h-1zM14 245h1v1h-1zM36 246h1v1h-1zM12 248h1v1h-1zM185 248h1v1h-1zM14 249h1v1h-1zM31 250h1v1h-1zM2 251h1v1h-1zM48 253h1v1h-1zM22 255h1v1h-1zM35 255h1v1h-1zM45 255h1v1h-1z"/><path fill="#ff6600" d="M70 50h1v1h-1zM67 54h1v1h-1zM12 56h1v1h-1zM4 64h1v1h-1zM204 65h1v1h-1zM141 78h1v1h-1zM129 83h1v1h-1zM87 85h1v1h-1zM215 87h1v1h-1zM252 95h1v1h-1zM255 99h1v1h-1zM235 102h1v1h-1zM239 103h1v1h-1zM65 106h1v1h-1zM19 109h1v1h-1zM237 109h1v1h-1zM245 109h1v1h-1zM226 110h1v1h-1zM248 112h1v1h-1zM159 113h1v1h-1zM245 113h1v1h-1zM240 114h1v1h-1zM149 115h1v1h-1zM234 116h1v1h-1zM243 118h1v1h-1zM150 119h1v1h-1zM234 119h1v1h-1zM250 119h1v1h-1zM240 125h1v1h-1zM241 127h1v1h-1zM233 130h1v1h-1zM250 130h1v1h-1zM226 132h1v1h-1zM243 136h1v1h-1zM83 155h1v1h-1zM24 157h1v1h-1zM236 159h1v1h-1zM67 163h1v1h-1zM225 166h1v1h-1zM240 172h1v1h-1zM54 173h1v1h-1zM242 173h1v1h-1zM82 174h1v1h-1zM251 176h1v1h-1zM85 177h1v1h-1zM244 184h1v1h-1zM38 190h1v1h-1zM6 193h1v1h-1zM0 195h1v1h-1zM22 195h1v1h-1zM7 199h1v1h-1zM50 206h1v1h-1zM28 207h1v1h-1zM54 207h1v1h-1zM98 209h1v1h-1zM1 210h1v1h-1zM4 210h1v1h-1zM16 211h1v1h-1zM24 213h1v1h-1zM38 214h1v1h-1zM11 217h1v1h-1zM52 221h1v1h-1zM95 224h1v1h-1zM44 229h1v1h-1zM23 233h1v1h-1zM2 237h1v1h-1zM79 237h1v1h-1zM168 241h1v1h-1zM56 242h1v1h-1zM50 248h1v1h-1zM20 249h1v1h-1zM4 250h1v1h-1zM21 250h1v1h-1zM19 253h1v1h-1z"/><path fill="#66ff00" d="M110 26h1v1h-1zM67 52h1v1h-1zM70 54h1v1h-1zM75 54h2v1h-2zM77 59h1v1h-1zM129 62h1v1h-1zM165 67h1v1h-1zM229 67h1v1h-1zM221 68h1v1h-1zM202 72h1v1h-1zM227 72h1v1h-1zM129 73h1v1h-1zM128 74h1v1h-1zM173 75h1v1h-1zM185 75h1v1h-1zM130 76h1v1h-1zM183 78h1v1h-1zM125 79h1v1h-1zM132 80h1v1h-1zM124 81h1v1h-1zM174 81h1v1h-1zM244 81h1v1h-1zM138 83h1v1h-1zM203 83h1v1h-1zM140 86h1v1h-1zM139 87h1v1h-1zM119 88h1v1h-1zM132 91h1v1h-1zM224 95h1v1h-1zM229 96h1v1h-1zM234 96h1v1h-1zM251 96h1v1h-1zM234 97h1v1h-1zM86 98h1v1h-1zM243 98h1v1h-1zM72 100h1v1h-1zM232 100h1v1h-1zM236 100h1v1h-1zM75 101h1v1h-1zM241 101h1v1h-1zM243 101h1v1h-1zM74 102h1v1h-1zM228 102h1v1h-1zM234 103h1v1h-1zM252 104h1v1h-1zM239 109h1v1h-1zM21 110h1v1h-1zM67 110h1v1h-1zM234 110h1v1h-1zM241 110h1v1h-1zM242 111h1v1h-1zM255 111h1v1h-1zM238 112h1v1h-1zM240 112h1v1h-1zM246 112h1v1h-1zM145 113h1v1h-1zM232 113h1v1h-1zM140 114h1v1h-1zM155 115h1v1h-1zM174 115h1v1h-1zM224 115h1v1h-1zM253 115h3v1h-3zM31 116h1v1h-1zM249 116h1v1h-1zM141 117h1v1h-1zM143 117h1v1h-1zM147 117h1v1h-1zM236 117h1v1h-1zM144 118h1v1h-1zM225 118h1v1h-1zM230 119h1v1h-1zM24 120h1v1h-1zM230 120h1v1h-1zM236 120h1v1h-1zM245 120h1v1h-1zM252 120h1v1h-1zM134 121h1v1h-1zM227 121h1v1h-1zM134 122h1v1h-1zM233 122h1v1h-1zM135 124h1v1h-1zM137 124h1v1h-1zM241 124h1v1h-1zM253 124h1v1h-1zM173 125h1v1h-1zM145 126h1v1h-1zM230 126h1v1h-1zM252 126h1v1h-1zM136 127h1v1h-1zM134 129h1v1h-1zM245 130h1v1h-1zM249 132h1v1h-1zM224 134h1v1h-1zM238 134h1v1h-1zM244 136h1v1h-1zM235 140h1v1h-1zM158 141h1v1h-1zM175 143h1v1h-1zM240 143h1v1h-1zM252 144h1v1h-1zM227 151h1v1h-1zM237 154h1v1h-1zM142 155h1v1h-1zM123 165h1v1h-1zM25 166h1v1h-1zM49 166h1v1h-1zM141 167h1v1h-1zM225 170h1v1h-1zM145 172h1v1h-1zM113 175h1v1h-1zM76 176h1v1h-1zM155 180h1v1h-1zM252 181h1v1h-1zM142 185h1v1h-1zM221 188h1v1h-1zM19 189h1v1h-1zM110 191h1v1h-1zM10 192h1v1h-1zM7 193h1v1h-1zM244 195h1v1h-1zM11 197h1v1h-1zM128 197h1v1h-1zM39 202h1v1h-1zM54 202h1v1h-1zM59 202h1v1h-1zM52 204h1v1h-1zM75 204h1v1h-1zM107 204h1v1h-1zM3 205h1v1h-1zM33 205h1v1h-1zM45 206h1v1h-1zM206 208h1v1h-1zM200 209h1v1h-1zM97 210h1v1h-1zM22 211h1v1h-1zM60 211h1v1h-1zM57 212h1v1h-1zM0 213h1v1h-1zM9 213h1v1h-1zM31 213h1v1h-1zM36 213h1v1h-1zM23 215h1v1h-1zM57 215h1v1h-1zM3 219h1v1h-1zM35 219h1v1h-1zM30 220h1v1h-1zM43 220h1v1h-1zM34 221h1v1h-1zM40 222h1v1h-1zM50 222h1v1h-1zM206 222h1v1h-1zM8 224h1v1h-1zM73 226h1v1h-1zM22 232h1v1h-1zM246 233h1v1h-1zM33 234h1v1h-1zM43 235h1v1h-1zM43 237h1v1h-1zM81 237h1v1h-1zM46 238h1v1h-1zM65 239h1v1h-1zM4 241h1v1h-1zM60 241h1v1h-1zM8 242h1v1h-1zM41 243h1v1h-1zM81 243h1v1h-1zM54 244h1v1h-1zM75 244h1v1h-1zM20 245h1v1h-1zM50 246h1v1h-1zM9 247h1v1h-1zM36 247h1v1h-1zM61 247h1v1h-1zM54 248h1v1h-1zM13 249h1v1h-1zM5 250h1v1h-1zM44 250h1v1h-1zM5 251h1v1h-1zM8 251h1v1h-1zM21 252h1v1h-1zM72 252h1v1h-1zM58 253h1v1h-1zM70 253h1v1h-1zM177 253h1v1h-1zM56 254h1v1h-1zM150 255h1v1h-1z"/><path fill="#cccc00" d="M8 55h1v1h-1zM221 66h1v1h-1zM123 70h1v1h-1zM225 72h1v1h-1zM200 76h1v1h-1zM188 81h1v1h-1zM54 93h1v1h-1zM241 98h1v1h-1zM244 98h1v1h-1zM249 98h1v1h-1zM75 100h1v1h-1zM252 103h1v1h-1zM228 105h1v1h-1zM255 106h1v1h-1zM245 107h1v1h-1zM74 109h1v1h-1zM27 115h1v1h-1zM244 115h1v1h-1zM232 117h1v1h-1zM225 122h1v1h-1zM141 124h1v1h-1zM236 124h1v1h-1zM240 124h1v1h-1zM157 125h1v1h-1zM177 126h1v1h-1zM232 126h1v1h-1zM33 127h1v1h-1zM145 131h1v1h-1zM239 131h1v1h-1zM214 134h1v1h-1zM226 139h1v1h-1zM229 155h1v1h-1zM9 159h1v1h-1zM30 165h1v1h-1zM24 167h1v1h-1zM70 168h1v1h-1zM223 173h1v1h-1zM110 177h1v1h-1zM255 185h1v1h-1zM63 190h1v1h-1zM46 202h1v1h-1zM218 207h1v1h-1zM27 214h1v1h-1zM198 218h1v1h-1zM9 222h1v1h-1zM18 223h1v1h-1zM11 226h1v1h-1zM6 229h1v1h-1zM10 229h1v1h-1zM39 230h1v1h-1zM42 232h1v1h-1zM86 234h1v1h-1zM0 241h1v1h-1zM34 241h1v1h-1zM55 246h1v1h-1zM40 248h1v1h-1zM14 253h1v1h-1zM42 255h1v1h-1z"/><path fill="#00ff99" d="M110 22h1v1h-1zM79 53h1v1h-1zM67 60h1v1h-1zM9 62h1v1h-1zM71 63h1v1h-1zM140 73h1v1h-1zM222 88h1v1h-1zM249 95h1v1h-1zM249 96h1v1h-1zM77 97h1v1h-1zM239 100h1v1h-1zM232 101h1v1h-1zM65 103h1v1h-1zM238 104h1v1h-1zM74 106h1v1h-1zM239 107h1v1h-1zM255 107h1v1h-1zM73 108h1v1h-1zM124 116h1v1h-1zM149 116h1v1h-1zM231 116h1v1h-1zM133 117h1v1h-1zM251 117h1v1h-1zM21 118h1v1h-1zM158 119h1v1h-1zM235 119h1v1h-1zM244 120h1v1h-1zM140 122h1v1h-1zM149 122h1v1h-1zM139 123h1v1h-1zM172 123h1v1h-1zM226 131h1v1h-1zM139 132h1v1h-1zM226 134h2v1h-2zM222 135h1v1h-1zM237 135h1v1h-1zM252 137h1v1h-1zM177 153h1v1h-1zM86 156h1v1h-1zM7 158h1v1h-1zM237 162h1v1h-1zM234 170h1v1h-1zM28 171h1v1h-1zM131 172h1v1h-1zM238 173h1v1h-1zM179 178h1v1h-1zM196 181h1v1h-1zM42 186h1v1h-1zM191 188h1v1h-1zM244 188h1v1h-1zM144 191h1v1h-1zM1 194h1v1h-1zM4 200h1v1h-1zM26 205h1v1h-1zM41 205h1v1h-1zM82 209h1v1h-1zM31 212h1v1h-1zM63 213h1v1h-1zM41 216h1v1h-1zM106 216h1v1h-1zM110 217h1v1h-1zM59 218h1v1h-1zM99 218h1v1h-1zM40 221h1v1h-1zM8 226h1v1h-1zM25 235h1v1h-1zM17 244h1v1h-1zM196 253h1v1h-1z"/><path fill="#00cc33" d="M27 32h1v1h-1zM11 49h1v1h-1zM4 50h1v1h-1zM74 62h1v1h-1zM137 65h1v1h-1zM225 69h1v1h-1zM135 73h1v1h-1zM217 77h1v1h-1zM117 90h1v1h-1zM109 91h1v1h-1zM78 96h1v1h-1zM238 96h1v1h-1zM71 97h1v1h-1zM76 105h1v1h-1zM251 105h1v1h-1zM254 105h1v1h-1zM66 112h1v1h-1zM136 112h1v1h-1zM131 113h1v1h-1zM141 113h1v1h-1zM227 113h1v1h-1zM243 116h1v1h-1zM132 117h1v1h-1zM135 120h1v1h-1zM128 121h1v1h-1zM248 123h1v1h-1zM154 126h1v1h-1zM244 126h1v1h-1zM227 128h1v1h-1zM235 135h1v1h-1zM251 140h1v1h-1zM193 158h1v1h-1zM153 168h1v1h-1zM24 173h1v1h-1zM9 190h1v1h-1zM24 190h1v1h-1zM12 193h1v1h-1zM14 194h1v1h-1zM42 197h1v1h-1zM4 198h1v1h-1zM48 199h1v1h-1zM1 200h1v1h-1zM61 201h1v1h-1zM35 205h1v1h-1zM203 215h1v1h-1zM97 216h1v1h-1zM15 219h1v1h-1zM21 219h1v1h-1zM37 221h1v1h-1zM46 223h1v1h-1zM49 224h1v1h-1zM6 226h1v1h-1zM37 236h1v1h-1zM19 238h1v1h-1zM40 239h1v1h-1zM70 239h1v1h-1zM91 247h1v1h-1zM15 255h1v1h-1z"/><path fill="#00ff33" d="M21 0h1v1h-1zM18 1h1v1h-1zM85 16h1v1h-1zM68 61h1v1h-1zM213 62h1v1h-1zM70 64h1v1h-1zM57 67h1v1h-1zM203 68h1v1h-1zM160 70h1v1h-1zM222 71h1v1h-1zM141 77h1v1h-1zM2 78h1v1h-1zM143 78h1v1h-1zM207 78h1v1h-1zM3 79h1v1h-1zM161 81h1v1h-1zM141 87h1v1h-1zM173 87h1v1h-1zM133 89h1v1h-1zM142 90h1v1h-1zM242 90h1v1h-1zM4 96h1v1h-1zM6 96h1v1h-1zM253 97h1v1h-1zM115 98h1v1h-1zM235 98h1v1h-1zM2 99h1v1h-1zM248 100h1v1h-1zM115 101h1v1h-1zM228 103h1v1h-1zM239 106h1v1h-1zM241 108h1v1h-1zM227 110h1v1h-1zM224 111h1v1h-1zM129 112h1v1h-1zM66 113h1v1h-1zM137 114h1v1h-1zM148 114h1v1h-1zM119 115h1v1h-1zM132 115h1v1h-1zM137 116h1v1h-1zM244 118h1v1h-1zM83 120h1v1h-1zM115 120h1v1h-1zM249 121h1v1h-1zM253 121h1v1h-1zM81 122h1v1h-1zM230 122h1v1h-1zM255 122h1v1h-1zM92 123h1v1h-1zM130 123h1v1h-1zM160 124h1v1h-1zM23 125h1v1h-1zM90 125h1v1h-1zM156 125h1v1h-1zM158 125h1v1h-1zM233 125h1v1h-1zM251 125h1v1h-1zM83 126h1v1h-1zM88 127h1v1h-1zM129 127h1v1h-1zM235 129h1v1h-1zM245 129h1v1h-1zM238 133h1v1h-1zM231 134h1v1h-1zM248 135h1v1h-1zM239 137h1v1h-1zM246 139h1v1h-1zM245 140h1v1h-1zM235 141h1v1h-1zM240 142h1v1h-1zM158 143h1v1h-1zM228 144h1v1h-1zM226 145h1v1h-1zM253 146h1v1h-1zM102 152h1v1h-1zM79 153h1v1h-1zM207 154h1v1h-1zM13 163h1v1h-1zM27 163h1v1h-1zM190 164h1v1h-1zM199 169h1v1h-1zM211 172h1v1h-1zM210 173h1v1h-1zM69 174h1v1h-1zM242 174h1v1h-1zM118 176h1v1h-1zM103 179h1v1h-1zM109 180h1v1h-1zM214 180h1v1h-1zM90 181h1v1h-1zM80 188h1v1h-1zM46 189h1v1h-1zM144 189h1v1h-1zM116 191h1v1h-1zM109 195h1v1h-1zM43 196h1v1h-1zM6 198h1v1h-1zM12 198h1v1h-1zM9 199h1v1h-1zM42 199h1v1h-1zM2 201h1v1h-1zM250 203h1v1h-1zM45 205h1v1h-1zM20 208h1v1h-1zM47 208h1v1h-1zM203 208h1v1h-1zM21 209h1v1h-1zM101 214h1v1h-1zM5 215h1v1h-1zM9 215h1v1h-1zM58 216h1v1h-1zM1 217h1v1h-1zM31 217h1v1h-1zM31 218h1v1h-1zM34 218h1v1h-1zM1 220h1v1h-1zM56 220h1v1h-1zM18 221h1v1h-1zM51 221h1v1h-1zM63 225h1v1h-1zM194 225h1v1h-1zM35 228h1v1h-1zM20 231h1v1h-1zM19 232h1v1h-1zM35 233h1v1h-1zM52 239h1v1h-1zM44 240h1v1h-1zM56 240h1v1h-1zM15 242h1v1h-1zM50 242h1v1h-1zM58 242h1v1h-1zM23 245h1v1h-1zM14 246h1v1h-1zM40 246h1v1h-1zM84 247h1v1h-1zM23 248h1v1h-1zM30 248h1v1h-1zM26 249h1v1h-1zM161 249h1v1h-1zM3 250h1v1h-1zM54 252h1v1h-1zM6 253h1v1h-1zM28 254h1v1h-1zM27 255h1v1h-1z"/><path fill="#00cccc" d="M131 70h1v1h-1zM218 79h1v1h-1zM196 80h1v1h-1zM121 81h1v1h-1zM160 83h1v1h-1zM138 90h1v1h-1zM248 98h1v1h-1zM253 107h1v1h-1zM29 120h1v1h-1zM154 123h1v1h-1zM152 124h1v1h-1zM251 138h1v1h-1zM114 142h1v1h-1zM18 163h1v1h-1zM226 167h1v1h-1zM234 175h1v1h-1zM7 206h1v1h-1zM103 208h1v1h-1zM55 211h1v1h-1zM17 218h1v1h-1zM16 219h1v1h-1zM32 225h1v1h-1zM4 234h1v1h-1zM1 246h1v1h-1z"/><path fill="#00cc00" d="M70 51h1v1h-1zM74 52h1v1h-1zM196 52h1v1h-1zM4 53h1v1h-1zM73 53h2v1h-2zM72 55h1v1h-1zM113 55h1v1h-1zM7 56h1v1h-1zM12 57h1v1h-1zM67 57h1v1h-1zM70 57h1v1h-1zM75 58h1v1h-1zM6 59h2v1h-2zM68 60h1v1h-1zM79 62h1v1h-1zM145 62h1v1h-1zM12 63h1v1h-1zM74 63h1v1h-1zM76 64h1v1h-1zM126 66h1v1h-1zM15 67h1v1h-1zM126 67h1v1h-1zM224 68h1v1h-1zM231 70h1v1h-1zM125 71h1v1h-1zM216 73h1v1h-1zM135 74h1v1h-1zM133 75h1v1h-1zM243 75h1v1h-1zM134 77h1v1h-1zM114 80h1v1h-1zM129 80h1v1h-1zM136 80h1v1h-1zM252 81h1v1h-1zM131 82h1v1h-1zM162 82h1v1h-1zM145 84h1v1h-1zM227 87h1v1h-1zM128 91h1v1h-1zM139 91h1v1h-1zM141 92h1v1h-1zM137 94h1v1h-1zM235 95h1v1h-1zM228 96h1v1h-1zM22 97h1v1h-1zM73 97h1v1h-1zM238 97h1v1h-1zM68 98h1v1h-1zM228 98h2v1h-2zM232 99h1v1h-1zM243 100h1v1h-1zM246 100h1v1h-1zM231 101h1v1h-1zM253 101h1v1h-1zM65 102h1v1h-1zM251 103h1v1h-1zM223 104h1v1h-1zM245 105h2v1h-2zM21 106h1v1h-1zM224 106h1v1h-1zM226 106h1v1h-1zM241 106h2v1h-2zM75 107h1v1h-1zM80 107h1v1h-1zM119 107h1v1h-1zM223 108h1v1h-1zM234 108h1v1h-1zM236 108h1v1h-1zM239 108h1v1h-1zM245 108h1v1h-1zM252 108h1v1h-1zM65 110h1v1h-1zM235 110h1v1h-1zM245 110h1v1h-1zM247 110h1v1h-1zM65 111h1v1h-1zM74 112h1v1h-1zM231 112h1v1h-1zM254 112h1v1h-1zM130 113h1v1h-1zM137 113h1v1h-1zM147 113h1v1h-1zM242 113h1v1h-1zM130 114h1v1h-1zM159 114h1v1h-1zM229 114h1v1h-1zM24 115h1v1h-1zM28 115h1v1h-1zM231 115h1v1h-1zM249 115h1v1h-1zM251 115h1v1h-1zM127 116h1v1h-1zM138 116h1v1h-1zM245 116h1v1h-1zM139 117h2v1h-2zM158 117h1v1h-1zM142 118h1v1h-1zM147 118h1v1h-1zM150 118h1v1h-1zM156 118h1v1h-1zM158 118h1v1h-1zM245 118h1v1h-1zM133 119h1v1h-1zM145 119h1v1h-1zM148 119h1v1h-1zM255 119h1v1h-1zM146 120h1v1h-1zM229 120h1v1h-1zM232 120h1v1h-1zM138 121h1v1h-1zM228 121h1v1h-1zM232 121h1v1h-1zM239 121h1v1h-1zM250 121h1v1h-1zM156 122h1v1h-1zM241 122h2v1h-2zM147 123h1v1h-1zM149 123h1v1h-1zM29 124h1v1h-1zM66 124h1v1h-1zM147 126h1v1h-1zM133 127h1v1h-1zM146 127h1v1h-1zM156 127h1v1h-1zM229 127h1v1h-1zM223 129h1v1h-1zM230 129h1v1h-1zM247 130h1v1h-1zM242 132h1v1h-1zM203 133h1v1h-1zM232 134h1v1h-1zM73 135h1v1h-1zM248 136h1v1h-1zM90 137h1v1h-1zM223 137h1v1h-1zM230 138h1v1h-1zM238 138h1v1h-1zM236 139h1v1h-1zM228 141h1v1h-1zM248 141h1v1h-1zM239 142h1v1h-1zM250 142h1v1h-1zM229 143h1v1h-1zM250 143h1v1h-1zM225 146h1v1h-1zM102 147h1v1h-1zM244 150h1v1h-1zM228 151h1v1h-1zM81 155h1v1h-1zM141 155h1v1h-1zM81 157h1v1h-1zM241 157h1v1h-1zM237 158h1v1h-1zM28 160h1v1h-1zM230 160h1v1h-1zM238 161h1v1h-1zM7 164h1v1h-1zM102 164h1v1h-1zM231 164h1v1h-1zM235 164h1v1h-1zM27 166h1v1h-1zM24 168h1v1h-1zM32 169h1v1h-1zM238 170h1v1h-1zM173 171h1v1h-1zM186 171h1v1h-1zM87 172h1v1h-1zM240 173h1v1h-1zM233 176h1v1h-1zM70 177h1v1h-1zM131 178h1v1h-1zM248 181h1v1h-1zM253 184h1v1h-1zM246 185h1v1h-1zM250 185h1v1h-1zM50 187h1v1h-1zM42 188h1v1h-1zM30 190h1v1h-1zM249 190h1v1h-1zM229 191h1v1h-1zM54 192h1v1h-1zM84 192h1v1h-1zM255 193h1v1h-1zM18 194h1v1h-1zM3 195h1v1h-1zM11 195h2v1h-2zM247 195h1v1h-1zM15 196h1v1h-1zM32 196h1v1h-1zM14 199h1v1h-1zM7 200h1v1h-1zM36 200h1v1h-1zM62 200h1v1h-1zM93 200h1v1h-1zM3 202h1v1h-1zM38 202h1v1h-1zM13 204h1v1h-1zM14 205h1v1h-1zM36 206h1v1h-1zM60 206h1v1h-1zM50 209h1v1h-1zM91 209h1v1h-1zM25 210h1v1h-1zM13 211h1v1h-1zM47 211h1v1h-1zM6 213h1v1h-1zM20 213h1v1h-1zM2 214h1v1h-1zM48 214h1v1h-1zM17 215h1v1h-1zM38 215h1v1h-1zM62 216h1v1h-1zM199 217h1v1h-1zM21 218h1v1h-1zM31 219h1v1h-1zM202 219h1v1h-1zM35 220h1v1h-1zM3 221h1v1h-1zM27 221h1v1h-1zM29 222h1v1h-1zM207 222h1v1h-1zM25 223h1v1h-1zM36 224h1v1h-1zM69 224h1v1h-1zM247 224h1v1h-1zM9 225h1v1h-1zM60 225h1v1h-1zM45 226h1v1h-1zM27 227h1v1h-1zM55 227h1v1h-1zM47 229h1v1h-1zM23 232h1v1h-1zM25 232h1v1h-1zM33 232h1v1h-1zM150 233h1v1h-1zM5 234h1v1h-1zM27 237h1v1h-1zM43 238h1v1h-1zM6 239h1v1h-1zM56 239h1v1h-1zM85 239h1v1h-1zM30 241h1v1h-1zM203 241h1v1h-1zM7 243h1v1h-1zM29 243h1v1h-1zM44 243h1v1h-1zM10 244h1v1h-1zM23 244h1v1h-1zM38 244h1v1h-1zM40 244h1v1h-1zM55 244h1v1h-1zM21 245h1v1h-1zM32 245h1v1h-1zM18 246h1v1h-1zM12 247h1v1h-1zM9 248h1v1h-1zM86 249h1v1h-1zM16 250h1v1h-1zM16 253h1v1h-1zM33 253h1v1h-1zM10 254h1v1h-1zM57 254h1v1h-1zM52 255h1v1h-1z"/><path fill="#ffff00" d="M20 5h1v1h-1zM65 50h1v1h-1zM79 54h1v1h-1zM78 60h1v1h-1zM79 63h1v1h-1zM140 68h1v1h-1zM182 74h1v1h-1zM133 78h1v1h-1zM139 78h1v1h-1zM144 80h1v1h-1zM222 81h1v1h-1zM196 82h1v1h-1zM156 85h1v1h-1zM144 88h1v1h-1zM173 89h1v1h-1zM238 93h1v1h-1zM65 96h1v1h-1zM236 97h1v1h-1zM243 97h1v1h-1zM245 97h1v1h-1zM79 98h1v1h-1zM253 98h1v1h-1zM80 101h1v1h-1zM75 103h1v1h-1zM235 103h1v1h-1zM233 104h1v1h-1zM242 104h1v1h-1zM231 105h1v1h-1zM247 105h1v1h-1zM253 108h1v1h-1zM69 109h1v1h-1zM53 110h1v1h-1zM30 111h1v1h-1zM242 112h1v1h-1zM18 114h1v1h-1zM227 114h1v1h-1zM131 115h1v1h-1zM252 115h1v1h-1zM131 116h1v1h-1zM229 116h2v1h-2zM150 117h1v1h-1zM151 118h1v1h-1zM230 118h2v1h-2zM151 119h1v1h-1zM132 120h1v1h-1zM237 120h1v1h-1zM234 121h1v1h-1zM128 122h1v1h-1zM175 122h1v1h-1zM227 122h1v1h-1zM232 122h1v1h-1zM29 123h1v1h-1zM227 123h1v1h-1zM236 123h1v1h-1zM240 123h1v1h-1zM156 124h1v1h-1zM171 126h1v1h-1zM227 126h1v1h-1zM100 127h1v1h-1zM230 127h1v1h-1zM234 127h1v1h-1zM227 130h1v1h-1zM235 130h1v1h-1zM232 132h1v1h-1zM246 134h1v1h-1zM234 138h1v1h-1zM225 139h1v1h-1zM4 142h1v1h-1zM237 146h1v1h-1zM94 150h1v1h-1zM33 156h1v1h-1zM237 157h1v1h-1zM226 158h1v1h-1zM234 160h1v1h-1zM9 162h1v1h-1zM223 162h1v1h-1zM33 165h1v1h-1zM242 167h1v1h-1zM14 169h1v1h-1zM215 169h1v1h-1zM105 173h1v1h-1zM105 178h1v1h-1zM252 180h1v1h-1zM197 183h1v1h-1zM247 185h1v1h-1zM56 192h1v1h-1zM114 192h1v1h-1zM94 194h1v1h-1zM13 195h1v1h-1zM55 197h1v1h-1zM61 197h1v1h-1zM113 198h1v1h-1zM47 200h1v1h-1zM64 201h1v1h-1zM240 202h1v1h-1zM39 203h1v1h-1zM6 206h1v1h-1zM10 206h1v1h-1zM41 206h1v1h-1zM51 209h1v1h-1zM63 209h1v1h-1zM32 210h1v1h-1zM46 210h1v1h-1zM17 212h1v1h-1zM235 212h1v1h-1zM99 215h1v1h-1zM42 219h1v1h-1zM5 221h1v1h-1zM83 221h1v1h-1zM102 221h1v1h-1zM4 222h1v1h-1zM23 223h1v1h-1zM43 223h1v1h-1zM50 226h1v1h-1zM198 227h1v1h-1zM208 227h1v1h-1zM28 228h1v1h-1zM43 229h1v1h-1zM3 234h1v1h-1zM37 234h1v1h-1zM51 234h1v1h-1zM46 237h1v1h-1zM28 240h1v1h-1zM41 241h1v1h-1zM243 242h1v1h-1zM16 243h1v1h-1zM37 243h1v1h-1zM2 244h1v1h-1zM58 245h1v1h-1zM21 246h1v1h-1zM20 248h1v1h-1zM52 249h1v1h-1zM48 254h1v1h-1z"/><path fill="#00cc66" d="M13 56h1v1h-1zM3 58h1v1h-1zM70 62h1v1h-1zM132 73h1v1h-1zM168 73h1v1h-1zM172 78h1v1h-1zM234 78h1v1h-1zM138 80h1v1h-1zM225 80h1v1h-1zM140 82h1v1h-1zM162 85h1v1h-1zM200 86h1v1h-1zM204 90h1v1h-1zM234 98h1v1h-1zM247 98h1v1h-1zM84 103h1v1h-1zM230 104h1v1h-1zM66 108h1v1h-1zM229 109h1v1h-1zM236 109h1v1h-1zM250 110h1v1h-1zM72 111h1v1h-1zM237 111h1v1h-1zM229 112h1v1h-1zM251 112h1v1h-1zM247 113h1v1h-1zM131 114h1v1h-1zM241 115h1v1h-1zM19 116h1v1h-1zM133 116h1v1h-1zM155 116h1v1h-1zM129 117h1v1h-1zM237 118h1v1h-1zM224 120h1v1h-1zM248 121h1v1h-1zM139 122h1v1h-1zM144 123h1v1h-1zM226 125h1v1h-1zM31 126h1v1h-1zM133 126h1v1h-1zM160 126h1v1h-1zM250 126h1v1h-1zM139 133h1v1h-1zM124 134h1v1h-1zM235 136h1v1h-1zM235 138h1v1h-1zM70 143h1v1h-1zM239 146h1v1h-1zM254 146h1v1h-1zM149 153h1v1h-1zM76 157h1v1h-1zM243 158h1v1h-1zM99 163h1v1h-1zM160 171h1v1h-1zM131 173h1v1h-1zM241 175h1v1h-1zM225 176h1v1h-1zM50 193h1v1h-1zM157 195h1v1h-1zM24 199h1v1h-1zM59 207h1v1h-1zM48 208h1v1h-1zM60 208h1v1h-1zM162 208h1v1h-1zM25 217h1v1h-1zM12 219h1v1h-1zM8 222h1v1h-1zM142 222h1v1h-1zM56 229h1v1h-1zM35 232h1v1h-1zM17 234h1v1h-1zM23 235h1v1h-1zM24 244h1v1h-1zM27 246h1v1h-1zM2 248h1v1h-1zM49 248h1v1h-1zM17 251h1v1h-1zM43 251h1v1h-1zM58 252h1v1h-1zM65 253h1v1h-1z"/><path fill="#00ff66" d="M4 52h1v1h-1zM77 52h1v1h-1zM14 53h1v1h-1zM229 54h1v1h-1zM65 55h1v1h-1zM77 64h1v1h-1zM214 70h1v1h-1zM206 71h1v1h-1zM218 77h1v1h-1zM29 78h1v1h-1zM140 80h2v1h-2zM181 83h1v1h-1zM130 87h1v1h-1zM204 87h1v1h-1zM218 87h1v1h-1zM153 92h1v1h-1zM136 94h1v1h-1zM236 96h1v1h-1zM65 97h1v1h-1zM241 99h1v1h-1zM223 100h1v1h-1zM237 100h1v1h-1zM73 103h1v1h-1zM242 103h1v1h-1zM247 103h1v1h-1zM228 104h1v1h-1zM250 105h1v1h-1zM67 106h1v1h-1zM245 106h1v1h-1zM252 106h1v1h-1zM246 109h1v1h-1zM254 110h1v1h-1zM74 111h1v1h-1zM77 112h1v1h-1zM144 112h1v1h-1zM232 112h1v1h-1zM68 113h1v1h-1zM124 113h1v1h-1zM132 113h1v1h-1zM153 113h1v1h-1zM147 114h1v1h-1zM153 114h1v1h-1zM230 114h1v1h-1zM156 115h1v1h-1zM30 116h1v1h-1zM255 116h1v1h-1zM237 117h1v1h-1zM27 118h1v1h-1zM139 119h1v1h-1zM237 119h1v1h-1zM243 119h1v1h-1zM147 120h1v1h-1zM246 120h1v1h-1zM142 121h1v1h-1zM151 121h1v1h-1zM244 121h1v1h-1zM29 122h1v1h-1zM129 122h1v1h-1zM174 122h1v1h-1zM235 122h1v1h-1zM225 123h1v1h-1zM148 124h1v1h-1zM150 124h1v1h-1zM255 124h1v1h-1zM246 126h1v1h-1zM255 126h1v1h-1zM248 128h1v1h-1zM73 132h1v1h-1zM159 133h1v1h-1zM243 134h1v1h-1zM236 136h1v1h-1zM79 139h1v1h-1zM243 141h1v1h-1zM247 141h1v1h-1zM228 142h1v1h-1zM236 142h1v1h-1zM243 142h1v1h-1zM236 143h1v1h-1zM225 144h1v1h-1zM234 154h1v1h-1zM225 157h1v1h-1zM67 159h1v1h-1zM91 159h1v1h-1zM232 160h1v1h-1zM30 161h1v1h-1zM143 161h1v1h-1zM12 163h1v1h-1zM22 163h1v1h-1zM252 173h1v1h-1zM209 176h1v1h-1zM109 177h1v1h-1zM55 194h1v1h-1zM5 197h1v1h-1zM38 197h1v1h-1zM7 198h1v1h-1zM44 202h1v1h-1zM48 202h1v1h-1zM63 203h1v1h-1zM15 204h1v1h-1zM123 207h1v1h-1zM5 208h1v1h-1zM104 209h1v1h-1zM32 213h2v1h-2zM99 213h1v1h-1zM63 214h1v1h-1zM22 215h1v1h-1zM3 217h1v1h-1zM56 217h1v1h-1zM38 219h1v1h-1zM9 220h1v1h-1zM32 220h1v1h-1zM170 225h1v1h-1zM57 227h1v1h-1zM36 230h1v1h-1zM54 232h1v1h-1zM54 234h1v1h-1zM84 235h1v1h-1zM28 236h1v1h-1zM5 238h1v1h-1zM40 243h1v1h-1zM14 244h1v1h-1zM9 245h1v1h-1zM146 245h1v1h-1zM50 247h1v1h-1zM37 254h1v1h-1z"/><path fill="#33cc00" d="M22 5h1v1h-1zM112 24h1v1h-1zM107 53h1v1h-1zM9 56h1v1h-1zM70 56h1v1h-1zM75 56h1v1h-1zM75 62h1v1h-1zM127 66h1v1h-1zM214 69h1v1h-1zM18 73h1v1h-1zM119 75h1v1h-1zM220 77h1v1h-1zM95 79h1v1h-1zM240 79h1v1h-1zM247 80h1v1h-1zM220 83h1v1h-1zM141 85h1v1h-1zM135 89h1v1h-1zM146 89h1v1h-1zM74 93h1v1h-1zM131 95h1v1h-1zM72 96h1v1h-1zM72 97h1v1h-1zM236 99h1v1h-1zM244 99h1v1h-1zM247 99h1v1h-1zM76 100h1v1h-1zM173 100h1v1h-1zM246 103h1v1h-1zM80 104h1v1h-1zM238 105h1v1h-1zM124 111h1v1h-1zM247 111h1v1h-1zM227 112h1v1h-1zM146 113h1v1h-1zM141 115h1v1h-1zM227 115h1v1h-1zM145 118h1v1h-1zM152 118h1v1h-1zM250 118h1v1h-1zM143 119h1v1h-1zM172 120h1v1h-1zM241 120h1v1h-1zM144 121h1v1h-1zM148 122h1v1h-1zM226 122h1v1h-1zM137 123h1v1h-1zM242 123h1v1h-1zM21 125h1v1h-1zM238 125h1v1h-1zM144 127h1v1h-1zM235 127h1v1h-1zM248 130h1v1h-1zM227 131h1v1h-1zM230 135h1v1h-1zM231 137h1v1h-1zM237 141h1v1h-1zM245 141h1v1h-1zM250 141h1v1h-1zM123 146h1v1h-1zM251 158h1v1h-1zM224 159h1v1h-1zM10 168h1v1h-1zM128 184h1v1h-1zM188 184h1v1h-1zM243 186h1v1h-1zM246 186h1v1h-1zM244 187h1v1h-1zM15 192h1v1h-1zM243 193h1v1h-1zM34 196h1v1h-1zM44 197h1v1h-1zM91 199h1v1h-1zM49 200h1v1h-1zM54 203h2v1h-2zM103 203h1v1h-1zM32 207h1v1h-1zM132 212h1v1h-1zM20 214h1v1h-1zM22 214h1v1h-1zM106 214h1v1h-1zM22 216h1v1h-1zM9 221h1v1h-1zM192 224h1v1h-1zM24 227h1v1h-1zM56 228h1v1h-1zM3 229h1v1h-1zM31 229h1v1h-1zM43 230h1v1h-1zM47 230h1v1h-1zM19 231h1v1h-1zM27 231h1v1h-1zM6 233h1v1h-1zM82 233h1v1h-1zM175 233h1v1h-1zM32 235h1v1h-1zM52 235h1v1h-1zM25 238h1v1h-1zM57 240h1v1h-1zM13 241h1v1h-1zM62 242h1v1h-1zM117 245h1v1h-1zM30 247h2v1h-2zM56 250h1v1h-1zM38 252h1v1h-1z"/><path fill="#66cc00" d="M109 20h1v1h-1zM25 28h1v1h-1zM68 52h1v1h-1zM70 55h1v1h-1zM72 59h1v1h-1zM73 61h1v1h-1zM5 63h1v1h-1zM143 69h1v1h-1zM185 73h1v1h-1zM139 76h1v1h-1zM217 79h1v1h-1zM236 80h1v1h-1zM140 81h1v1h-1zM237 81h1v1h-1zM146 92h1v1h-1zM228 92h1v1h-1zM215 93h1v1h-1zM240 96h1v1h-1zM242 96h1v1h-1zM243 99h1v1h-1zM70 100h1v1h-1zM226 101h1v1h-1zM240 104h1v1h-1zM71 105h1v1h-1zM122 108h1v1h-1zM235 108h1v1h-1zM93 109h1v1h-1zM241 109h1v1h-1zM78 111h1v1h-1zM228 111h1v1h-1zM248 111h1v1h-1zM27 112h1v1h-1zM71 112h1v1h-1zM249 112h1v1h-1zM138 113h1v1h-1zM234 113h1v1h-1zM248 113h1v1h-1zM25 114h1v1h-1zM145 116h1v1h-1zM148 116h1v1h-1zM251 116h1v1h-1zM159 117h1v1h-1zM230 117h1v1h-1zM23 118h1v1h-1zM138 119h1v1h-1zM229 119h1v1h-1zM240 120h1v1h-1zM255 120h1v1h-1zM158 123h1v1h-1zM149 124h1v1h-1zM235 124h1v1h-1zM246 124h1v1h-1zM22 125h1v1h-1zM223 125h1v1h-1zM243 125h1v1h-1zM249 126h1v1h-1zM26 127h1v1h-1zM132 127h1v1h-1zM143 132h1v1h-1zM251 132h1v1h-1zM252 135h1v1h-1zM239 140h1v1h-1zM246 142h1v1h-1zM239 147h1v1h-1zM199 153h1v1h-1zM11 156h1v1h-1zM82 158h1v1h-1zM99 158h1v1h-1zM81 163h1v1h-1zM16 171h1v1h-1zM12 172h1v1h-1zM37 174h1v1h-1zM10 175h1v1h-1zM244 180h1v1h-1zM64 185h1v1h-1zM244 186h1v1h-1zM221 187h1v1h-1zM6 195h1v1h-1zM83 196h1v1h-1zM43 199h1v1h-1zM43 200h1v1h-1zM58 200h1v1h-1zM56 202h1v1h-1zM55 207h1v1h-1zM34 209h1v1h-1zM47 213h1v1h-1zM28 215h1v1h-1zM27 217h1v1h-1zM22 219h1v1h-1zM4 224h1v1h-1zM49 225h1v1h-1zM245 231h1v1h-1zM49 234h1v1h-1zM17 238h1v1h-1zM50 241h1v1h-1zM8 243h1v1h-1zM13 245h1v1h-1zM42 245h1v1h-1zM24 246h1v1h-1zM6 249h1v1h-1zM14 251h1v1h-1z"/><path fill="#ffffff" d="M28 35h1v1h-1zM185 57h1v1h-1zM223 76h1v1h-1zM200 89h1v1h-1zM171 97h1v1h-1zM22 103h1v1h-1zM250 104h1v1h-1zM229 124h1v1h-1zM23 126h1v1h-1zM233 127h1v1h-1zM246 138h1v1h-1zM68 148h1v1h-1zM8 164h1v1h-1zM55 201h1v1h-1zM46 203h1v1h-1zM12 208h1v1h-1zM29 215h1v1h-1zM35 221h1v1h-1zM112 222h1v1h-1zM28 244h1v1h-1zM113 249h1v1h-1zM4 252h1v1h-1z"/><path fill="#cc6600" d="M23 4h1v1h-1zM29 27h1v1h-1zM27 30h1v1h-1zM69 54h1v1h-1zM9 57h1v1h-1zM70 61h1v1h-1zM218 69h1v1h-1zM131 80h1v1h-1zM251 84h1v1h-1zM127 86h1v1h-1zM233 90h1v1h-1zM254 99h1v1h-1zM233 101h1v1h-1zM174 110h1v1h-1zM255 112h1v1h-1zM151 113h1v1h-1zM255 118h1v1h-1zM245 119h1v1h-1zM141 121h1v1h-1zM144 124h1v1h-1zM152 126h1v1h-1zM158 126h1v1h-1zM145 127h1v1h-1zM238 137h1v1h-1zM233 141h1v1h-1zM110 143h1v1h-1zM125 146h1v1h-1zM224 146h1v1h-1zM160 156h1v1h-1zM100 173h1v1h-1zM151 182h1v1h-1zM218 188h1v1h-1zM246 188h1v1h-1zM46 192h1v1h-1zM5 202h1v1h-1zM54 222h1v1h-1zM48 225h1v1h-1zM46 241h1v1h-1zM29 246h1v1h-1zM29 247h1v1h-1z"/><path fill="#00cc99" d="M226 115h1v1h-1zM7 149h1v1h-1zM192 170h1v1h-1zM67 250h1v1h-1zM91 250h1v1h-1z"/><path fill="#00ffcc" d="M109 28h1v1h-1zM187 49h1v1h-1zM79 50h1v1h-1zM112 54h1v1h-1zM74 56h1v1h-1zM79 56h1v1h-1zM102 72h1v1h-1zM240 76h1v1h-1zM223 77h1v1h-1zM226 98h1v1h-1zM239 98h1v1h-1zM69 100h1v1h-1zM236 101h1v1h-1zM236 104h1v1h-1zM234 105h1v1h-1zM232 106h1v1h-1zM250 107h1v1h-1zM254 107h1v1h-1zM72 109h1v1h-1zM244 113h1v1h-1zM233 114h1v1h-1zM136 115h1v1h-1zM152 119h1v1h-1zM137 126h1v1h-1zM136 133h1v1h-1zM253 138h1v1h-1zM94 147h1v1h-1zM17 161h1v1h-1zM230 173h1v1h-1zM8 174h1v1h-1zM147 181h1v1h-1zM255 181h1v1h-1zM171 190h1v1h-1zM52 193h1v1h-1zM248 193h1v1h-1zM36 222h1v1h-1zM53 223h1v1h-1zM49 232h1v1h-1zM58 243h1v1h-1zM128 248h1v1h-1z"/><path fill="#ccff00" d="M243 109h1v1h-1zM242 118h1v1h-1zM232 119h1v1h-1zM148 125h1v1h-1zM233 128h1v1h-1zM242 195h1v1h-1zM18 202h1v1h-1zM50 208h1v1h-1zM39 209h1v1h-1zM38 212h1v1h-1zM11 214h1v1h-1zM39 218h1v1h-1zM19 220h1v1h-1zM38 253h1v1h-1z"/><path fill="#ffcc00" d="M200 56h1v1h-1zM187 71h1v1h-1zM247 77h1v1h-1zM226 99h1v1h-1zM252 100h1v1h-1zM251 111h1v1h-1zM241 112h1v1h-1zM250 136h1v1h-1zM248 142h1v1h-1zM228 154h1v1h-1zM128 157h1v1h-1zM23 164h1v1h-1zM71 183h1v1h-1zM31 231h1v1h-1zM79 242h1v1h-1z"/><path fill="#99cc00" d="M225 76h1v1h-1zM115 77h1v1h-1zM135 83h1v1h-1zM132 87h1v1h-1zM80 96h1v1h-1zM177 104h1v1h-1zM231 117h1v1h-1zM149 125h1v1h-1zM98 191h1v1h-1zM41 240h1v1h-1z"/><!--M3e--></svg></div>
<div class="bar" style="left:178px"><span class="abs" style="left:5px">0</span><span class="abs" style="right:5px">100</span></div>
<div class="bar" style="left:435px"><span class="abs" style="left:5px">0</span><span class="abs" style="right:5px">100</span></div>
<div class="bar" style="left:692px"><span class="abs" style="left:5px">100 Out</span><span class="abs" style="left:92.5px;opacity:.85">In = Out</span><span class="abs" style="right:5px">100 In</span></div>

<div class="abs" style="left:358px;top:540px;width:220px;height:12px;border:1px solid #ccc;border-radius:3px;background:#fff"><div class="ddbtn" style="left:195px;top:4px"></div></div>

<div id="sb" class="abs"></div>
<div id="thumb" class="abs"></div>
<div class="grip" style="top:158px"></div><div class="grip" style="top:161px"></div><div class="grip" style="top:164px"></div>
<div class="arr" style="top:5.5px;border-bottom:4px solid #444;border-top:none"></div><div class="arr" style="top:539px;border-top:4px solid #444;border-bottom:none"></div>
<div id="bot" class="abs"></div>
</body>
</html>
